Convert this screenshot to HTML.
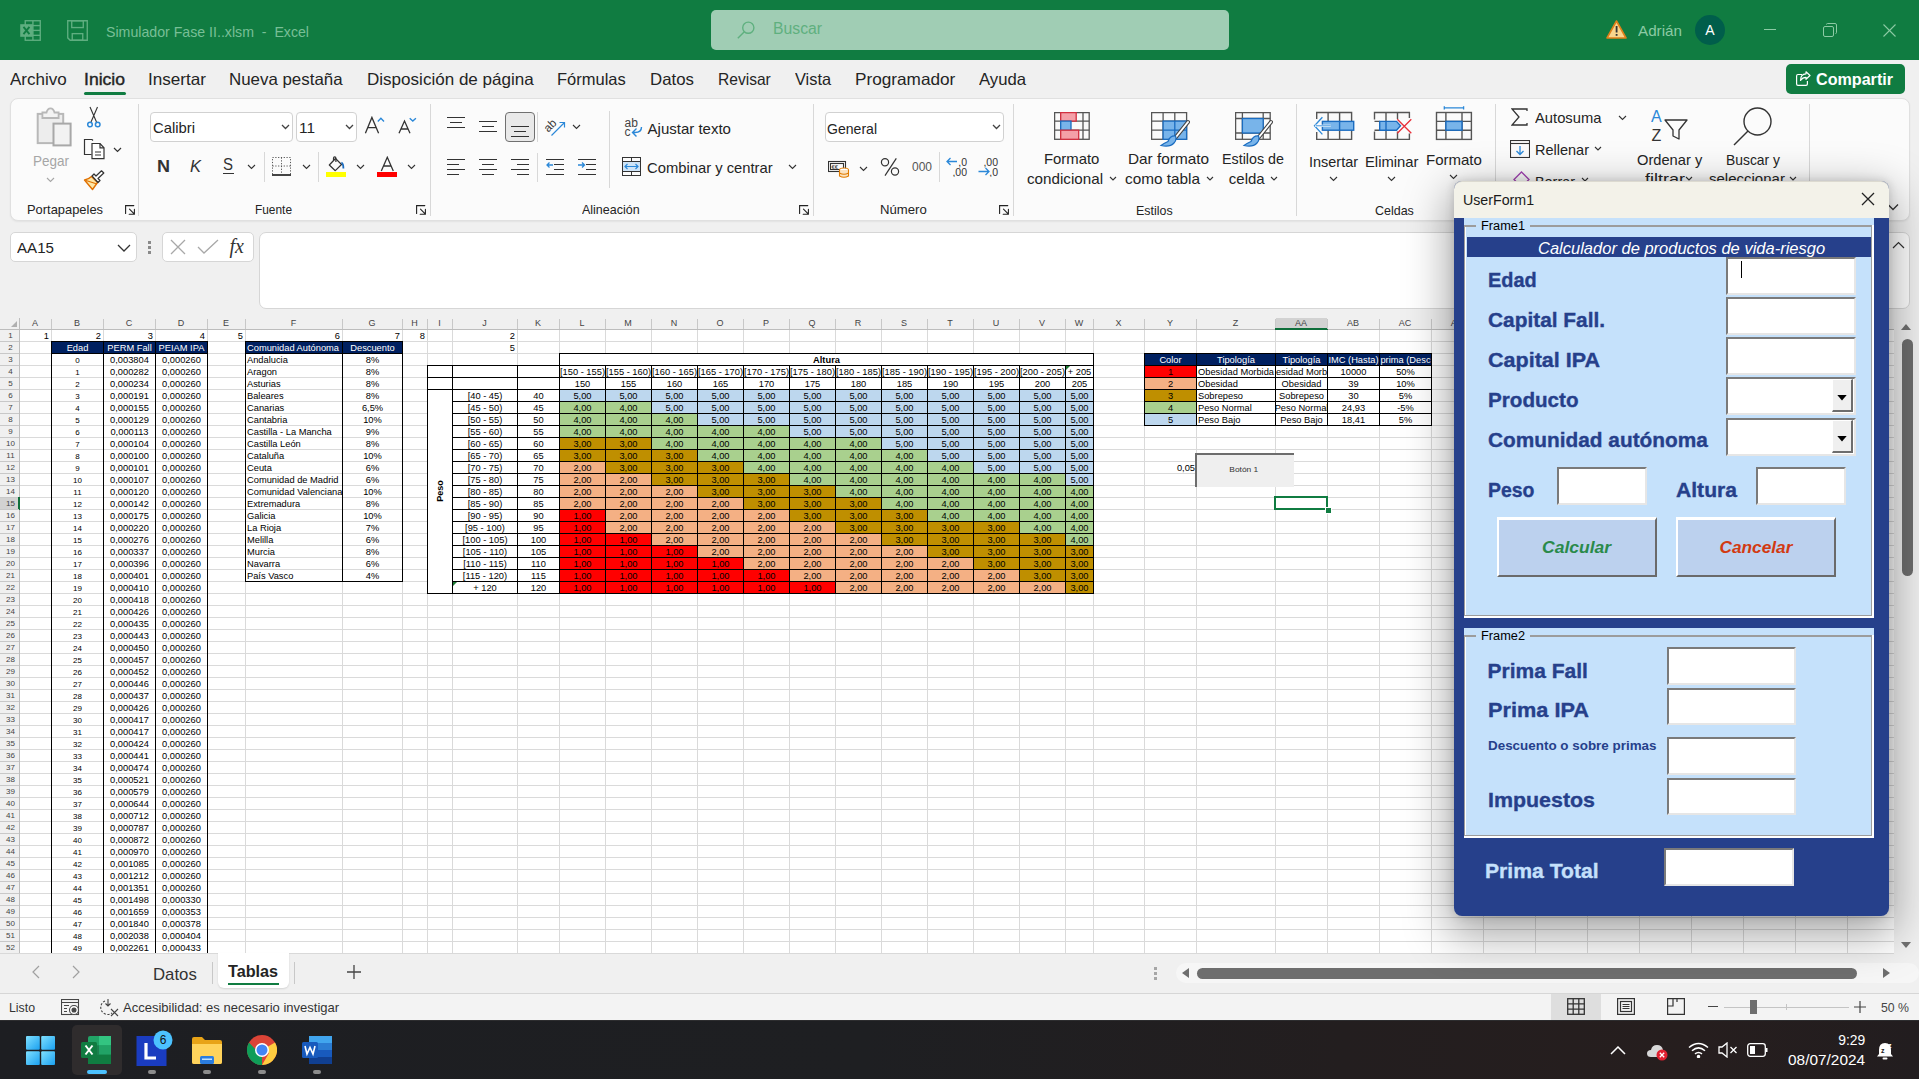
<!DOCTYPE html><html><head><meta charset="utf-8"><style>*{margin:0;padding:0}
html,body{width:1919px;height:1079px;overflow:hidden;background:#f0f0f0;font-family:"Liberation Sans",sans-serif;position:relative}
.a{position:absolute}
.t{position:absolute;white-space:pre}
.c{position:absolute;white-space:nowrap;box-sizing:border-box}
</style></head><body><div class="a" style="left:0px;top:0px;width:1919px;height:60px;background:#107c41;"></div><svg class="a" style="left:20px;top:20px" width="21" height="21" viewBox="0 0 20 20" fill="none" stroke="#5fae80" stroke-width="1.3">
<rect x="5" y="0.7" width="14.3" height="18.6"/><line x1="5" y1="5.3" x2="19.3" y2="5.3"/><line x1="5" y1="9.9" x2="19.3" y2="9.9"/><line x1="5" y1="14.6" x2="19.3" y2="14.6"/><line x1="12.3" y1="0.7" x2="12.3" y2="19.3"/>
<rect x="0.2" y="4" width="12" height="12" fill="#5fae80" stroke="none"/><path d="M3.3 6.5 L9 13.5 M9 6.5 L3.3 13.5" stroke="#107c41" stroke-width="1.8"/></svg><svg class="a" style="left:67px;top:20px" width="21" height="21" viewBox="0 0 20 20" fill="none" stroke="#5fae80" stroke-width="1.3">
<path d="M0.7 0.7 H19.3 V19.3 H3 L0.7 17 Z"/><rect x="4.5" y="0.7" width="11" height="6.5"/><rect x="5" y="13" width="10" height="6.3"/></svg><div class="t" style="left:106.40px;top:23.60px;font-size:15px;line-height:15px;color:#78bf96;transform:scaleX(0.944);transform-origin:left;">Simulador Fase II..xlsm  -  Excel</div><div class="a" style="left:711px;top:10px;width:518px;height:40px;background:#a0cdb4;border-radius:5px;"></div><svg class="a" style="left:737px;top:21px" width="18" height="18" viewBox="0 0 18 18" fill="none" stroke="#5fb07f" stroke-width="1.4"><circle cx="11.3" cy="6.7" r="5.6"/><line x1="7.3" y1="10.7" x2="0.8" y2="17.2"/></svg><div class="t" style="left:773.00px;top:21.45px;font-size:16px;line-height:16px;color:#5fb07f;transform:scaleX(0.984);transform-origin:left;">Buscar</div><svg class="a" style="left:1606px;top:20px" width="21" height="19" viewBox="0 0 21 19"><path d="M10.5 1 L20 18 H1 Z" fill="#f8d58c" stroke="#e0801a" stroke-width="1.6" stroke-linejoin="round"/><rect x="9.7" y="6" width="1.8" height="6.5" fill="#333"/><rect x="9.7" y="14" width="1.8" height="1.8" fill="#333"/></svg><div class="t" style="left:1638.00px;top:23.30px;font-size:15px;line-height:15px;color:#8ccaa4;transform:scaleX(1.015);transform-origin:left;">Adrián</div><div class="a" style="left:1695px;top:15px;width:30px;height:30px;background:#005e4b;border-radius:50%;"></div><div class="t" style="left:1705.33px;top:23.15px;font-size:14px;line-height:14px;color:#fff;">A</div><div class="a" style="left:1764px;top:29px;width:12px;height:1px;background:#8ccaa4;"></div><svg class="a" style="left:1823px;top:23px" width="14" height="14" viewBox="0 0 14 14" fill="none" stroke="#8ccaa4" stroke-width="1"><rect x="0.5" y="3.5" width="10" height="10" rx="1.5"/><path d="M3.5 1.5 Q3.5 0.5 4.5 0.5 H12 Q13.5 0.5 13.5 2 V9.5 Q13.5 10.5 12.5 10.5"/></svg><svg class="a" style="left:1883px;top:24px" width="13" height="13" viewBox="0 0 13 13" stroke="#8ccaa4" stroke-width="1.1"><line x1="0.5" y1="0.5" x2="12.5" y2="12.5"/><line x1="12.5" y1="0.5" x2="0.5" y2="12.5"/></svg><div class="t" style="left:10.00px;top:71.03px;font-size:16.5px;line-height:16.5px;color:#242424;transform:scaleX(1.031);transform-origin:left;">Archivo</div><div class="t" style="left:84.00px;top:71.03px;font-size:16.5px;line-height:16.5px;color:#242424;transform:scaleX(1.064);transform-origin:left;-webkit-text-stroke:0.4px #242424;">Inicio</div><div class="t" style="left:147.80px;top:71.03px;font-size:16.5px;line-height:16.5px;color:#242424;transform:scaleX(1.037);transform-origin:left;">Insertar</div><div class="t" style="left:229.00px;top:71.03px;font-size:16.5px;line-height:16.5px;color:#242424;transform:scaleX(1.023);transform-origin:left;">Nueva pestaña</div><div class="t" style="left:367.00px;top:71.03px;font-size:16.5px;line-height:16.5px;color:#242424;transform:scaleX(1.033);transform-origin:left;">Disposición de página</div><div class="t" style="left:557.00px;top:71.03px;font-size:16.5px;line-height:16.5px;color:#242424;">Fórmulas</div><div class="t" style="left:650.00px;top:71.03px;font-size:16.5px;line-height:16.5px;color:#242424;transform:scaleX(1.018);transform-origin:left;">Datos</div><div class="t" style="left:718.00px;top:71.03px;font-size:16.5px;line-height:16.5px;color:#242424;transform:scaleX(0.944);transform-origin:left;">Revisar</div><div class="t" style="left:794.90px;top:71.03px;font-size:16.5px;line-height:16.5px;color:#242424;transform:scaleX(0.992);transform-origin:left;">Vista</div><div class="t" style="left:855.10px;top:71.03px;font-size:16.5px;line-height:16.5px;color:#242424;transform:scaleX(1.042);transform-origin:left;">Programador</div><div class="t" style="left:979.20px;top:71.03px;font-size:16.5px;line-height:16.5px;color:#242424;transform:scaleX(1.013);transform-origin:left;">Ayuda</div><div class="a" style="left:84px;top:92px;width:42px;height:3px;background:#107c41;border-radius:2px;"></div><div class="a" style="left:1786px;top:64px;width:119px;height:30px;background:#107c41;border-radius:5px;"></div><svg class="a" style="left:1796px;top:71px" width="15" height="15" viewBox="0 0 15 15" fill="none" stroke="#fff" stroke-width="1.2"><path d="M6 3.5 H2 Q0.6 3.5 0.6 5 V13 Q0.6 14.4 2 14.4 H10 Q11.4 14.4 11.4 13 V10"/><path d="M14 4.5 L10 0.8 V2.8 Q4.5 3 4.5 9.5 Q6.5 6.3 10 6.3 V8.3 Z" stroke-linejoin="round"/></svg><div class="t" style="left:1816.00px;top:72.45px;font-size:16px;line-height:16px;color:#fff;font-weight:700;transform:scaleX(1.007);transform-origin:left;">Compartir</div><div class="a" style="left:10px;top:98px;width:1900px;height:123px;background:#fbfbfb;border:1px solid #e0e0e0;box-sizing:border-box;border-radius:8px;box-shadow:0 1px 2px rgba(0,0,0,0.06);"></div><svg class="a" style="left:36px;top:107px" width="37" height="40" viewBox="0 0 37 40" fill="none"><rect x="1.7" y="6.9" width="25.5" height="29.2" stroke="#b8b8b8" stroke-width="2" fill="#ededed"/><path d="M6.4 11 V5.5 H10.5 Q11.5 1.3 14.5 1.3 Q17.5 1.3 18.5 5.5 H22.6 V11 Z" stroke="#b8b8b8" stroke-width="1.8" fill="#f3f3f3"/><rect x="17.5" y="16.6" width="17.1" height="21.8" stroke="#a8a8a8" stroke-width="2" fill="#f2f2f2"/></svg><div class="t" style="left:32.50px;top:153.30px;font-size:15px;line-height:15px;color:#a6a6a6;transform:scaleX(0.899);transform-origin:left;">Pegar</div><svg class="a" style="left:46px;top:177px" width="9" height="5.5" viewBox="0 0 9 5.5" fill="none" stroke="#a6a6a6" stroke-width="1.1"><path d="M1 1 L4.5 4.5 L8 1"/></svg><svg class="a" style="left:86px;top:106px" width="16" height="22" viewBox="0 0 16 22" fill="none" stroke-width="1.1"><path d="M4 1 L10.5 16 M11.5 1 L5 16" stroke="#333"/><circle cx="4" cy="18.5" r="2.3" stroke="#2b88d8" stroke-width="1.5"/><circle cx="11.7" cy="18.5" r="2.3" stroke="#2b88d8" stroke-width="1.5"/></svg><svg class="a" style="left:83px;top:138px" width="23" height="22" viewBox="0 0 23 22" fill="none" stroke="#333" stroke-width="1.2"><path d="M8.5 16.5 H1.5 V1.5 H9 L10 2.5"/><path d="M9 5.5 H17 L21 9.8 V20.6 H9 Z" fill="#fff"/><path d="M17 5.5 V9.8 H21"/><path d="M12 14 H18 M12 17 H18"/></svg><svg class="a" style="left:113px;top:147px" width="9" height="5.5" viewBox="0 0 9 5.5" fill="none" stroke="#333" stroke-width="1.2"><path d="M1 1 L4.5 4.5 L8 1"/></svg><svg class="a" style="left:83px;top:170px" width="22" height="21" viewBox="0 0 22 21" fill="none"><path d="M1.5 10 Q6 9 8.5 6.5 L14.5 12.5 L9.5 19.5 Z" fill="#fde7a8" stroke="#e07000" stroke-width="1.4" stroke-linejoin="round"/><path d="M3 10.5 L14 14" stroke="#e07000" stroke-width="1.2"/><path d="M9 6 L11 4 L13 6 L18.5 0.8 L20.8 3 L15 8.5 L17 10.5 L15 12.5 Z" fill="#fff" stroke="#333" stroke-width="1.2" stroke-linejoin="round"/></svg><div class="t" style="left:27.30px;top:202.99px;font-size:13px;line-height:13px;color:#242424;transform:scaleX(0.992);transform-origin:left;">Portapapeles</div><svg class="a" style="left:125px;top:205px" width="11" height="11" viewBox="0 0 11 11" fill="none" stroke="#222" stroke-width="1.1" stroke-linecap="round"><path d="M0.6 8.5 V0.6 H8.8"/><path d="M4.5 4.2 L9.4 9.1 M9.4 4.4 V9.3 H4.2"/></svg><div class="a" style="left:138px;top:104px;width:1px;height:112px;background:#d8d8d8;"></div><div class="a" style="left:150px;top:112px;width:143px;height:30px;background:#fff;border:1px solid #d1d1d1;box-sizing:border-box;border-radius:4px;"></div><div class="t" style="left:152.50px;top:120.30px;font-size:15px;line-height:15px;color:#242424;transform:scaleX(0.988);transform-origin:left;">Calibri</div><svg class="a" style="left:281px;top:124px" width="9" height="5.5" viewBox="0 0 9 5.5" fill="none" stroke="#424242" stroke-width="1.3"><path d="M1 1 L4.5 4.5 L8 1"/></svg><div class="a" style="left:296px;top:112px;width:61px;height:30px;background:#fff;border:1px solid #d1d1d1;box-sizing:border-box;border-radius:4px;"></div><div class="t" style="left:299.00px;top:120.30px;font-size:15px;line-height:15px;color:#242424;transform:scaleX(1.027);transform-origin:left;">11</div><svg class="a" style="left:345px;top:124px" width="9" height="5.5" viewBox="0 0 9 5.5" fill="none" stroke="#424242" stroke-width="1.3"><path d="M1 1 L4.5 4.5 L8 1"/></svg><svg class="a" style="left:364px;top:116px" width="22" height="19" viewBox="0 0 22 19" fill="none" stroke-width="1.3"><path d="M1.4 17.3 L7.9 1.4 L14.6 17.3 M3.8 11.6 H12.2" stroke="#333"/><path d="M13.8 5.4 L16.9 2.3 L20 5.4" stroke="#2b88d8" stroke-width="1.4"/></svg><svg class="a" style="left:398px;top:116px" width="20" height="19" viewBox="0 0 20 19" fill="none" stroke-width="1.3"><path d="M1 17.3 L6.5 5 L12 17.3 M2.9 13 H10.1" stroke="#333"/><path d="M11.7 2.3 L14.8 5 L17.9 2.3" stroke="#2b88d8" stroke-width="1.4"/></svg><div class="t" style="left:157.00px;top:158.11px;font-size:17px;line-height:17px;color:#333;font-weight:700;transform:scaleX(1.059);transform-origin:left;">N</div><div class="t" style="left:190.00px;top:158.11px;font-size:17px;line-height:17px;color:#333;font-style:italic;transform:scaleX(0.970);transform-origin:left;">K</div><div class="t" style="left:223.00px;top:157.45px;font-size:16px;line-height:16px;color:#333;transform:scaleX(0.937);transform-origin:left;">S</div><div class="a" style="left:223px;top:173px;width:11px;height:1px;background:#333;"></div><svg class="a" style="left:247px;top:164px" width="9" height="5.5" viewBox="0 0 9 5.5" fill="none" stroke="#333" stroke-width="1.1"><path d="M1 1 L4.5 4.5 L8 1"/></svg><div class="a" style="left:264px;top:152px;width:1px;height:30px;background:#d8d8d8;"></div><svg class="a" style="left:271px;top:156px" width="21" height="21" viewBox="0 0 21 21" fill="none" stroke="#555" stroke-width="1" stroke-dasharray="1.2 1.6"><rect x="1.5" y="1.5" width="18" height="17"/><path d="M10.5 1.5 V18.5 M1.5 10 H19.5"/></svg><div class="a" style="left:272px;top:174px;width:19px;height:2px;background:#444;"></div><svg class="a" style="left:302px;top:164px" width="9" height="5.5" viewBox="0 0 9 5.5" fill="none" stroke="#333" stroke-width="1.1"><path d="M1 1 L4.5 4.5 L8 1"/></svg><div class="a" style="left:318px;top:152px;width:1px;height:30px;background:#d8d8d8;"></div><svg class="a" style="left:328px;top:156px" width="17" height="16" viewBox="0 0 17 16" fill="none" stroke="#333" stroke-width="1.2" stroke-linejoin="round"><path d="M1.3 9 L7.5 2.5 L13.5 8.5 L7.3 14.7 Z"/><path d="M5.5 4.6 V2.2 Q5.5 0.8 6.7 0.8 Q7.9 0.8 7.9 2.2 V6"/><path d="M13.4 6.5 Q15.4 7.5 15.4 12.5" stroke="#1a6cc0" stroke-width="1.8"/></svg><div class="a" style="left:326px;top:172px;width:20px;height:5px;background:#ffff00;"></div><svg class="a" style="left:356px;top:164px" width="9" height="5.5" viewBox="0 0 9 5.5" fill="none" stroke="#333" stroke-width="1.1"><path d="M1 1 L4.5 4.5 L8 1"/></svg><svg class="a" style="left:380px;top:156px" width="15" height="16" viewBox="0 0 15 16" fill="none" stroke="#333" stroke-width="1.3"><path d="M1.3 15 L7.3 1.3 L13.3 15 M3.5 10 H11.1"/></svg><div class="a" style="left:377px;top:172px;width:20px;height:5px;background:#ff0000;"></div><svg class="a" style="left:407px;top:164px" width="9" height="5.5" viewBox="0 0 9 5.5" fill="none" stroke="#333" stroke-width="1.1"><path d="M1 1 L4.5 4.5 L8 1"/></svg><div class="t" style="left:255.40px;top:202.99px;font-size:13px;line-height:13px;color:#242424;transform:scaleX(0.914);transform-origin:left;">Fuente</div><svg class="a" style="left:416px;top:205px" width="11" height="11" viewBox="0 0 11 11" fill="none" stroke="#222" stroke-width="1.1" stroke-linecap="round"><path d="M0.6 8.5 V0.6 H8.8"/><path d="M4.5 4.2 L9.4 9.1 M9.4 4.4 V9.3 H4.2"/></svg><div class="a" style="left:430px;top:104px;width:1px;height:112px;background:#d8d8d8;"></div><div class="a" style="left:447px;top:117px;width:18px;height:1.3px;background:#333"></div><div class="a" style="left:450px;top:122px;width:12px;height:1.3px;background:#333"></div><div class="a" style="left:447px;top:127px;width:18px;height:1.3px;background:#333"></div><div class="a" style="left:479px;top:121px;width:18px;height:1.3px;background:#333"></div><div class="a" style="left:482px;top:126px;width:12px;height:1.3px;background:#333"></div><div class="a" style="left:479px;top:131px;width:18px;height:1.3px;background:#333"></div><div class="a" style="left:505px;top:112px;width:30px;height:30px;background:#e9e9e9;border:1px solid #707070;box-sizing:border-box;border-radius:4px;"></div><div class="a" style="left:511px;top:126px;width:18px;height:1.3px;background:#333"></div><div class="a" style="left:514px;top:131px;width:12px;height:1.3px;background:#333"></div><div class="a" style="left:511px;top:136px;width:18px;height:1.3px;background:#333"></div><div class="a" style="left:537px;top:112px;width:1px;height:30px;background:#d8d8d8;"></div><svg class="a" style="left:544px;top:115px" width="23" height="22" viewBox="0 0 23 22" fill="none"><text x="-1" y="15" font-family="Liberation Sans" font-size="11.5" fill="#333" transform="rotate(-45 5 10)">ab</text><path d="M7.5 20.5 L20.5 7.5 M15.5 7.5 H20.5 V12.5" stroke="#2b88d8" stroke-width="1.2"/></svg><svg class="a" style="left:572px;top:124px" width="9" height="5.5" viewBox="0 0 9 5.5" fill="none" stroke="#333" stroke-width="1.1"><path d="M1 1 L4.5 4.5 L8 1"/></svg><div class="a" style="left:447px;top:159px;width:18px;height:1.3px;background:#333"></div><div class="a" style="left:447px;top:164px;width:12px;height:1.3px;background:#333"></div><div class="a" style="left:447px;top:169px;width:18px;height:1.3px;background:#333"></div><div class="a" style="left:447px;top:174px;width:12px;height:1.3px;background:#333"></div><div class="a" style="left:479px;top:159px;width:18px;height:1.3px;background:#333"></div><div class="a" style="left:482px;top:164px;width:12px;height:1.3px;background:#333"></div><div class="a" style="left:479px;top:169px;width:18px;height:1.3px;background:#333"></div><div class="a" style="left:482px;top:174px;width:12px;height:1.3px;background:#333"></div><div class="a" style="left:511px;top:159px;width:18px;height:1.3px;background:#333"></div><div class="a" style="left:517px;top:164px;width:12px;height:1.3px;background:#333"></div><div class="a" style="left:511px;top:169px;width:18px;height:1.3px;background:#333"></div><div class="a" style="left:517px;top:174px;width:12px;height:1.3px;background:#333"></div><div class="a" style="left:537px;top:153px;width:1px;height:29px;background:#d8d8d8;"></div><div class="a" style="left:546px;top:159px;width:18px;height:1.3px;background:#333"></div><div class="a" style="left:554px;top:164px;width:10px;height:1.3px;background:#333"></div><div class="a" style="left:554px;top:169px;width:10px;height:1.3px;background:#333"></div><div class="a" style="left:546px;top:174px;width:18px;height:1.3px;background:#333"></div><svg class="a" style="left:546px;top:161px" width="8" height="8" viewBox="0 0 8 8" fill="none" stroke="#2b88d8" stroke-width="1.3"><path d="M7 4 H1 M3.5 1.5 L1 4 L3.5 6.5"/></svg><div class="a" style="left:578px;top:159px;width:18px;height:1.3px;background:#333"></div><div class="a" style="left:586px;top:164px;width:10px;height:1.3px;background:#333"></div><div class="a" style="left:586px;top:169px;width:10px;height:1.3px;background:#333"></div><div class="a" style="left:578px;top:174px;width:18px;height:1.3px;background:#333"></div><svg class="a" style="left:578px;top:161px" width="8" height="8" viewBox="0 0 8 8" fill="none" stroke="#2b88d8" stroke-width="1.3"><path d="M0 4 H6 M4 1.5 L6.5 4 L4 6.5"/></svg><div class="a" style="left:609px;top:111px;width:1px;height:77px;background:#d8d8d8;"></div><svg class="a" style="left:623px;top:114px" width="21" height="25" viewBox="0 0 21 25" fill="none"><text x="1.5" y="12.7" font-family="Liberation Sans" font-size="12" fill="#444">ab</text><text x="1.5" y="22" font-family="Liberation Sans" font-size="12" fill="#444">c</text><path d="M18.5 13 Q18.5 18.5 12 18.5 H9.5 M13.5 14.5 L9.5 18.5 L13.5 22.5" stroke="#2b88d8" stroke-width="1.4"/></svg><div class="t" style="left:647.60px;top:120.80px;font-size:15px;line-height:15px;color:#242424;">Ajustar texto</div><svg class="a" style="left:622px;top:157px" width="19" height="19" viewBox="0 0 19 19" fill="none" stroke="#333" stroke-width="1"><rect x="0.5" y="0.5" width="18" height="18"/><path d="M0.5 4.5 H18.5 M0.5 14.5 H18.5 M9.5 0.5 V4.5 M9.5 14.5 V18.5"/><rect x="1" y="5" width="17" height="9" fill="#cfe4f7" stroke="none"/><path d="M3 9.5 H16 M5.5 7 L3 9.5 L5.5 12 M13.5 7 L16 9.5 L13.5 12" stroke="#2b88d8" stroke-width="1.2"/></svg><div class="t" style="left:647.00px;top:160.30px;font-size:15px;line-height:15px;color:#242424;transform:scaleX(0.985);transform-origin:left;">Combinar y centrar</div><svg class="a" style="left:788px;top:164px" width="9" height="5.5" viewBox="0 0 9 5.5" fill="none" stroke="#333" stroke-width="1.1"><path d="M1 1 L4.5 4.5 L8 1"/></svg><div class="t" style="left:582.40px;top:202.99px;font-size:13px;line-height:13px;color:#242424;transform:scaleX(0.960);transform-origin:left;">Alineación</div><svg class="a" style="left:799px;top:205px" width="11" height="11" viewBox="0 0 11 11" fill="none" stroke="#222" stroke-width="1.1" stroke-linecap="round"><path d="M0.6 8.5 V0.6 H8.8"/><path d="M4.5 4.2 L9.4 9.1 M9.4 4.4 V9.3 H4.2"/></svg><div class="a" style="left:813px;top:104px;width:1px;height:112px;background:#d8d8d8;"></div><div class="a" style="left:825px;top:112px;width:179px;height:30px;background:#fff;border:1px solid #d1d1d1;box-sizing:border-box;border-radius:4px;"></div><div class="t" style="left:827.40px;top:120.60px;font-size:15px;line-height:15px;color:#242424;transform:scaleX(0.937);transform-origin:left;">General</div><svg class="a" style="left:992px;top:124px" width="9" height="5.5" viewBox="0 0 9 5.5" fill="none" stroke="#424242" stroke-width="1.3"><path d="M1 1 L4.5 4.5 L8 1"/></svg><svg class="a" style="left:828px;top:160px" width="22" height="18" viewBox="0 0 22 18" fill="none" stroke="#333" stroke-width="1.1"><rect x="0.5" y="1.5" width="17" height="10"/><rect x="2.5" y="3.5" width="13" height="6"/><text x="3.5" y="9" font-family="Liberation Sans" font-size="6" fill="#333" stroke="none">€€</text><ellipse cx="16" cy="10" rx="4.5" ry="2" fill="#fff" stroke="#e07b00"/><path d="M11.5 10 V16 Q16 18.5 20.5 16 V10 M11.5 13 Q16 15.5 20.5 13" stroke="#e07b00" fill="#fbe3c2"/></svg><svg class="a" style="left:859px;top:166px" width="9" height="5.5" viewBox="0 0 9 5.5" fill="none" stroke="#333" stroke-width="1.1"><path d="M1 1 L4.5 4.5 L8 1"/></svg><svg class="a" style="left:880px;top:157px" width="20" height="20" viewBox="0 0 20 20" fill="none" stroke="#333" stroke-width="1.2"><circle cx="5" cy="5.3" r="3.6"/><circle cx="15" cy="14.5" r="3.6"/><path d="M16.3 1.3 L5 18.7"/></svg><div class="t" style="left:912.00px;top:161.44px;font-size:12px;line-height:12px;color:#555;">000</div><div class="a" style="left:939px;top:152px;width:1px;height:30px;background:#d8d8d8;"></div><svg class="a" style="left:946px;top:156px" width="22" height="21" viewBox="0 0 22 21" fill="none"><path d="M1 5.5 H11 M4.5 2 L1 5.5 L4.5 9" stroke="#2b88d8" stroke-width="1.3"/><text x="21" y="10" text-anchor="end" font-family="Liberation Sans" font-size="10.5" fill="#333">,0</text><text x="21" y="20" text-anchor="end" font-family="Liberation Sans" font-size="10.5" fill="#333">,00</text></svg><svg class="a" style="left:977px;top:156px" width="22" height="21" viewBox="0 0 22 21" fill="none"><text x="21" y="10" text-anchor="end" font-family="Liberation Sans" font-size="10.5" fill="#333">,00</text><text x="21" y="20" text-anchor="end" font-family="Liberation Sans" font-size="10.5" fill="#333">,0</text><path d="M1.5 15.5 H12 M8.5 12 L12 15.5 L8.5 19" stroke="#2b88d8" stroke-width="1.3"/></svg><div class="t" style="left:879.50px;top:202.99px;font-size:13px;line-height:13px;color:#242424;transform:scaleX(1.010);transform-origin:left;">Número</div><svg class="a" style="left:999px;top:205px" width="11" height="11" viewBox="0 0 11 11" fill="none" stroke="#222" stroke-width="1.1" stroke-linecap="round"><path d="M0.6 8.5 V0.6 H8.8"/><path d="M4.5 4.2 L9.4 9.1 M9.4 4.4 V9.3 H4.2"/></svg><div class="a" style="left:1013px;top:104px;width:1px;height:112px;background:#d8d8d8;"></div><svg class="a" style="left:1054px;top:112px" width="36" height="28" viewBox="0 0 36 28" fill="none" stroke-width="1.3"><rect x="0.6" y="0.6" width="34.6" height="26.7" stroke="#555" fill="#fafafa"/><path d="M0.6 9.1 H35.2 M0.6 18.2 H35.2 M6.7 0.6 V27.3 M29 0.6 V27.3" stroke="#555"/><rect x="6.7" y="0.6" width="15.5" height="8.5" fill="#f4a0a8" stroke="#d23040"/><rect x="6.7" y="9.1" width="10.3" height="9.1" fill="#78b4ea" stroke="#1a6cc0"/><rect x="6.7" y="18.2" width="18" height="9.1" fill="#f4a0a8" stroke="#d23040"/></svg><div class="t" style="left:1044.40px;top:151.30px;font-size:15px;line-height:15px;color:#242424;transform:scaleX(0.992);transform-origin:left;">Formato</div><div class="t" style="left:1026.50px;top:171.30px;font-size:15px;line-height:15px;color:#242424;transform:scaleX(1.013);transform-origin:left;">condicional</div><svg class="a" style="left:1109px;top:176px" width="8" height="5.0" viewBox="0 0 8 5.0" fill="none" stroke="#333" stroke-width="1.1"><path d="M1 1 L4.0 4.0 L7 1"/></svg><svg class="a" style="left:1151px;top:112px" width="39" height="35" viewBox="0 0 39 35" fill="none" stroke-width="1.3"><rect x="0.6" y="0.6" width="35" height="26.7" stroke="#555" fill="#fafafa"/><path d="M0.6 9.1 H35.6 M0.6 18.2 H35.6 M12.1 0.6 V27.3 M23.8 0.6 V27.3" stroke="#555"/><rect x="12.1" y="9.1" width="23.5" height="18.2" fill="#78b4ea" stroke="#1a6cc0"/><path d="M12.1 18.2 H35.6 M23.8 9.1 V27.3" stroke="#1a6cc0"/><path d="M37 10 L25 25" stroke="#444" stroke-width="4" stroke-linecap="round"/><path d="M37 10 L25 25" stroke="#fff" stroke-width="2" stroke-linecap="round"/><path d="M24.5 24 Q19 23.5 17 29.5 Q12.5 31.5 10 33.5 Q19 35.5 23 31 Q26 28 24.5 24 Z" fill="#78b4ea" stroke="#1a6cc0" stroke-width="1.2"/></svg><div class="t" style="left:1128.40px;top:151.30px;font-size:15px;line-height:15px;color:#242424;transform:scaleX(1.023);transform-origin:left;">Dar formato</div><div class="t" style="left:1124.60px;top:171.30px;font-size:15px;line-height:15px;color:#242424;transform:scaleX(1.022);transform-origin:left;">como tabla</div><svg class="a" style="left:1206px;top:176px" width="8" height="5.0" viewBox="0 0 8 5.0" fill="none" stroke="#333" stroke-width="1.1"><path d="M1 1 L4.0 4.0 L7 1"/></svg><svg class="a" style="left:1235px;top:112px" width="38" height="35" viewBox="0 0 38 35" fill="none" stroke-width="1.3"><rect x="0.6" y="0.6" width="34.6" height="26.7" stroke="#555" fill="#fafafa"/><path d="M0.6 6.5 H35.2 M0.6 21 H35.2 M7.4 0.6 V27.3 M28.2 0.6 V27.3" stroke="#555"/><rect x="7.4" y="6.5" width="20.8" height="14.5" fill="#78b4ea" stroke="#1a6cc0"/><path d="M36 10 L24 25" stroke="#444" stroke-width="4" stroke-linecap="round"/><path d="M36 10 L24 25" stroke="#fff" stroke-width="2" stroke-linecap="round"/><path d="M23.5 24 Q18 23.5 16 29.5 Q11.5 31.5 9 33.5 Q18 35.5 22 31 Q25 28 23.5 24 Z" fill="#78b4ea" stroke="#1a6cc0" stroke-width="1.2"/></svg><div class="t" style="left:1221.60px;top:151.30px;font-size:15px;line-height:15px;color:#242424;transform:scaleX(0.953);transform-origin:left;">Estilos de</div><div class="t" style="left:1228.80px;top:171.30px;font-size:15px;line-height:15px;color:#242424;">celda</div><svg class="a" style="left:1270px;top:176px" width="8" height="5.0" viewBox="0 0 8 5.0" fill="none" stroke="#333" stroke-width="1.1"><path d="M1 1 L4.0 4.0 L7 1"/></svg><div class="t" style="left:1136.00px;top:203.99px;font-size:13px;line-height:13px;color:#242424;transform:scaleX(0.956);transform-origin:left;">Estilos</div><div class="a" style="left:1296px;top:104px;width:1px;height:112px;background:#d8d8d8;"></div><svg class="a" style="left:1313px;top:111px" width="42" height="30" viewBox="0 0 42 30" fill="none" stroke-width="1.4" stroke-linejoin="miter"><path d="M3.7 8 V1.5 H38.6 V28.4 H3.7 V21" stroke="#555" fill="#fafafa"/><path d="M15.1 1.5 V28.4 M26.6 1.5 V28.4" stroke="#555"/><rect x="9.4" y="10.4" width="31.3" height="8.8" fill="#78b4ea" stroke="#1a6cc0"/><path d="M26.6 10.4 V19.2" stroke="#1a6cc0"/><path d="M9.4 6.2 L1.5 14.8 L9.4 23.4" stroke="#2b88d8" stroke-width="1.3"/><path d="M2 14.8 H17.7" stroke="#fff" stroke-width="2.2"/><path d="M2.5 14.8 H17.7" stroke="#2b88d8" stroke-width="0.9"/></svg><div class="t" style="left:1309.00px;top:153.80px;font-size:15px;line-height:15px;color:#242424;transform:scaleX(0.964);transform-origin:left;">Insertar</div><svg class="a" style="left:1329px;top:176px" width="9" height="5.5" viewBox="0 0 9 5.5" fill="none" stroke="#333" stroke-width="1.1"><path d="M1 1 L4.5 4.5 L8 1"/></svg><svg class="a" style="left:1373px;top:111px" width="40" height="30" viewBox="0 0 40 30" fill="none" stroke-width="1.4"><path d="M1.5 8.5 V1.5 H36.4 V7 M36.4 22.5 V28.4 H1.5 V20.5" stroke="#555" fill="#fafafa"/><path d="M1.5 10.4 H6.7 M1.5 19.2 H6.7 M13 1.5 V10.4 M13 19.2 V28.4 M24.5 1.5 V8 M24.5 20.5 V28.4" stroke="#555"/><path d="M6.7 10.4 H23.5 L27.5 14.8 L23.5 19.2 H6.7 Z" fill="#78b4ea" stroke="#1a6cc0"/><path d="M13 10.4 V19.2" stroke="#1a6cc0"/><path d="M24.3 8.3 L38.3 22.2 M38.3 8.3 L24.3 22.2" stroke="#e8303a" stroke-width="1.3"/></svg><div class="t" style="left:1365.40px;top:153.80px;font-size:15px;line-height:15px;color:#242424;transform:scaleX(0.986);transform-origin:left;">Eliminar</div><svg class="a" style="left:1387px;top:176px" width="9" height="5.5" viewBox="0 0 9 5.5" fill="none" stroke="#333" stroke-width="1.1"><path d="M1 1 L4.5 4.5 L8 1"/></svg><svg class="a" style="left:1435px;top:105px" width="38" height="36" viewBox="0 0 38 36" fill="none" stroke-width="1.4"><path d="M9.3 2.8 H28.6 M9.3 1.3 V4.4 M28.6 1.3 V4.4" stroke="#2b88d8" stroke-width="1.3"/><rect x="1.5" y="7.5" width="34.9" height="26.9" stroke="#555" fill="#fafafa"/><path d="M1.5 16.4 H36.4 M1.5 25.2 H36.4 M10.9 7.5 V34.4 M27 7.5 V34.4" stroke="#555"/><rect x="10.9" y="16.4" width="16.1" height="8.8" fill="#78b4ea" stroke="#1a6cc0"/></svg><div class="t" style="left:1426.00px;top:151.50px;font-size:15px;line-height:15px;color:#242424;">Formato</div><svg class="a" style="left:1449px;top:174px" width="9" height="5.5" viewBox="0 0 9 5.5" fill="none" stroke="#333" stroke-width="1.1"><path d="M1 1 L4.5 4.5 L8 1"/></svg><div class="t" style="left:1375.20px;top:203.99px;font-size:13px;line-height:13px;color:#242424;transform:scaleX(0.959);transform-origin:left;">Celdas</div><div class="a" style="left:1495px;top:104px;width:1px;height:112px;background:#d8d8d8;"></div><svg class="a" style="left:1511px;top:108px" width="17" height="18" viewBox="0 0 17 18" fill="none" stroke="#333" stroke-width="1.3"><path d="M16 3 V1 H1 L8 9 L1 17 H16 V15"/></svg><div class="t" style="left:1535.00px;top:110.30px;font-size:15px;line-height:15px;color:#242424;transform:scaleX(0.983);transform-origin:left;">Autosuma</div><svg class="a" style="left:1618px;top:115px" width="9" height="5.5" viewBox="0 0 9 5.5" fill="none" stroke="#333" stroke-width="1.1"><path d="M1 1 L4.5 4.5 L8 1"/></svg><svg class="a" style="left:1510px;top:140px" width="20" height="18" viewBox="0 0 20 18" fill="none" stroke="#333" stroke-width="1.1"><rect x="0.5" y="0.5" width="19" height="17"/><path d="M0.5 3.5 H19.5"/><path d="M10 6 V14 M6.5 11 L10 14.5 L13.5 11" stroke="#2b88d8" stroke-width="1.3"/></svg><div class="t" style="left:1535.00px;top:142.30px;font-size:15px;line-height:15px;color:#242424;transform:scaleX(0.967);transform-origin:left;">Rellenar</div><svg class="a" style="left:1594px;top:146px" width="8" height="5.0" viewBox="0 0 8 5.0" fill="none" stroke="#333" stroke-width="1.1"><path d="M1 1 L4.0 4.0 L7 1"/></svg><svg class="a" style="left:1513px;top:171px" width="17" height="17" viewBox="0 0 17 17" fill="none" stroke="#a040b0" stroke-width="1.3"><path d="M8.5 1 L16 8.5 L8.5 16 L1 8.5 Z"/></svg><div class="t" style="left:1535.00px;top:174.30px;font-size:15px;line-height:15px;color:#242424;transform:scaleX(0.960);transform-origin:left;">Borrar</div><svg class="a" style="left:1581px;top:177px" width="8" height="5.0" viewBox="0 0 8 5.0" fill="none" stroke="#333" stroke-width="1.1"><path d="M1 1 L4.0 4.0 L7 1"/></svg><svg class="a" style="left:1651px;top:108px" width="38" height="35" viewBox="0 0 38 35" fill="none" stroke-width="1.3"><text x="0" y="14" font-family="Liberation Sans" font-size="16" fill="#2b88d8">A</text><text x="0.5" y="33" font-family="Liberation Sans" font-size="16" fill="#333">Z</text><path d="M14 12 H36 L28 22 V31 L22 28 V22 Z" stroke="#333" stroke-linejoin="round"/></svg><div class="t" style="left:1636.80px;top:151.50px;font-size:15px;line-height:15px;color:#242424;transform:scaleX(0.978);transform-origin:left;">Ordenar y</div><div class="t" style="left:1645.00px;top:171.30px;font-size:15px;line-height:15px;color:#242424;transform:scaleX(1.200);transform-origin:left;">filtrar</div><svg class="a" style="left:1685px;top:176px" width="8" height="5.0" viewBox="0 0 8 5.0" fill="none" stroke="#333" stroke-width="1.1"><path d="M1 1 L4.0 4.0 L7 1"/></svg><svg class="a" style="left:1733px;top:107px" width="39" height="39" viewBox="0 0 39 39" fill="none" stroke="#333" stroke-width="1.4"><circle cx="24.5" cy="14.5" r="13.5"/><line x1="15" y1="24" x2="1" y2="38"/></svg><div class="t" style="left:1726.00px;top:151.50px;font-size:15px;line-height:15px;color:#242424;transform:scaleX(0.925);transform-origin:left;">Buscar y</div><div class="t" style="left:1709.00px;top:171.30px;font-size:15px;line-height:15px;color:#242424;">seleccionar</div><svg class="a" style="left:1789px;top:176px" width="8" height="5.0" viewBox="0 0 8 5.0" fill="none" stroke="#333" stroke-width="1.1"><path d="M1 1 L4.0 4.0 L7 1"/></svg><div class="a" style="left:1809px;top:104px;width:1px;height:112px;background:#d8d8d8;"></div><svg class="a" style="left:1887px;top:203px" width="12" height="8" viewBox="0 0 12 8" fill="none" stroke="#333" stroke-width="1.3"><path d="M1 1.5 L6 6.5 L11 1.5"/></svg><div class="a" style="left:10px;top:232px;width:127px;height:30px;background:#fff;border:1px solid #d6d6d6;box-sizing:border-box;border-radius:5px;"></div><div class="t" style="left:17.20px;top:240.30px;font-size:15px;line-height:15px;color:#242424;transform:scaleX(1.008);transform-origin:left;">AA15</div><svg class="a" style="left:117px;top:244px" width="14" height="8" viewBox="0 0 14 8" fill="none" stroke="#333" stroke-width="1.3"><path d="M1 1 L7 7 L13 1"/></svg><div class="a" style="left:148px;top:241px;width:3px;height:3px;background:#8a8a8a;"></div><div class="a" style="left:148px;top:246px;width:3px;height:3px;background:#8a8a8a;"></div><div class="a" style="left:148px;top:251px;width:3px;height:3px;background:#8a8a8a;"></div><div class="a" style="left:162px;top:232px;width:92px;height:30px;background:#fff;border:1px solid #d6d6d6;box-sizing:border-box;border-radius:5px;"></div><svg class="a" style="left:170px;top:239px" width="16" height="16" viewBox="0 0 16 16" stroke="#a8a8a8" stroke-width="1.3"><path d="M1 1 L15 15 M15 1 L1 15"/></svg><svg class="a" style="left:197px;top:239px" width="22" height="16" viewBox="0 0 22 16" fill="none" stroke="#a8a8a8" stroke-width="1.3"><path d="M1 8 L7 14 L21 1"/></svg><div class="t" style="left:229px;top:234px;font-family:'Liberation Serif';font-style:italic;font-size:21px;line-height:24px;color:#333;transform:scaleX(0.95)">fx</div><div class="a" style="left:259px;top:232px;width:1651px;height:77px;background:#fff;border:1px solid #d6d6d6;box-sizing:border-box;border-radius:7px;"></div><svg class="a" style="left:1892px;top:241px" width="13" height="8" viewBox="0 0 13 8" fill="none" stroke="#333" stroke-width="1.2"><path d="M1 7 L6.5 1.5 L12 7"/></svg><div class="a" style="left:0px;top:318px;width:1894px;height:635px;background:#fff;"></div><div class="a" style="left:19px;top:330px;width:1875px;height:624px;background:repeating-linear-gradient(to bottom, transparent 0px, transparent 11px, #dadada 11px, #dadada 12px)"></div><div class="a" style="left:51px;top:330px;width:1px;height:623px;background:#dadada;"></div><div class="a" style="left:103px;top:330px;width:1px;height:623px;background:#dadada;"></div><div class="a" style="left:155px;top:330px;width:1px;height:623px;background:#dadada;"></div><div class="a" style="left:207px;top:330px;width:1px;height:623px;background:#dadada;"></div><div class="a" style="left:245px;top:330px;width:1px;height:623px;background:#dadada;"></div><div class="a" style="left:342px;top:330px;width:1px;height:623px;background:#dadada;"></div><div class="a" style="left:402px;top:330px;width:1px;height:623px;background:#dadada;"></div><div class="a" style="left:427px;top:330px;width:1px;height:623px;background:#dadada;"></div><div class="a" style="left:452px;top:330px;width:1px;height:623px;background:#dadada;"></div><div class="a" style="left:517px;top:330px;width:1px;height:623px;background:#dadada;"></div><div class="a" style="left:559px;top:330px;width:1px;height:623px;background:#dadada;"></div><div class="a" style="left:605px;top:330px;width:1px;height:623px;background:#dadada;"></div><div class="a" style="left:651px;top:330px;width:1px;height:623px;background:#dadada;"></div><div class="a" style="left:697px;top:330px;width:1px;height:623px;background:#dadada;"></div><div class="a" style="left:743px;top:330px;width:1px;height:623px;background:#dadada;"></div><div class="a" style="left:789px;top:330px;width:1px;height:623px;background:#dadada;"></div><div class="a" style="left:835px;top:330px;width:1px;height:623px;background:#dadada;"></div><div class="a" style="left:881px;top:330px;width:1px;height:623px;background:#dadada;"></div><div class="a" style="left:927px;top:330px;width:1px;height:623px;background:#dadada;"></div><div class="a" style="left:973px;top:330px;width:1px;height:623px;background:#dadada;"></div><div class="a" style="left:1019px;top:330px;width:1px;height:623px;background:#dadada;"></div><div class="a" style="left:1065px;top:330px;width:1px;height:623px;background:#dadada;"></div><div class="a" style="left:1093px;top:330px;width:1px;height:623px;background:#dadada;"></div><div class="a" style="left:1144px;top:330px;width:1px;height:623px;background:#dadada;"></div><div class="a" style="left:1196px;top:330px;width:1px;height:623px;background:#dadada;"></div><div class="a" style="left:1275px;top:330px;width:1px;height:623px;background:#dadada;"></div><div class="a" style="left:1327px;top:330px;width:1px;height:623px;background:#dadada;"></div><div class="a" style="left:1379px;top:330px;width:1px;height:623px;background:#dadada;"></div><div class="a" style="left:1431px;top:330px;width:1px;height:623px;background:#dadada;"></div><div class="a" style="left:1483px;top:330px;width:1px;height:623px;background:#dadada;"></div><div class="a" style="left:1535px;top:330px;width:1px;height:623px;background:#dadada;"></div><div class="a" style="left:1587px;top:330px;width:1px;height:623px;background:#dadada;"></div><div class="a" style="left:1639px;top:330px;width:1px;height:623px;background:#dadada;"></div><div class="a" style="left:1691px;top:330px;width:1px;height:623px;background:#dadada;"></div><div class="a" style="left:1743px;top:330px;width:1px;height:623px;background:#dadada;"></div><div class="a" style="left:1795px;top:330px;width:1px;height:623px;background:#dadada;"></div><div class="a" style="left:1847px;top:330px;width:1px;height:623px;background:#dadada;"></div><div class="a" style="left:0px;top:318px;width:1894px;height:11px;background:#f0f0f0;"></div><div class="a" style="left:0px;top:329px;width:1894px;height:1px;background:#bdbdbd;"></div><div class="a" style="left:0px;top:330px;width:19px;height:623px;background:#f0f0f0;"></div><div class="a" style="left:19px;top:318px;width:1px;height:635px;background:#bdbdbd;"></div><svg class="a" style="left:11px;top:321px" width="6" height="6" viewBox="0 0 6 6"><path d="M6 0 V6 H0 Z" fill="#b0b0b0"/></svg><div class="a" style="left:51px;top:319px;width:1px;height:10px;background:#c8c8c8;"></div><div class="c" style="left:19px;top:318px;width:32px;height:11px;line-height:10px;font-size:9px;text-align:center;color:#444">A</div><div class="a" style="left:103px;top:319px;width:1px;height:10px;background:#c8c8c8;"></div><div class="c" style="left:51px;top:318px;width:52px;height:11px;line-height:10px;font-size:9px;text-align:center;color:#444">B</div><div class="a" style="left:155px;top:319px;width:1px;height:10px;background:#c8c8c8;"></div><div class="c" style="left:103px;top:318px;width:52px;height:11px;line-height:10px;font-size:9px;text-align:center;color:#444">C</div><div class="a" style="left:207px;top:319px;width:1px;height:10px;background:#c8c8c8;"></div><div class="c" style="left:155px;top:318px;width:52px;height:11px;line-height:10px;font-size:9px;text-align:center;color:#444">D</div><div class="a" style="left:245px;top:319px;width:1px;height:10px;background:#c8c8c8;"></div><div class="c" style="left:207px;top:318px;width:38px;height:11px;line-height:10px;font-size:9px;text-align:center;color:#444">E</div><div class="a" style="left:342px;top:319px;width:1px;height:10px;background:#c8c8c8;"></div><div class="c" style="left:245px;top:318px;width:97px;height:11px;line-height:10px;font-size:9px;text-align:center;color:#444">F</div><div class="a" style="left:402px;top:319px;width:1px;height:10px;background:#c8c8c8;"></div><div class="c" style="left:342px;top:318px;width:60px;height:11px;line-height:10px;font-size:9px;text-align:center;color:#444">G</div><div class="a" style="left:427px;top:319px;width:1px;height:10px;background:#c8c8c8;"></div><div class="c" style="left:402px;top:318px;width:25px;height:11px;line-height:10px;font-size:9px;text-align:center;color:#444">H</div><div class="a" style="left:452px;top:319px;width:1px;height:10px;background:#c8c8c8;"></div><div class="c" style="left:427px;top:318px;width:25px;height:11px;line-height:10px;font-size:9px;text-align:center;color:#444">I</div><div class="a" style="left:517px;top:319px;width:1px;height:10px;background:#c8c8c8;"></div><div class="c" style="left:452px;top:318px;width:65px;height:11px;line-height:10px;font-size:9px;text-align:center;color:#444">J</div><div class="a" style="left:559px;top:319px;width:1px;height:10px;background:#c8c8c8;"></div><div class="c" style="left:517px;top:318px;width:42px;height:11px;line-height:10px;font-size:9px;text-align:center;color:#444">K</div><div class="a" style="left:605px;top:319px;width:1px;height:10px;background:#c8c8c8;"></div><div class="c" style="left:559px;top:318px;width:46px;height:11px;line-height:10px;font-size:9px;text-align:center;color:#444">L</div><div class="a" style="left:651px;top:319px;width:1px;height:10px;background:#c8c8c8;"></div><div class="c" style="left:605px;top:318px;width:46px;height:11px;line-height:10px;font-size:9px;text-align:center;color:#444">M</div><div class="a" style="left:697px;top:319px;width:1px;height:10px;background:#c8c8c8;"></div><div class="c" style="left:651px;top:318px;width:46px;height:11px;line-height:10px;font-size:9px;text-align:center;color:#444">N</div><div class="a" style="left:743px;top:319px;width:1px;height:10px;background:#c8c8c8;"></div><div class="c" style="left:697px;top:318px;width:46px;height:11px;line-height:10px;font-size:9px;text-align:center;color:#444">O</div><div class="a" style="left:789px;top:319px;width:1px;height:10px;background:#c8c8c8;"></div><div class="c" style="left:743px;top:318px;width:46px;height:11px;line-height:10px;font-size:9px;text-align:center;color:#444">P</div><div class="a" style="left:835px;top:319px;width:1px;height:10px;background:#c8c8c8;"></div><div class="c" style="left:789px;top:318px;width:46px;height:11px;line-height:10px;font-size:9px;text-align:center;color:#444">Q</div><div class="a" style="left:881px;top:319px;width:1px;height:10px;background:#c8c8c8;"></div><div class="c" style="left:835px;top:318px;width:46px;height:11px;line-height:10px;font-size:9px;text-align:center;color:#444">R</div><div class="a" style="left:927px;top:319px;width:1px;height:10px;background:#c8c8c8;"></div><div class="c" style="left:881px;top:318px;width:46px;height:11px;line-height:10px;font-size:9px;text-align:center;color:#444">S</div><div class="a" style="left:973px;top:319px;width:1px;height:10px;background:#c8c8c8;"></div><div class="c" style="left:927px;top:318px;width:46px;height:11px;line-height:10px;font-size:9px;text-align:center;color:#444">T</div><div class="a" style="left:1019px;top:319px;width:1px;height:10px;background:#c8c8c8;"></div><div class="c" style="left:973px;top:318px;width:46px;height:11px;line-height:10px;font-size:9px;text-align:center;color:#444">U</div><div class="a" style="left:1065px;top:319px;width:1px;height:10px;background:#c8c8c8;"></div><div class="c" style="left:1019px;top:318px;width:46px;height:11px;line-height:10px;font-size:9px;text-align:center;color:#444">V</div><div class="a" style="left:1093px;top:319px;width:1px;height:10px;background:#c8c8c8;"></div><div class="c" style="left:1065px;top:318px;width:28px;height:11px;line-height:10px;font-size:9px;text-align:center;color:#444">W</div><div class="a" style="left:1144px;top:319px;width:1px;height:10px;background:#c8c8c8;"></div><div class="c" style="left:1093px;top:318px;width:51px;height:11px;line-height:10px;font-size:9px;text-align:center;color:#444">X</div><div class="a" style="left:1196px;top:319px;width:1px;height:10px;background:#c8c8c8;"></div><div class="c" style="left:1144px;top:318px;width:52px;height:11px;line-height:10px;font-size:9px;text-align:center;color:#444">Y</div><div class="a" style="left:1275px;top:319px;width:1px;height:10px;background:#c8c8c8;"></div><div class="c" style="left:1196px;top:318px;width:79px;height:11px;line-height:10px;font-size:9px;text-align:center;color:#444">Z</div><div class="a" style="left:1276px;top:318px;width:51px;height:11px;background:#d2d2d2;"></div><div class="a" style="left:1275px;top:328px;width:53px;height:2px;background:#0e6e3a;"></div><div class="a" style="left:1327px;top:319px;width:1px;height:10px;background:#c8c8c8;"></div><div class="c" style="left:1275px;top:318px;width:52px;height:11px;line-height:10px;font-size:9px;text-align:center;color:#444">AA</div><div class="a" style="left:1379px;top:319px;width:1px;height:10px;background:#c8c8c8;"></div><div class="c" style="left:1327px;top:318px;width:52px;height:11px;line-height:10px;font-size:9px;text-align:center;color:#444">AB</div><div class="a" style="left:1431px;top:319px;width:1px;height:10px;background:#c8c8c8;"></div><div class="c" style="left:1379px;top:318px;width:52px;height:11px;line-height:10px;font-size:9px;text-align:center;color:#444">AC</div><div class="a" style="left:1483px;top:319px;width:1px;height:10px;background:#c8c8c8;"></div><div class="c" style="left:1431px;top:318px;width:52px;height:11px;line-height:10px;font-size:9px;text-align:center;color:#444">AD</div><div class="a" style="left:1535px;top:319px;width:1px;height:10px;background:#c8c8c8;"></div><div class="c" style="left:1483px;top:318px;width:52px;height:11px;line-height:10px;font-size:9px;text-align:center;color:#444">AE</div><div class="a" style="left:1587px;top:319px;width:1px;height:10px;background:#c8c8c8;"></div><div class="c" style="left:1535px;top:318px;width:52px;height:11px;line-height:10px;font-size:9px;text-align:center;color:#444">AF</div><div class="a" style="left:1639px;top:319px;width:1px;height:10px;background:#c8c8c8;"></div><div class="c" style="left:1587px;top:318px;width:52px;height:11px;line-height:10px;font-size:9px;text-align:center;color:#444">AG</div><div class="a" style="left:1691px;top:319px;width:1px;height:10px;background:#c8c8c8;"></div><div class="c" style="left:1639px;top:318px;width:52px;height:11px;line-height:10px;font-size:9px;text-align:center;color:#444">AH</div><div class="a" style="left:1743px;top:319px;width:1px;height:10px;background:#c8c8c8;"></div><div class="c" style="left:1691px;top:318px;width:52px;height:11px;line-height:10px;font-size:9px;text-align:center;color:#444">AI</div><div class="a" style="left:1795px;top:319px;width:1px;height:10px;background:#c8c8c8;"></div><div class="c" style="left:1743px;top:318px;width:52px;height:11px;line-height:10px;font-size:9px;text-align:center;color:#444">AJ</div><div class="a" style="left:1847px;top:319px;width:1px;height:10px;background:#c8c8c8;"></div><div class="c" style="left:1795px;top:318px;width:52px;height:11px;line-height:10px;font-size:9px;text-align:center;color:#444">AK</div><div class="a" style="left:1899px;top:319px;width:1px;height:10px;background:#c8c8c8;"></div><div class="c" style="left:1847px;top:318px;width:52px;height:11px;line-height:10px;font-size:9px;text-align:center;color:#444">AL</div><div class="a" style="left:0px;top:341px;width:19px;height:1px;background:#c8c8c8;"></div><div class="c" style="left:0px;top:330px;width:19px;height:11px;line-height:12px;font-size:8px;text-align:center;color:#444;padding-left:2px">1</div><div class="a" style="left:0px;top:353px;width:19px;height:1px;background:#c8c8c8;"></div><div class="c" style="left:0px;top:342px;width:19px;height:11px;line-height:12px;font-size:8px;text-align:center;color:#444;padding-left:2px">2</div><div class="a" style="left:0px;top:365px;width:19px;height:1px;background:#c8c8c8;"></div><div class="c" style="left:0px;top:354px;width:19px;height:11px;line-height:12px;font-size:8px;text-align:center;color:#444;padding-left:2px">3</div><div class="a" style="left:0px;top:377px;width:19px;height:1px;background:#c8c8c8;"></div><div class="c" style="left:0px;top:366px;width:19px;height:11px;line-height:12px;font-size:8px;text-align:center;color:#444;padding-left:2px">4</div><div class="a" style="left:0px;top:389px;width:19px;height:1px;background:#c8c8c8;"></div><div class="c" style="left:0px;top:378px;width:19px;height:11px;line-height:12px;font-size:8px;text-align:center;color:#444;padding-left:2px">5</div><div class="a" style="left:0px;top:401px;width:19px;height:1px;background:#c8c8c8;"></div><div class="c" style="left:0px;top:390px;width:19px;height:11px;line-height:12px;font-size:8px;text-align:center;color:#444;padding-left:2px">6</div><div class="a" style="left:0px;top:413px;width:19px;height:1px;background:#c8c8c8;"></div><div class="c" style="left:0px;top:402px;width:19px;height:11px;line-height:12px;font-size:8px;text-align:center;color:#444;padding-left:2px">7</div><div class="a" style="left:0px;top:425px;width:19px;height:1px;background:#c8c8c8;"></div><div class="c" style="left:0px;top:414px;width:19px;height:11px;line-height:12px;font-size:8px;text-align:center;color:#444;padding-left:2px">8</div><div class="a" style="left:0px;top:437px;width:19px;height:1px;background:#c8c8c8;"></div><div class="c" style="left:0px;top:426px;width:19px;height:11px;line-height:12px;font-size:8px;text-align:center;color:#444;padding-left:2px">9</div><div class="a" style="left:0px;top:449px;width:19px;height:1px;background:#c8c8c8;"></div><div class="c" style="left:0px;top:438px;width:19px;height:11px;line-height:12px;font-size:8px;text-align:center;color:#444;padding-left:2px">10</div><div class="a" style="left:0px;top:461px;width:19px;height:1px;background:#c8c8c8;"></div><div class="c" style="left:0px;top:450px;width:19px;height:11px;line-height:12px;font-size:8px;text-align:center;color:#444;padding-left:2px">11</div><div class="a" style="left:0px;top:473px;width:19px;height:1px;background:#c8c8c8;"></div><div class="c" style="left:0px;top:462px;width:19px;height:11px;line-height:12px;font-size:8px;text-align:center;color:#444;padding-left:2px">12</div><div class="a" style="left:0px;top:485px;width:19px;height:1px;background:#c8c8c8;"></div><div class="c" style="left:0px;top:474px;width:19px;height:11px;line-height:12px;font-size:8px;text-align:center;color:#444;padding-left:2px">13</div><div class="a" style="left:0px;top:497px;width:19px;height:1px;background:#c8c8c8;"></div><div class="c" style="left:0px;top:486px;width:19px;height:11px;line-height:12px;font-size:8px;text-align:center;color:#444;padding-left:2px">14</div><div class="a" style="left:0px;top:498px;width:19px;height:11px;background:#d2d2d2;"></div><div class="a" style="left:18px;top:497px;width:2px;height:13px;background:#0e6e3a;"></div><div class="a" style="left:0px;top:509px;width:19px;height:1px;background:#c8c8c8;"></div><div class="c" style="left:0px;top:498px;width:19px;height:11px;line-height:12px;font-size:8px;text-align:center;color:#444;padding-left:2px">15</div><div class="a" style="left:0px;top:521px;width:19px;height:1px;background:#c8c8c8;"></div><div class="c" style="left:0px;top:510px;width:19px;height:11px;line-height:12px;font-size:8px;text-align:center;color:#444;padding-left:2px">16</div><div class="a" style="left:0px;top:533px;width:19px;height:1px;background:#c8c8c8;"></div><div class="c" style="left:0px;top:522px;width:19px;height:11px;line-height:12px;font-size:8px;text-align:center;color:#444;padding-left:2px">17</div><div class="a" style="left:0px;top:545px;width:19px;height:1px;background:#c8c8c8;"></div><div class="c" style="left:0px;top:534px;width:19px;height:11px;line-height:12px;font-size:8px;text-align:center;color:#444;padding-left:2px">18</div><div class="a" style="left:0px;top:557px;width:19px;height:1px;background:#c8c8c8;"></div><div class="c" style="left:0px;top:546px;width:19px;height:11px;line-height:12px;font-size:8px;text-align:center;color:#444;padding-left:2px">19</div><div class="a" style="left:0px;top:569px;width:19px;height:1px;background:#c8c8c8;"></div><div class="c" style="left:0px;top:558px;width:19px;height:11px;line-height:12px;font-size:8px;text-align:center;color:#444;padding-left:2px">20</div><div class="a" style="left:0px;top:581px;width:19px;height:1px;background:#c8c8c8;"></div><div class="c" style="left:0px;top:570px;width:19px;height:11px;line-height:12px;font-size:8px;text-align:center;color:#444;padding-left:2px">21</div><div class="a" style="left:0px;top:593px;width:19px;height:1px;background:#c8c8c8;"></div><div class="c" style="left:0px;top:582px;width:19px;height:11px;line-height:12px;font-size:8px;text-align:center;color:#444;padding-left:2px">22</div><div class="a" style="left:0px;top:605px;width:19px;height:1px;background:#c8c8c8;"></div><div class="c" style="left:0px;top:594px;width:19px;height:11px;line-height:12px;font-size:8px;text-align:center;color:#444;padding-left:2px">23</div><div class="a" style="left:0px;top:617px;width:19px;height:1px;background:#c8c8c8;"></div><div class="c" style="left:0px;top:606px;width:19px;height:11px;line-height:12px;font-size:8px;text-align:center;color:#444;padding-left:2px">24</div><div class="a" style="left:0px;top:629px;width:19px;height:1px;background:#c8c8c8;"></div><div class="c" style="left:0px;top:618px;width:19px;height:11px;line-height:12px;font-size:8px;text-align:center;color:#444;padding-left:2px">25</div><div class="a" style="left:0px;top:641px;width:19px;height:1px;background:#c8c8c8;"></div><div class="c" style="left:0px;top:630px;width:19px;height:11px;line-height:12px;font-size:8px;text-align:center;color:#444;padding-left:2px">26</div><div class="a" style="left:0px;top:653px;width:19px;height:1px;background:#c8c8c8;"></div><div class="c" style="left:0px;top:642px;width:19px;height:11px;line-height:12px;font-size:8px;text-align:center;color:#444;padding-left:2px">27</div><div class="a" style="left:0px;top:665px;width:19px;height:1px;background:#c8c8c8;"></div><div class="c" style="left:0px;top:654px;width:19px;height:11px;line-height:12px;font-size:8px;text-align:center;color:#444;padding-left:2px">28</div><div class="a" style="left:0px;top:677px;width:19px;height:1px;background:#c8c8c8;"></div><div class="c" style="left:0px;top:666px;width:19px;height:11px;line-height:12px;font-size:8px;text-align:center;color:#444;padding-left:2px">29</div><div class="a" style="left:0px;top:689px;width:19px;height:1px;background:#c8c8c8;"></div><div class="c" style="left:0px;top:678px;width:19px;height:11px;line-height:12px;font-size:8px;text-align:center;color:#444;padding-left:2px">30</div><div class="a" style="left:0px;top:701px;width:19px;height:1px;background:#c8c8c8;"></div><div class="c" style="left:0px;top:690px;width:19px;height:11px;line-height:12px;font-size:8px;text-align:center;color:#444;padding-left:2px">31</div><div class="a" style="left:0px;top:713px;width:19px;height:1px;background:#c8c8c8;"></div><div class="c" style="left:0px;top:702px;width:19px;height:11px;line-height:12px;font-size:8px;text-align:center;color:#444;padding-left:2px">32</div><div class="a" style="left:0px;top:725px;width:19px;height:1px;background:#c8c8c8;"></div><div class="c" style="left:0px;top:714px;width:19px;height:11px;line-height:12px;font-size:8px;text-align:center;color:#444;padding-left:2px">33</div><div class="a" style="left:0px;top:737px;width:19px;height:1px;background:#c8c8c8;"></div><div class="c" style="left:0px;top:726px;width:19px;height:11px;line-height:12px;font-size:8px;text-align:center;color:#444;padding-left:2px">34</div><div class="a" style="left:0px;top:749px;width:19px;height:1px;background:#c8c8c8;"></div><div class="c" style="left:0px;top:738px;width:19px;height:11px;line-height:12px;font-size:8px;text-align:center;color:#444;padding-left:2px">35</div><div class="a" style="left:0px;top:761px;width:19px;height:1px;background:#c8c8c8;"></div><div class="c" style="left:0px;top:750px;width:19px;height:11px;line-height:12px;font-size:8px;text-align:center;color:#444;padding-left:2px">36</div><div class="a" style="left:0px;top:773px;width:19px;height:1px;background:#c8c8c8;"></div><div class="c" style="left:0px;top:762px;width:19px;height:11px;line-height:12px;font-size:8px;text-align:center;color:#444;padding-left:2px">37</div><div class="a" style="left:0px;top:785px;width:19px;height:1px;background:#c8c8c8;"></div><div class="c" style="left:0px;top:774px;width:19px;height:11px;line-height:12px;font-size:8px;text-align:center;color:#444;padding-left:2px">38</div><div class="a" style="left:0px;top:797px;width:19px;height:1px;background:#c8c8c8;"></div><div class="c" style="left:0px;top:786px;width:19px;height:11px;line-height:12px;font-size:8px;text-align:center;color:#444;padding-left:2px">39</div><div class="a" style="left:0px;top:809px;width:19px;height:1px;background:#c8c8c8;"></div><div class="c" style="left:0px;top:798px;width:19px;height:11px;line-height:12px;font-size:8px;text-align:center;color:#444;padding-left:2px">40</div><div class="a" style="left:0px;top:821px;width:19px;height:1px;background:#c8c8c8;"></div><div class="c" style="left:0px;top:810px;width:19px;height:11px;line-height:12px;font-size:8px;text-align:center;color:#444;padding-left:2px">41</div><div class="a" style="left:0px;top:833px;width:19px;height:1px;background:#c8c8c8;"></div><div class="c" style="left:0px;top:822px;width:19px;height:11px;line-height:12px;font-size:8px;text-align:center;color:#444;padding-left:2px">42</div><div class="a" style="left:0px;top:845px;width:19px;height:1px;background:#c8c8c8;"></div><div class="c" style="left:0px;top:834px;width:19px;height:11px;line-height:12px;font-size:8px;text-align:center;color:#444;padding-left:2px">43</div><div class="a" style="left:0px;top:857px;width:19px;height:1px;background:#c8c8c8;"></div><div class="c" style="left:0px;top:846px;width:19px;height:11px;line-height:12px;font-size:8px;text-align:center;color:#444;padding-left:2px">44</div><div class="a" style="left:0px;top:869px;width:19px;height:1px;background:#c8c8c8;"></div><div class="c" style="left:0px;top:858px;width:19px;height:11px;line-height:12px;font-size:8px;text-align:center;color:#444;padding-left:2px">45</div><div class="a" style="left:0px;top:881px;width:19px;height:1px;background:#c8c8c8;"></div><div class="c" style="left:0px;top:870px;width:19px;height:11px;line-height:12px;font-size:8px;text-align:center;color:#444;padding-left:2px">46</div><div class="a" style="left:0px;top:893px;width:19px;height:1px;background:#c8c8c8;"></div><div class="c" style="left:0px;top:882px;width:19px;height:11px;line-height:12px;font-size:8px;text-align:center;color:#444;padding-left:2px">47</div><div class="a" style="left:0px;top:905px;width:19px;height:1px;background:#c8c8c8;"></div><div class="c" style="left:0px;top:894px;width:19px;height:11px;line-height:12px;font-size:8px;text-align:center;color:#444;padding-left:2px">48</div><div class="a" style="left:0px;top:917px;width:19px;height:1px;background:#c8c8c8;"></div><div class="c" style="left:0px;top:906px;width:19px;height:11px;line-height:12px;font-size:8px;text-align:center;color:#444;padding-left:2px">49</div><div class="a" style="left:0px;top:929px;width:19px;height:1px;background:#c8c8c8;"></div><div class="c" style="left:0px;top:918px;width:19px;height:11px;line-height:12px;font-size:8px;text-align:center;color:#444;padding-left:2px">50</div><div class="a" style="left:0px;top:941px;width:19px;height:1px;background:#c8c8c8;"></div><div class="c" style="left:0px;top:930px;width:19px;height:11px;line-height:12px;font-size:8px;text-align:center;color:#444;padding-left:2px">51</div><div class="a" style="left:0px;top:953px;width:19px;height:1px;background:#c8c8c8;"></div><div class="c" style="left:0px;top:942px;width:19px;height:11px;line-height:12px;font-size:8px;text-align:center;color:#444;padding-left:2px">52</div><div class="c" style="left:20px;top:330px;width:31px;height:11px;line-height:13px;font-size:9.3px;text-align:right;color:#000;padding-right:2px;overflow:hidden;">1</div><div class="c" style="left:52px;top:330px;width:51px;height:11px;line-height:13px;font-size:9.3px;text-align:right;color:#000;padding-right:2px;overflow:hidden;">2</div><div class="c" style="left:104px;top:330px;width:51px;height:11px;line-height:13px;font-size:9.3px;text-align:right;color:#000;padding-right:2px;overflow:hidden;">3</div><div class="c" style="left:156px;top:330px;width:51px;height:11px;line-height:13px;font-size:9.3px;text-align:right;color:#000;padding-right:2px;overflow:hidden;">4</div><div class="c" style="left:208px;top:330px;width:37px;height:11px;line-height:13px;font-size:9.3px;text-align:right;color:#000;padding-right:2px;overflow:hidden;">5</div><div class="c" style="left:246px;top:330px;width:96px;height:11px;line-height:13px;font-size:9.3px;text-align:right;color:#000;padding-right:2px;overflow:hidden;">6</div><div class="c" style="left:343px;top:330px;width:59px;height:11px;line-height:13px;font-size:9.3px;text-align:right;color:#000;padding-right:2px;overflow:hidden;">7</div><div class="c" style="left:403px;top:330px;width:24px;height:11px;line-height:13px;font-size:9.3px;text-align:right;color:#000;padding-right:2px;overflow:hidden;">8</div><div class="c" style="left:453px;top:330px;width:64px;height:11px;line-height:13px;font-size:9.3px;text-align:right;color:#000;padding-right:2px;overflow:hidden;">2</div><div class="c" style="left:453px;top:342px;width:64px;height:11px;line-height:13px;font-size:9.3px;text-align:right;color:#000;padding-right:2px;overflow:hidden;">5</div><div class="c" style="left:52px;top:342px;width:51px;height:11px;line-height:13px;font-size:9.3px;text-align:center;color:#fff;background:#002060;overflow:hidden;">Edad</div><div class="c" style="left:104px;top:342px;width:51px;height:11px;line-height:13px;font-size:9.3px;text-align:center;color:#fff;background:#002060;overflow:hidden;">PERM Fall</div><div class="c" style="left:156px;top:342px;width:51px;height:11px;line-height:13px;font-size:9.3px;text-align:center;color:#fff;background:#002060;overflow:hidden;">PEIAM IPA</div><div class="c" style="left:52px;top:354px;width:51px;height:11px;line-height:13px;font-size:8px;text-align:center;color:#000;overflow:hidden;">0</div><div class="c" style="left:104px;top:354px;width:51px;height:11px;line-height:13px;font-size:9.3px;text-align:center;color:#000;overflow:hidden;">0,003804</div><div class="c" style="left:156px;top:354px;width:51px;height:11px;line-height:13px;font-size:9.3px;text-align:center;color:#000;overflow:hidden;">0,000260</div><div class="c" style="left:52px;top:366px;width:51px;height:11px;line-height:13px;font-size:8px;text-align:center;color:#000;overflow:hidden;">1</div><div class="c" style="left:104px;top:366px;width:51px;height:11px;line-height:13px;font-size:9.3px;text-align:center;color:#000;overflow:hidden;">0,000282</div><div class="c" style="left:156px;top:366px;width:51px;height:11px;line-height:13px;font-size:9.3px;text-align:center;color:#000;overflow:hidden;">0,000260</div><div class="c" style="left:52px;top:378px;width:51px;height:11px;line-height:13px;font-size:8px;text-align:center;color:#000;overflow:hidden;">2</div><div class="c" style="left:104px;top:378px;width:51px;height:11px;line-height:13px;font-size:9.3px;text-align:center;color:#000;overflow:hidden;">0,000234</div><div class="c" style="left:156px;top:378px;width:51px;height:11px;line-height:13px;font-size:9.3px;text-align:center;color:#000;overflow:hidden;">0,000260</div><div class="c" style="left:52px;top:390px;width:51px;height:11px;line-height:13px;font-size:8px;text-align:center;color:#000;overflow:hidden;">3</div><div class="c" style="left:104px;top:390px;width:51px;height:11px;line-height:13px;font-size:9.3px;text-align:center;color:#000;overflow:hidden;">0,000191</div><div class="c" style="left:156px;top:390px;width:51px;height:11px;line-height:13px;font-size:9.3px;text-align:center;color:#000;overflow:hidden;">0,000260</div><div class="c" style="left:52px;top:402px;width:51px;height:11px;line-height:13px;font-size:8px;text-align:center;color:#000;overflow:hidden;">4</div><div class="c" style="left:104px;top:402px;width:51px;height:11px;line-height:13px;font-size:9.3px;text-align:center;color:#000;overflow:hidden;">0,000155</div><div class="c" style="left:156px;top:402px;width:51px;height:11px;line-height:13px;font-size:9.3px;text-align:center;color:#000;overflow:hidden;">0,000260</div><div class="c" style="left:52px;top:414px;width:51px;height:11px;line-height:13px;font-size:8px;text-align:center;color:#000;overflow:hidden;">5</div><div class="c" style="left:104px;top:414px;width:51px;height:11px;line-height:13px;font-size:9.3px;text-align:center;color:#000;overflow:hidden;">0,000129</div><div class="c" style="left:156px;top:414px;width:51px;height:11px;line-height:13px;font-size:9.3px;text-align:center;color:#000;overflow:hidden;">0,000260</div><div class="c" style="left:52px;top:426px;width:51px;height:11px;line-height:13px;font-size:8px;text-align:center;color:#000;overflow:hidden;">6</div><div class="c" style="left:104px;top:426px;width:51px;height:11px;line-height:13px;font-size:9.3px;text-align:center;color:#000;overflow:hidden;">0,000113</div><div class="c" style="left:156px;top:426px;width:51px;height:11px;line-height:13px;font-size:9.3px;text-align:center;color:#000;overflow:hidden;">0,000260</div><div class="c" style="left:52px;top:438px;width:51px;height:11px;line-height:13px;font-size:8px;text-align:center;color:#000;overflow:hidden;">7</div><div class="c" style="left:104px;top:438px;width:51px;height:11px;line-height:13px;font-size:9.3px;text-align:center;color:#000;overflow:hidden;">0,000104</div><div class="c" style="left:156px;top:438px;width:51px;height:11px;line-height:13px;font-size:9.3px;text-align:center;color:#000;overflow:hidden;">0,000260</div><div class="c" style="left:52px;top:450px;width:51px;height:11px;line-height:13px;font-size:8px;text-align:center;color:#000;overflow:hidden;">8</div><div class="c" style="left:104px;top:450px;width:51px;height:11px;line-height:13px;font-size:9.3px;text-align:center;color:#000;overflow:hidden;">0,000100</div><div class="c" style="left:156px;top:450px;width:51px;height:11px;line-height:13px;font-size:9.3px;text-align:center;color:#000;overflow:hidden;">0,000260</div><div class="c" style="left:52px;top:462px;width:51px;height:11px;line-height:13px;font-size:8px;text-align:center;color:#000;overflow:hidden;">9</div><div class="c" style="left:104px;top:462px;width:51px;height:11px;line-height:13px;font-size:9.3px;text-align:center;color:#000;overflow:hidden;">0,000101</div><div class="c" style="left:156px;top:462px;width:51px;height:11px;line-height:13px;font-size:9.3px;text-align:center;color:#000;overflow:hidden;">0,000260</div><div class="c" style="left:52px;top:474px;width:51px;height:11px;line-height:13px;font-size:8px;text-align:center;color:#000;overflow:hidden;">10</div><div class="c" style="left:104px;top:474px;width:51px;height:11px;line-height:13px;font-size:9.3px;text-align:center;color:#000;overflow:hidden;">0,000107</div><div class="c" style="left:156px;top:474px;width:51px;height:11px;line-height:13px;font-size:9.3px;text-align:center;color:#000;overflow:hidden;">0,000260</div><div class="c" style="left:52px;top:486px;width:51px;height:11px;line-height:13px;font-size:8px;text-align:center;color:#000;overflow:hidden;">11</div><div class="c" style="left:104px;top:486px;width:51px;height:11px;line-height:13px;font-size:9.3px;text-align:center;color:#000;overflow:hidden;">0,000120</div><div class="c" style="left:156px;top:486px;width:51px;height:11px;line-height:13px;font-size:9.3px;text-align:center;color:#000;overflow:hidden;">0,000260</div><div class="c" style="left:52px;top:498px;width:51px;height:11px;line-height:13px;font-size:8px;text-align:center;color:#000;overflow:hidden;">12</div><div class="c" style="left:104px;top:498px;width:51px;height:11px;line-height:13px;font-size:9.3px;text-align:center;color:#000;overflow:hidden;">0,000142</div><div class="c" style="left:156px;top:498px;width:51px;height:11px;line-height:13px;font-size:9.3px;text-align:center;color:#000;overflow:hidden;">0,000260</div><div class="c" style="left:52px;top:510px;width:51px;height:11px;line-height:13px;font-size:8px;text-align:center;color:#000;overflow:hidden;">13</div><div class="c" style="left:104px;top:510px;width:51px;height:11px;line-height:13px;font-size:9.3px;text-align:center;color:#000;overflow:hidden;">0,000175</div><div class="c" style="left:156px;top:510px;width:51px;height:11px;line-height:13px;font-size:9.3px;text-align:center;color:#000;overflow:hidden;">0,000260</div><div class="c" style="left:52px;top:522px;width:51px;height:11px;line-height:13px;font-size:8px;text-align:center;color:#000;overflow:hidden;">14</div><div class="c" style="left:104px;top:522px;width:51px;height:11px;line-height:13px;font-size:9.3px;text-align:center;color:#000;overflow:hidden;">0,000220</div><div class="c" style="left:156px;top:522px;width:51px;height:11px;line-height:13px;font-size:9.3px;text-align:center;color:#000;overflow:hidden;">0,000260</div><div class="c" style="left:52px;top:534px;width:51px;height:11px;line-height:13px;font-size:8px;text-align:center;color:#000;overflow:hidden;">15</div><div class="c" style="left:104px;top:534px;width:51px;height:11px;line-height:13px;font-size:9.3px;text-align:center;color:#000;overflow:hidden;">0,000276</div><div class="c" style="left:156px;top:534px;width:51px;height:11px;line-height:13px;font-size:9.3px;text-align:center;color:#000;overflow:hidden;">0,000260</div><div class="c" style="left:52px;top:546px;width:51px;height:11px;line-height:13px;font-size:8px;text-align:center;color:#000;overflow:hidden;">16</div><div class="c" style="left:104px;top:546px;width:51px;height:11px;line-height:13px;font-size:9.3px;text-align:center;color:#000;overflow:hidden;">0,000337</div><div class="c" style="left:156px;top:546px;width:51px;height:11px;line-height:13px;font-size:9.3px;text-align:center;color:#000;overflow:hidden;">0,000260</div><div class="c" style="left:52px;top:558px;width:51px;height:11px;line-height:13px;font-size:8px;text-align:center;color:#000;overflow:hidden;">17</div><div class="c" style="left:104px;top:558px;width:51px;height:11px;line-height:13px;font-size:9.3px;text-align:center;color:#000;overflow:hidden;">0,000396</div><div class="c" style="left:156px;top:558px;width:51px;height:11px;line-height:13px;font-size:9.3px;text-align:center;color:#000;overflow:hidden;">0,000260</div><div class="c" style="left:52px;top:570px;width:51px;height:11px;line-height:13px;font-size:8px;text-align:center;color:#000;overflow:hidden;">18</div><div class="c" style="left:104px;top:570px;width:51px;height:11px;line-height:13px;font-size:9.3px;text-align:center;color:#000;overflow:hidden;">0,000401</div><div class="c" style="left:156px;top:570px;width:51px;height:11px;line-height:13px;font-size:9.3px;text-align:center;color:#000;overflow:hidden;">0,000260</div><div class="c" style="left:52px;top:582px;width:51px;height:11px;line-height:13px;font-size:8px;text-align:center;color:#000;overflow:hidden;">19</div><div class="c" style="left:104px;top:582px;width:51px;height:11px;line-height:13px;font-size:9.3px;text-align:center;color:#000;overflow:hidden;">0,000410</div><div class="c" style="left:156px;top:582px;width:51px;height:11px;line-height:13px;font-size:9.3px;text-align:center;color:#000;overflow:hidden;">0,000260</div><div class="c" style="left:52px;top:594px;width:51px;height:11px;line-height:13px;font-size:8px;text-align:center;color:#000;overflow:hidden;">20</div><div class="c" style="left:104px;top:594px;width:51px;height:11px;line-height:13px;font-size:9.3px;text-align:center;color:#000;overflow:hidden;">0,000418</div><div class="c" style="left:156px;top:594px;width:51px;height:11px;line-height:13px;font-size:9.3px;text-align:center;color:#000;overflow:hidden;">0,000260</div><div class="c" style="left:52px;top:606px;width:51px;height:11px;line-height:13px;font-size:8px;text-align:center;color:#000;overflow:hidden;">21</div><div class="c" style="left:104px;top:606px;width:51px;height:11px;line-height:13px;font-size:9.3px;text-align:center;color:#000;overflow:hidden;">0,000426</div><div class="c" style="left:156px;top:606px;width:51px;height:11px;line-height:13px;font-size:9.3px;text-align:center;color:#000;overflow:hidden;">0,000260</div><div class="c" style="left:52px;top:618px;width:51px;height:11px;line-height:13px;font-size:8px;text-align:center;color:#000;overflow:hidden;">22</div><div class="c" style="left:104px;top:618px;width:51px;height:11px;line-height:13px;font-size:9.3px;text-align:center;color:#000;overflow:hidden;">0,000435</div><div class="c" style="left:156px;top:618px;width:51px;height:11px;line-height:13px;font-size:9.3px;text-align:center;color:#000;overflow:hidden;">0,000260</div><div class="c" style="left:52px;top:630px;width:51px;height:11px;line-height:13px;font-size:8px;text-align:center;color:#000;overflow:hidden;">23</div><div class="c" style="left:104px;top:630px;width:51px;height:11px;line-height:13px;font-size:9.3px;text-align:center;color:#000;overflow:hidden;">0,000443</div><div class="c" style="left:156px;top:630px;width:51px;height:11px;line-height:13px;font-size:9.3px;text-align:center;color:#000;overflow:hidden;">0,000260</div><div class="c" style="left:52px;top:642px;width:51px;height:11px;line-height:13px;font-size:8px;text-align:center;color:#000;overflow:hidden;">24</div><div class="c" style="left:104px;top:642px;width:51px;height:11px;line-height:13px;font-size:9.3px;text-align:center;color:#000;overflow:hidden;">0,000450</div><div class="c" style="left:156px;top:642px;width:51px;height:11px;line-height:13px;font-size:9.3px;text-align:center;color:#000;overflow:hidden;">0,000260</div><div class="c" style="left:52px;top:654px;width:51px;height:11px;line-height:13px;font-size:8px;text-align:center;color:#000;overflow:hidden;">25</div><div class="c" style="left:104px;top:654px;width:51px;height:11px;line-height:13px;font-size:9.3px;text-align:center;color:#000;overflow:hidden;">0,000457</div><div class="c" style="left:156px;top:654px;width:51px;height:11px;line-height:13px;font-size:9.3px;text-align:center;color:#000;overflow:hidden;">0,000260</div><div class="c" style="left:52px;top:666px;width:51px;height:11px;line-height:13px;font-size:8px;text-align:center;color:#000;overflow:hidden;">26</div><div class="c" style="left:104px;top:666px;width:51px;height:11px;line-height:13px;font-size:9.3px;text-align:center;color:#000;overflow:hidden;">0,000452</div><div class="c" style="left:156px;top:666px;width:51px;height:11px;line-height:13px;font-size:9.3px;text-align:center;color:#000;overflow:hidden;">0,000260</div><div class="c" style="left:52px;top:678px;width:51px;height:11px;line-height:13px;font-size:8px;text-align:center;color:#000;overflow:hidden;">27</div><div class="c" style="left:104px;top:678px;width:51px;height:11px;line-height:13px;font-size:9.3px;text-align:center;color:#000;overflow:hidden;">0,000446</div><div class="c" style="left:156px;top:678px;width:51px;height:11px;line-height:13px;font-size:9.3px;text-align:center;color:#000;overflow:hidden;">0,000260</div><div class="c" style="left:52px;top:690px;width:51px;height:11px;line-height:13px;font-size:8px;text-align:center;color:#000;overflow:hidden;">28</div><div class="c" style="left:104px;top:690px;width:51px;height:11px;line-height:13px;font-size:9.3px;text-align:center;color:#000;overflow:hidden;">0,000437</div><div class="c" style="left:156px;top:690px;width:51px;height:11px;line-height:13px;font-size:9.3px;text-align:center;color:#000;overflow:hidden;">0,000260</div><div class="c" style="left:52px;top:702px;width:51px;height:11px;line-height:13px;font-size:8px;text-align:center;color:#000;overflow:hidden;">29</div><div class="c" style="left:104px;top:702px;width:51px;height:11px;line-height:13px;font-size:9.3px;text-align:center;color:#000;overflow:hidden;">0,000426</div><div class="c" style="left:156px;top:702px;width:51px;height:11px;line-height:13px;font-size:9.3px;text-align:center;color:#000;overflow:hidden;">0,000260</div><div class="c" style="left:52px;top:714px;width:51px;height:11px;line-height:13px;font-size:8px;text-align:center;color:#000;overflow:hidden;">30</div><div class="c" style="left:104px;top:714px;width:51px;height:11px;line-height:13px;font-size:9.3px;text-align:center;color:#000;overflow:hidden;">0,000417</div><div class="c" style="left:156px;top:714px;width:51px;height:11px;line-height:13px;font-size:9.3px;text-align:center;color:#000;overflow:hidden;">0,000260</div><div class="c" style="left:52px;top:726px;width:51px;height:11px;line-height:13px;font-size:8px;text-align:center;color:#000;overflow:hidden;">31</div><div class="c" style="left:104px;top:726px;width:51px;height:11px;line-height:13px;font-size:9.3px;text-align:center;color:#000;overflow:hidden;">0,000417</div><div class="c" style="left:156px;top:726px;width:51px;height:11px;line-height:13px;font-size:9.3px;text-align:center;color:#000;overflow:hidden;">0,000260</div><div class="c" style="left:52px;top:738px;width:51px;height:11px;line-height:13px;font-size:8px;text-align:center;color:#000;overflow:hidden;">32</div><div class="c" style="left:104px;top:738px;width:51px;height:11px;line-height:13px;font-size:9.3px;text-align:center;color:#000;overflow:hidden;">0,000424</div><div class="c" style="left:156px;top:738px;width:51px;height:11px;line-height:13px;font-size:9.3px;text-align:center;color:#000;overflow:hidden;">0,000260</div><div class="c" style="left:52px;top:750px;width:51px;height:11px;line-height:13px;font-size:8px;text-align:center;color:#000;overflow:hidden;">33</div><div class="c" style="left:104px;top:750px;width:51px;height:11px;line-height:13px;font-size:9.3px;text-align:center;color:#000;overflow:hidden;">0,000441</div><div class="c" style="left:156px;top:750px;width:51px;height:11px;line-height:13px;font-size:9.3px;text-align:center;color:#000;overflow:hidden;">0,000260</div><div class="c" style="left:52px;top:762px;width:51px;height:11px;line-height:13px;font-size:8px;text-align:center;color:#000;overflow:hidden;">34</div><div class="c" style="left:104px;top:762px;width:51px;height:11px;line-height:13px;font-size:9.3px;text-align:center;color:#000;overflow:hidden;">0,000474</div><div class="c" style="left:156px;top:762px;width:51px;height:11px;line-height:13px;font-size:9.3px;text-align:center;color:#000;overflow:hidden;">0,000260</div><div class="c" style="left:52px;top:774px;width:51px;height:11px;line-height:13px;font-size:8px;text-align:center;color:#000;overflow:hidden;">35</div><div class="c" style="left:104px;top:774px;width:51px;height:11px;line-height:13px;font-size:9.3px;text-align:center;color:#000;overflow:hidden;">0,000521</div><div class="c" style="left:156px;top:774px;width:51px;height:11px;line-height:13px;font-size:9.3px;text-align:center;color:#000;overflow:hidden;">0,000260</div><div class="c" style="left:52px;top:786px;width:51px;height:11px;line-height:13px;font-size:8px;text-align:center;color:#000;overflow:hidden;">36</div><div class="c" style="left:104px;top:786px;width:51px;height:11px;line-height:13px;font-size:9.3px;text-align:center;color:#000;overflow:hidden;">0,000579</div><div class="c" style="left:156px;top:786px;width:51px;height:11px;line-height:13px;font-size:9.3px;text-align:center;color:#000;overflow:hidden;">0,000260</div><div class="c" style="left:52px;top:798px;width:51px;height:11px;line-height:13px;font-size:8px;text-align:center;color:#000;overflow:hidden;">37</div><div class="c" style="left:104px;top:798px;width:51px;height:11px;line-height:13px;font-size:9.3px;text-align:center;color:#000;overflow:hidden;">0,000644</div><div class="c" style="left:156px;top:798px;width:51px;height:11px;line-height:13px;font-size:9.3px;text-align:center;color:#000;overflow:hidden;">0,000260</div><div class="c" style="left:52px;top:810px;width:51px;height:11px;line-height:13px;font-size:8px;text-align:center;color:#000;overflow:hidden;">38</div><div class="c" style="left:104px;top:810px;width:51px;height:11px;line-height:13px;font-size:9.3px;text-align:center;color:#000;overflow:hidden;">0,000712</div><div class="c" style="left:156px;top:810px;width:51px;height:11px;line-height:13px;font-size:9.3px;text-align:center;color:#000;overflow:hidden;">0,000260</div><div class="c" style="left:52px;top:822px;width:51px;height:11px;line-height:13px;font-size:8px;text-align:center;color:#000;overflow:hidden;">39</div><div class="c" style="left:104px;top:822px;width:51px;height:11px;line-height:13px;font-size:9.3px;text-align:center;color:#000;overflow:hidden;">0,000787</div><div class="c" style="left:156px;top:822px;width:51px;height:11px;line-height:13px;font-size:9.3px;text-align:center;color:#000;overflow:hidden;">0,000260</div><div class="c" style="left:52px;top:834px;width:51px;height:11px;line-height:13px;font-size:8px;text-align:center;color:#000;overflow:hidden;">40</div><div class="c" style="left:104px;top:834px;width:51px;height:11px;line-height:13px;font-size:9.3px;text-align:center;color:#000;overflow:hidden;">0,000872</div><div class="c" style="left:156px;top:834px;width:51px;height:11px;line-height:13px;font-size:9.3px;text-align:center;color:#000;overflow:hidden;">0,000260</div><div class="c" style="left:52px;top:846px;width:51px;height:11px;line-height:13px;font-size:8px;text-align:center;color:#000;overflow:hidden;">41</div><div class="c" style="left:104px;top:846px;width:51px;height:11px;line-height:13px;font-size:9.3px;text-align:center;color:#000;overflow:hidden;">0,000970</div><div class="c" style="left:156px;top:846px;width:51px;height:11px;line-height:13px;font-size:9.3px;text-align:center;color:#000;overflow:hidden;">0,000260</div><div class="c" style="left:52px;top:858px;width:51px;height:11px;line-height:13px;font-size:8px;text-align:center;color:#000;overflow:hidden;">42</div><div class="c" style="left:104px;top:858px;width:51px;height:11px;line-height:13px;font-size:9.3px;text-align:center;color:#000;overflow:hidden;">0,001085</div><div class="c" style="left:156px;top:858px;width:51px;height:11px;line-height:13px;font-size:9.3px;text-align:center;color:#000;overflow:hidden;">0,000260</div><div class="c" style="left:52px;top:870px;width:51px;height:11px;line-height:13px;font-size:8px;text-align:center;color:#000;overflow:hidden;">43</div><div class="c" style="left:104px;top:870px;width:51px;height:11px;line-height:13px;font-size:9.3px;text-align:center;color:#000;overflow:hidden;">0,001212</div><div class="c" style="left:156px;top:870px;width:51px;height:11px;line-height:13px;font-size:9.3px;text-align:center;color:#000;overflow:hidden;">0,000260</div><div class="c" style="left:52px;top:882px;width:51px;height:11px;line-height:13px;font-size:8px;text-align:center;color:#000;overflow:hidden;">44</div><div class="c" style="left:104px;top:882px;width:51px;height:11px;line-height:13px;font-size:9.3px;text-align:center;color:#000;overflow:hidden;">0,001351</div><div class="c" style="left:156px;top:882px;width:51px;height:11px;line-height:13px;font-size:9.3px;text-align:center;color:#000;overflow:hidden;">0,000260</div><div class="c" style="left:52px;top:894px;width:51px;height:11px;line-height:13px;font-size:8px;text-align:center;color:#000;overflow:hidden;">45</div><div class="c" style="left:104px;top:894px;width:51px;height:11px;line-height:13px;font-size:9.3px;text-align:center;color:#000;overflow:hidden;">0,001498</div><div class="c" style="left:156px;top:894px;width:51px;height:11px;line-height:13px;font-size:9.3px;text-align:center;color:#000;overflow:hidden;">0,000330</div><div class="c" style="left:52px;top:906px;width:51px;height:11px;line-height:13px;font-size:8px;text-align:center;color:#000;overflow:hidden;">46</div><div class="c" style="left:104px;top:906px;width:51px;height:11px;line-height:13px;font-size:9.3px;text-align:center;color:#000;overflow:hidden;">0,001659</div><div class="c" style="left:156px;top:906px;width:51px;height:11px;line-height:13px;font-size:9.3px;text-align:center;color:#000;overflow:hidden;">0,000353</div><div class="c" style="left:52px;top:918px;width:51px;height:11px;line-height:13px;font-size:8px;text-align:center;color:#000;overflow:hidden;">47</div><div class="c" style="left:104px;top:918px;width:51px;height:11px;line-height:13px;font-size:9.3px;text-align:center;color:#000;overflow:hidden;">0,001840</div><div class="c" style="left:156px;top:918px;width:51px;height:11px;line-height:13px;font-size:9.3px;text-align:center;color:#000;overflow:hidden;">0,000378</div><div class="c" style="left:52px;top:930px;width:51px;height:11px;line-height:13px;font-size:8px;text-align:center;color:#000;overflow:hidden;">48</div><div class="c" style="left:104px;top:930px;width:51px;height:11px;line-height:13px;font-size:9.3px;text-align:center;color:#000;overflow:hidden;">0,002038</div><div class="c" style="left:156px;top:930px;width:51px;height:11px;line-height:13px;font-size:9.3px;text-align:center;color:#000;overflow:hidden;">0,000404</div><div class="c" style="left:52px;top:942px;width:51px;height:11px;line-height:13px;font-size:8px;text-align:center;color:#000;overflow:hidden;">49</div><div class="c" style="left:104px;top:942px;width:51px;height:11px;line-height:13px;font-size:9.3px;text-align:center;color:#000;overflow:hidden;">0,002261</div><div class="c" style="left:156px;top:942px;width:51px;height:11px;line-height:13px;font-size:9.3px;text-align:center;color:#000;overflow:hidden;">0,000433</div><div class="a" style="left:51px;top:341px;width:157px;height:1px;background:#000"></div><div class="a" style="left:51px;top:353px;width:157px;height:1px;background:#000"></div><div class="a" style="left:51px;top:341px;width:1px;height:613px;background:#000"></div><div class="a" style="left:103px;top:341px;width:1px;height:613px;background:#000"></div><div class="a" style="left:155px;top:341px;width:1px;height:613px;background:#000"></div><div class="a" style="left:207px;top:341px;width:1px;height:613px;background:#000"></div><div class="c" style="left:246px;top:342px;width:96px;height:11px;line-height:13px;font-size:9.3px;text-align:left;color:#fff;background:#002060;padding-left:1px;overflow:hidden;">Comunidad Autónoma</div><div class="c" style="left:343px;top:342px;width:59px;height:11px;line-height:13px;font-size:9.3px;text-align:center;color:#fff;background:#002060;overflow:hidden;">Descuento</div><div class="c" style="left:246px;top:354px;width:96px;height:11px;line-height:13px;font-size:9.3px;text-align:left;color:#000;padding-left:1px;overflow:hidden;">Andalucia</div><div class="c" style="left:343px;top:354px;width:59px;height:11px;line-height:13px;font-size:9.3px;text-align:center;color:#000;overflow:hidden;">8%</div><div class="c" style="left:246px;top:366px;width:96px;height:11px;line-height:13px;font-size:9.3px;text-align:left;color:#000;padding-left:1px;overflow:hidden;">Aragon</div><div class="c" style="left:343px;top:366px;width:59px;height:11px;line-height:13px;font-size:9.3px;text-align:center;color:#000;overflow:hidden;">8%</div><div class="c" style="left:246px;top:378px;width:96px;height:11px;line-height:13px;font-size:9.3px;text-align:left;color:#000;padding-left:1px;overflow:hidden;">Asturias</div><div class="c" style="left:343px;top:378px;width:59px;height:11px;line-height:13px;font-size:9.3px;text-align:center;color:#000;overflow:hidden;">8%</div><div class="c" style="left:246px;top:390px;width:96px;height:11px;line-height:13px;font-size:9.3px;text-align:left;color:#000;padding-left:1px;overflow:hidden;">Baleares</div><div class="c" style="left:343px;top:390px;width:59px;height:11px;line-height:13px;font-size:9.3px;text-align:center;color:#000;overflow:hidden;">8%</div><div class="c" style="left:246px;top:402px;width:96px;height:11px;line-height:13px;font-size:9.3px;text-align:left;color:#000;padding-left:1px;overflow:hidden;">Canarias</div><div class="c" style="left:343px;top:402px;width:59px;height:11px;line-height:13px;font-size:9.3px;text-align:center;color:#000;overflow:hidden;">6,5%</div><div class="c" style="left:246px;top:414px;width:96px;height:11px;line-height:13px;font-size:9.3px;text-align:left;color:#000;padding-left:1px;overflow:hidden;">Cantabria</div><div class="c" style="left:343px;top:414px;width:59px;height:11px;line-height:13px;font-size:9.3px;text-align:center;color:#000;overflow:hidden;">10%</div><div class="c" style="left:246px;top:426px;width:96px;height:11px;line-height:13px;font-size:9.3px;text-align:left;color:#000;padding-left:1px;overflow:hidden;">Castilla - La Mancha</div><div class="c" style="left:343px;top:426px;width:59px;height:11px;line-height:13px;font-size:9.3px;text-align:center;color:#000;overflow:hidden;">9%</div><div class="c" style="left:246px;top:438px;width:96px;height:11px;line-height:13px;font-size:9.3px;text-align:left;color:#000;padding-left:1px;overflow:hidden;">Castilla León</div><div class="c" style="left:343px;top:438px;width:59px;height:11px;line-height:13px;font-size:9.3px;text-align:center;color:#000;overflow:hidden;">8%</div><div class="c" style="left:246px;top:450px;width:96px;height:11px;line-height:13px;font-size:9.3px;text-align:left;color:#000;padding-left:1px;overflow:hidden;">Cataluña</div><div class="c" style="left:343px;top:450px;width:59px;height:11px;line-height:13px;font-size:9.3px;text-align:center;color:#000;overflow:hidden;">10%</div><div class="c" style="left:246px;top:462px;width:96px;height:11px;line-height:13px;font-size:9.3px;text-align:left;color:#000;padding-left:1px;overflow:hidden;">Ceuta</div><div class="c" style="left:343px;top:462px;width:59px;height:11px;line-height:13px;font-size:9.3px;text-align:center;color:#000;overflow:hidden;">6%</div><div class="c" style="left:246px;top:474px;width:96px;height:11px;line-height:13px;font-size:9.3px;text-align:left;color:#000;padding-left:1px;overflow:hidden;">Comunidad de Madrid</div><div class="c" style="left:343px;top:474px;width:59px;height:11px;line-height:13px;font-size:9.3px;text-align:center;color:#000;overflow:hidden;">6%</div><div class="c" style="left:246px;top:486px;width:96px;height:11px;line-height:13px;font-size:9.3px;text-align:left;color:#000;padding-left:1px;overflow:hidden;">Comunidad Valenciana</div><div class="c" style="left:343px;top:486px;width:59px;height:11px;line-height:13px;font-size:9.3px;text-align:center;color:#000;overflow:hidden;">10%</div><div class="c" style="left:246px;top:498px;width:96px;height:11px;line-height:13px;font-size:9.3px;text-align:left;color:#000;padding-left:1px;overflow:hidden;">Extremadura</div><div class="c" style="left:343px;top:498px;width:59px;height:11px;line-height:13px;font-size:9.3px;text-align:center;color:#000;overflow:hidden;">8%</div><div class="c" style="left:246px;top:510px;width:96px;height:11px;line-height:13px;font-size:9.3px;text-align:left;color:#000;padding-left:1px;overflow:hidden;">Galicia</div><div class="c" style="left:343px;top:510px;width:59px;height:11px;line-height:13px;font-size:9.3px;text-align:center;color:#000;overflow:hidden;">10%</div><div class="c" style="left:246px;top:522px;width:96px;height:11px;line-height:13px;font-size:9.3px;text-align:left;color:#000;padding-left:1px;overflow:hidden;">La Rioja</div><div class="c" style="left:343px;top:522px;width:59px;height:11px;line-height:13px;font-size:9.3px;text-align:center;color:#000;overflow:hidden;">7%</div><div class="c" style="left:246px;top:534px;width:96px;height:11px;line-height:13px;font-size:9.3px;text-align:left;color:#000;padding-left:1px;overflow:hidden;">Melilla</div><div class="c" style="left:343px;top:534px;width:59px;height:11px;line-height:13px;font-size:9.3px;text-align:center;color:#000;overflow:hidden;">6%</div><div class="c" style="left:246px;top:546px;width:96px;height:11px;line-height:13px;font-size:9.3px;text-align:left;color:#000;padding-left:1px;overflow:hidden;">Murcia</div><div class="c" style="left:343px;top:546px;width:59px;height:11px;line-height:13px;font-size:9.3px;text-align:center;color:#000;overflow:hidden;">8%</div><div class="c" style="left:246px;top:558px;width:96px;height:11px;line-height:13px;font-size:9.3px;text-align:left;color:#000;padding-left:1px;overflow:hidden;">Navarra</div><div class="c" style="left:343px;top:558px;width:59px;height:11px;line-height:13px;font-size:9.3px;text-align:center;color:#000;overflow:hidden;">6%</div><div class="c" style="left:246px;top:570px;width:96px;height:11px;line-height:13px;font-size:9.3px;text-align:left;color:#000;padding-left:1px;overflow:hidden;">País Vasco</div><div class="c" style="left:343px;top:570px;width:59px;height:11px;line-height:13px;font-size:9.3px;text-align:center;color:#000;overflow:hidden;">4%</div><div class="a" style="left:245px;top:341px;width:158px;height:241px;border:1px solid #000;box-sizing:border-box"></div><div class="a" style="left:245px;top:353px;width:158px;height:1px;background:#000"></div><div class="a" style="left:342px;top:341px;width:1px;height:241px;background:#000"></div><div class="a" style="left:560px;top:354px;width:533px;height:11px;background:#fff;"></div><div class="c" style="left:560px;top:354px;width:533px;height:11px;line-height:13px;font-size:9.3px;text-align:center;color:#000;font-weight:700;overflow:hidden;">Altura</div><div class="a" style="left:559px;top:353px;width:535px;height:13px;border:1px solid #000;box-sizing:border-box"></div><div class="c" style="left:560px;top:366px;width:45px;height:11px;line-height:13px;font-size:9.3px;text-align:center;color:#000;overflow:hidden;">[150 - 155)</div><div class="c" style="left:560px;top:378px;width:45px;height:11px;line-height:13px;font-size:9.3px;text-align:center;color:#000;overflow:hidden;">150</div><div class="a" style="left:559px;top:365px;width:47px;height:13px;border:1px solid #000;box-sizing:border-box"></div><div class="a" style="left:559px;top:377px;width:47px;height:13px;border:1px solid #000;box-sizing:border-box"></div><div class="c" style="left:606px;top:366px;width:45px;height:11px;line-height:13px;font-size:9.3px;text-align:center;color:#000;overflow:hidden;">[155 - 160)</div><div class="c" style="left:606px;top:378px;width:45px;height:11px;line-height:13px;font-size:9.3px;text-align:center;color:#000;overflow:hidden;">155</div><div class="a" style="left:605px;top:365px;width:47px;height:13px;border:1px solid #000;box-sizing:border-box"></div><div class="a" style="left:605px;top:377px;width:47px;height:13px;border:1px solid #000;box-sizing:border-box"></div><div class="c" style="left:652px;top:366px;width:45px;height:11px;line-height:13px;font-size:9.3px;text-align:center;color:#000;overflow:hidden;">[160 - 165)</div><div class="c" style="left:652px;top:378px;width:45px;height:11px;line-height:13px;font-size:9.3px;text-align:center;color:#000;overflow:hidden;">160</div><div class="a" style="left:651px;top:365px;width:47px;height:13px;border:1px solid #000;box-sizing:border-box"></div><div class="a" style="left:651px;top:377px;width:47px;height:13px;border:1px solid #000;box-sizing:border-box"></div><div class="c" style="left:698px;top:366px;width:45px;height:11px;line-height:13px;font-size:9.3px;text-align:center;color:#000;overflow:hidden;">[165 - 170)</div><div class="c" style="left:698px;top:378px;width:45px;height:11px;line-height:13px;font-size:9.3px;text-align:center;color:#000;overflow:hidden;">165</div><div class="a" style="left:697px;top:365px;width:47px;height:13px;border:1px solid #000;box-sizing:border-box"></div><div class="a" style="left:697px;top:377px;width:47px;height:13px;border:1px solid #000;box-sizing:border-box"></div><div class="c" style="left:744px;top:366px;width:45px;height:11px;line-height:13px;font-size:9.3px;text-align:center;color:#000;overflow:hidden;">[170 - 175)</div><div class="c" style="left:744px;top:378px;width:45px;height:11px;line-height:13px;font-size:9.3px;text-align:center;color:#000;overflow:hidden;">170</div><div class="a" style="left:743px;top:365px;width:47px;height:13px;border:1px solid #000;box-sizing:border-box"></div><div class="a" style="left:743px;top:377px;width:47px;height:13px;border:1px solid #000;box-sizing:border-box"></div><div class="c" style="left:790px;top:366px;width:45px;height:11px;line-height:13px;font-size:9.3px;text-align:center;color:#000;overflow:hidden;">[175 - 180)</div><div class="c" style="left:790px;top:378px;width:45px;height:11px;line-height:13px;font-size:9.3px;text-align:center;color:#000;overflow:hidden;">175</div><div class="a" style="left:789px;top:365px;width:47px;height:13px;border:1px solid #000;box-sizing:border-box"></div><div class="a" style="left:789px;top:377px;width:47px;height:13px;border:1px solid #000;box-sizing:border-box"></div><div class="c" style="left:836px;top:366px;width:45px;height:11px;line-height:13px;font-size:9.3px;text-align:center;color:#000;overflow:hidden;">[180 - 185)</div><div class="c" style="left:836px;top:378px;width:45px;height:11px;line-height:13px;font-size:9.3px;text-align:center;color:#000;overflow:hidden;">180</div><div class="a" style="left:835px;top:365px;width:47px;height:13px;border:1px solid #000;box-sizing:border-box"></div><div class="a" style="left:835px;top:377px;width:47px;height:13px;border:1px solid #000;box-sizing:border-box"></div><div class="c" style="left:882px;top:366px;width:45px;height:11px;line-height:13px;font-size:9.3px;text-align:center;color:#000;overflow:hidden;">[185 - 190)</div><div class="c" style="left:882px;top:378px;width:45px;height:11px;line-height:13px;font-size:9.3px;text-align:center;color:#000;overflow:hidden;">185</div><div class="a" style="left:881px;top:365px;width:47px;height:13px;border:1px solid #000;box-sizing:border-box"></div><div class="a" style="left:881px;top:377px;width:47px;height:13px;border:1px solid #000;box-sizing:border-box"></div><div class="c" style="left:928px;top:366px;width:45px;height:11px;line-height:13px;font-size:9.3px;text-align:center;color:#000;overflow:hidden;">[190 - 195)</div><div class="c" style="left:928px;top:378px;width:45px;height:11px;line-height:13px;font-size:9.3px;text-align:center;color:#000;overflow:hidden;">190</div><div class="a" style="left:927px;top:365px;width:47px;height:13px;border:1px solid #000;box-sizing:border-box"></div><div class="a" style="left:927px;top:377px;width:47px;height:13px;border:1px solid #000;box-sizing:border-box"></div><div class="c" style="left:974px;top:366px;width:45px;height:11px;line-height:13px;font-size:9.3px;text-align:center;color:#000;overflow:hidden;">[195 - 200)</div><div class="c" style="left:974px;top:378px;width:45px;height:11px;line-height:13px;font-size:9.3px;text-align:center;color:#000;overflow:hidden;">195</div><div class="a" style="left:973px;top:365px;width:47px;height:13px;border:1px solid #000;box-sizing:border-box"></div><div class="a" style="left:973px;top:377px;width:47px;height:13px;border:1px solid #000;box-sizing:border-box"></div><div class="c" style="left:1020px;top:366px;width:45px;height:11px;line-height:13px;font-size:9.3px;text-align:center;color:#000;overflow:hidden;">[200 - 205)</div><div class="c" style="left:1020px;top:378px;width:45px;height:11px;line-height:13px;font-size:9.3px;text-align:center;color:#000;overflow:hidden;">200</div><div class="a" style="left:1019px;top:365px;width:47px;height:13px;border:1px solid #000;box-sizing:border-box"></div><div class="a" style="left:1019px;top:377px;width:47px;height:13px;border:1px solid #000;box-sizing:border-box"></div><div class="c" style="left:1066px;top:366px;width:27px;height:11px;line-height:13px;font-size:9.3px;text-align:center;color:#000;overflow:hidden;">+ 205</div><div class="c" style="left:1066px;top:378px;width:27px;height:11px;line-height:13px;font-size:9.3px;text-align:center;color:#000;overflow:hidden;">205</div><div class="a" style="left:1065px;top:365px;width:29px;height:13px;border:1px solid #000;box-sizing:border-box"></div><div class="a" style="left:1065px;top:377px;width:29px;height:13px;border:1px solid #000;box-sizing:border-box"></div><div class="a" style="left:427px;top:365px;width:26px;height:13px;border:1px solid #000;box-sizing:border-box"></div><div class="a" style="left:427px;top:377px;width:26px;height:13px;border:1px solid #000;box-sizing:border-box"></div><div class="a" style="left:452px;top:365px;width:66px;height:13px;border:1px solid #000;box-sizing:border-box"></div><div class="a" style="left:452px;top:377px;width:66px;height:13px;border:1px solid #000;box-sizing:border-box"></div><div class="a" style="left:517px;top:365px;width:43px;height:13px;border:1px solid #000;box-sizing:border-box"></div><div class="a" style="left:517px;top:377px;width:43px;height:13px;border:1px solid #000;box-sizing:border-box"></div><div class="c" style="left:453px;top:390px;width:64px;height:11px;line-height:13px;font-size:9.3px;text-align:center;color:#000;overflow:hidden;">[40 - 45)</div><div class="a" style="left:452px;top:389px;width:66px;height:13px;border:1px solid #000;box-sizing:border-box"></div><div class="c" style="left:518px;top:390px;width:41px;height:11px;line-height:13px;font-size:9.3px;text-align:center;color:#000;overflow:hidden;">40</div><div class="a" style="left:517px;top:389px;width:43px;height:13px;border:1px solid #000;box-sizing:border-box"></div><div class="c" style="left:560px;top:390px;width:45px;height:11px;line-height:13px;font-size:9.3px;text-align:center;color:#000;background:#bdd7ee;overflow:hidden;">5,00</div><div class="a" style="left:559px;top:389px;width:47px;height:13px;border:1px solid #000;box-sizing:border-box"></div><div class="c" style="left:606px;top:390px;width:45px;height:11px;line-height:13px;font-size:9.3px;text-align:center;color:#000;background:#bdd7ee;overflow:hidden;">5,00</div><div class="a" style="left:605px;top:389px;width:47px;height:13px;border:1px solid #000;box-sizing:border-box"></div><div class="c" style="left:652px;top:390px;width:45px;height:11px;line-height:13px;font-size:9.3px;text-align:center;color:#000;background:#bdd7ee;overflow:hidden;">5,00</div><div class="a" style="left:651px;top:389px;width:47px;height:13px;border:1px solid #000;box-sizing:border-box"></div><div class="c" style="left:698px;top:390px;width:45px;height:11px;line-height:13px;font-size:9.3px;text-align:center;color:#000;background:#bdd7ee;overflow:hidden;">5,00</div><div class="a" style="left:697px;top:389px;width:47px;height:13px;border:1px solid #000;box-sizing:border-box"></div><div class="c" style="left:744px;top:390px;width:45px;height:11px;line-height:13px;font-size:9.3px;text-align:center;color:#000;background:#bdd7ee;overflow:hidden;">5,00</div><div class="a" style="left:743px;top:389px;width:47px;height:13px;border:1px solid #000;box-sizing:border-box"></div><div class="c" style="left:790px;top:390px;width:45px;height:11px;line-height:13px;font-size:9.3px;text-align:center;color:#000;background:#bdd7ee;overflow:hidden;">5,00</div><div class="a" style="left:789px;top:389px;width:47px;height:13px;border:1px solid #000;box-sizing:border-box"></div><div class="c" style="left:836px;top:390px;width:45px;height:11px;line-height:13px;font-size:9.3px;text-align:center;color:#000;background:#bdd7ee;overflow:hidden;">5,00</div><div class="a" style="left:835px;top:389px;width:47px;height:13px;border:1px solid #000;box-sizing:border-box"></div><div class="c" style="left:882px;top:390px;width:45px;height:11px;line-height:13px;font-size:9.3px;text-align:center;color:#000;background:#bdd7ee;overflow:hidden;">5,00</div><div class="a" style="left:881px;top:389px;width:47px;height:13px;border:1px solid #000;box-sizing:border-box"></div><div class="c" style="left:928px;top:390px;width:45px;height:11px;line-height:13px;font-size:9.3px;text-align:center;color:#000;background:#bdd7ee;overflow:hidden;">5,00</div><div class="a" style="left:927px;top:389px;width:47px;height:13px;border:1px solid #000;box-sizing:border-box"></div><div class="c" style="left:974px;top:390px;width:45px;height:11px;line-height:13px;font-size:9.3px;text-align:center;color:#000;background:#bdd7ee;overflow:hidden;">5,00</div><div class="a" style="left:973px;top:389px;width:47px;height:13px;border:1px solid #000;box-sizing:border-box"></div><div class="c" style="left:1020px;top:390px;width:45px;height:11px;line-height:13px;font-size:9.3px;text-align:center;color:#000;background:#bdd7ee;overflow:hidden;">5,00</div><div class="a" style="left:1019px;top:389px;width:47px;height:13px;border:1px solid #000;box-sizing:border-box"></div><div class="c" style="left:1066px;top:390px;width:27px;height:11px;line-height:13px;font-size:9.3px;text-align:center;color:#000;background:#bdd7ee;overflow:hidden;">5,00</div><div class="a" style="left:1065px;top:389px;width:29px;height:13px;border:1px solid #000;box-sizing:border-box"></div><div class="c" style="left:453px;top:402px;width:64px;height:11px;line-height:13px;font-size:9.3px;text-align:center;color:#000;overflow:hidden;">[45 - 50)</div><div class="a" style="left:452px;top:401px;width:66px;height:13px;border:1px solid #000;box-sizing:border-box"></div><div class="c" style="left:518px;top:402px;width:41px;height:11px;line-height:13px;font-size:9.3px;text-align:center;color:#000;overflow:hidden;">45</div><div class="a" style="left:517px;top:401px;width:43px;height:13px;border:1px solid #000;box-sizing:border-box"></div><div class="c" style="left:560px;top:402px;width:45px;height:11px;line-height:13px;font-size:9.3px;text-align:center;color:#000;background:#a9d08e;overflow:hidden;">4,00</div><div class="a" style="left:559px;top:401px;width:47px;height:13px;border:1px solid #000;box-sizing:border-box"></div><div class="c" style="left:606px;top:402px;width:45px;height:11px;line-height:13px;font-size:9.3px;text-align:center;color:#000;background:#a9d08e;overflow:hidden;">4,00</div><div class="a" style="left:605px;top:401px;width:47px;height:13px;border:1px solid #000;box-sizing:border-box"></div><div class="c" style="left:652px;top:402px;width:45px;height:11px;line-height:13px;font-size:9.3px;text-align:center;color:#000;background:#bdd7ee;overflow:hidden;">5,00</div><div class="a" style="left:651px;top:401px;width:47px;height:13px;border:1px solid #000;box-sizing:border-box"></div><div class="c" style="left:698px;top:402px;width:45px;height:11px;line-height:13px;font-size:9.3px;text-align:center;color:#000;background:#bdd7ee;overflow:hidden;">5,00</div><div class="a" style="left:697px;top:401px;width:47px;height:13px;border:1px solid #000;box-sizing:border-box"></div><div class="c" style="left:744px;top:402px;width:45px;height:11px;line-height:13px;font-size:9.3px;text-align:center;color:#000;background:#bdd7ee;overflow:hidden;">5,00</div><div class="a" style="left:743px;top:401px;width:47px;height:13px;border:1px solid #000;box-sizing:border-box"></div><div class="c" style="left:790px;top:402px;width:45px;height:11px;line-height:13px;font-size:9.3px;text-align:center;color:#000;background:#bdd7ee;overflow:hidden;">5,00</div><div class="a" style="left:789px;top:401px;width:47px;height:13px;border:1px solid #000;box-sizing:border-box"></div><div class="c" style="left:836px;top:402px;width:45px;height:11px;line-height:13px;font-size:9.3px;text-align:center;color:#000;background:#bdd7ee;overflow:hidden;">5,00</div><div class="a" style="left:835px;top:401px;width:47px;height:13px;border:1px solid #000;box-sizing:border-box"></div><div class="c" style="left:882px;top:402px;width:45px;height:11px;line-height:13px;font-size:9.3px;text-align:center;color:#000;background:#bdd7ee;overflow:hidden;">5,00</div><div class="a" style="left:881px;top:401px;width:47px;height:13px;border:1px solid #000;box-sizing:border-box"></div><div class="c" style="left:928px;top:402px;width:45px;height:11px;line-height:13px;font-size:9.3px;text-align:center;color:#000;background:#bdd7ee;overflow:hidden;">5,00</div><div class="a" style="left:927px;top:401px;width:47px;height:13px;border:1px solid #000;box-sizing:border-box"></div><div class="c" style="left:974px;top:402px;width:45px;height:11px;line-height:13px;font-size:9.3px;text-align:center;color:#000;background:#bdd7ee;overflow:hidden;">5,00</div><div class="a" style="left:973px;top:401px;width:47px;height:13px;border:1px solid #000;box-sizing:border-box"></div><div class="c" style="left:1020px;top:402px;width:45px;height:11px;line-height:13px;font-size:9.3px;text-align:center;color:#000;background:#bdd7ee;overflow:hidden;">5,00</div><div class="a" style="left:1019px;top:401px;width:47px;height:13px;border:1px solid #000;box-sizing:border-box"></div><div class="c" style="left:1066px;top:402px;width:27px;height:11px;line-height:13px;font-size:9.3px;text-align:center;color:#000;background:#bdd7ee;overflow:hidden;">5,00</div><div class="a" style="left:1065px;top:401px;width:29px;height:13px;border:1px solid #000;box-sizing:border-box"></div><div class="c" style="left:453px;top:414px;width:64px;height:11px;line-height:13px;font-size:9.3px;text-align:center;color:#000;overflow:hidden;">[50 - 55)</div><div class="a" style="left:452px;top:413px;width:66px;height:13px;border:1px solid #000;box-sizing:border-box"></div><div class="c" style="left:518px;top:414px;width:41px;height:11px;line-height:13px;font-size:9.3px;text-align:center;color:#000;overflow:hidden;">50</div><div class="a" style="left:517px;top:413px;width:43px;height:13px;border:1px solid #000;box-sizing:border-box"></div><div class="c" style="left:560px;top:414px;width:45px;height:11px;line-height:13px;font-size:9.3px;text-align:center;color:#000;background:#a9d08e;overflow:hidden;">4,00</div><div class="a" style="left:559px;top:413px;width:47px;height:13px;border:1px solid #000;box-sizing:border-box"></div><div class="c" style="left:606px;top:414px;width:45px;height:11px;line-height:13px;font-size:9.3px;text-align:center;color:#000;background:#a9d08e;overflow:hidden;">4,00</div><div class="a" style="left:605px;top:413px;width:47px;height:13px;border:1px solid #000;box-sizing:border-box"></div><div class="c" style="left:652px;top:414px;width:45px;height:11px;line-height:13px;font-size:9.3px;text-align:center;color:#000;background:#a9d08e;overflow:hidden;">4,00</div><div class="a" style="left:651px;top:413px;width:47px;height:13px;border:1px solid #000;box-sizing:border-box"></div><div class="c" style="left:698px;top:414px;width:45px;height:11px;line-height:13px;font-size:9.3px;text-align:center;color:#000;background:#bdd7ee;overflow:hidden;">5,00</div><div class="a" style="left:697px;top:413px;width:47px;height:13px;border:1px solid #000;box-sizing:border-box"></div><div class="c" style="left:744px;top:414px;width:45px;height:11px;line-height:13px;font-size:9.3px;text-align:center;color:#000;background:#bdd7ee;overflow:hidden;">5,00</div><div class="a" style="left:743px;top:413px;width:47px;height:13px;border:1px solid #000;box-sizing:border-box"></div><div class="c" style="left:790px;top:414px;width:45px;height:11px;line-height:13px;font-size:9.3px;text-align:center;color:#000;background:#bdd7ee;overflow:hidden;">5,00</div><div class="a" style="left:789px;top:413px;width:47px;height:13px;border:1px solid #000;box-sizing:border-box"></div><div class="c" style="left:836px;top:414px;width:45px;height:11px;line-height:13px;font-size:9.3px;text-align:center;color:#000;background:#bdd7ee;overflow:hidden;">5,00</div><div class="a" style="left:835px;top:413px;width:47px;height:13px;border:1px solid #000;box-sizing:border-box"></div><div class="c" style="left:882px;top:414px;width:45px;height:11px;line-height:13px;font-size:9.3px;text-align:center;color:#000;background:#bdd7ee;overflow:hidden;">5,00</div><div class="a" style="left:881px;top:413px;width:47px;height:13px;border:1px solid #000;box-sizing:border-box"></div><div class="c" style="left:928px;top:414px;width:45px;height:11px;line-height:13px;font-size:9.3px;text-align:center;color:#000;background:#bdd7ee;overflow:hidden;">5,00</div><div class="a" style="left:927px;top:413px;width:47px;height:13px;border:1px solid #000;box-sizing:border-box"></div><div class="c" style="left:974px;top:414px;width:45px;height:11px;line-height:13px;font-size:9.3px;text-align:center;color:#000;background:#bdd7ee;overflow:hidden;">5,00</div><div class="a" style="left:973px;top:413px;width:47px;height:13px;border:1px solid #000;box-sizing:border-box"></div><div class="c" style="left:1020px;top:414px;width:45px;height:11px;line-height:13px;font-size:9.3px;text-align:center;color:#000;background:#bdd7ee;overflow:hidden;">5,00</div><div class="a" style="left:1019px;top:413px;width:47px;height:13px;border:1px solid #000;box-sizing:border-box"></div><div class="c" style="left:1066px;top:414px;width:27px;height:11px;line-height:13px;font-size:9.3px;text-align:center;color:#000;background:#bdd7ee;overflow:hidden;">5,00</div><div class="a" style="left:1065px;top:413px;width:29px;height:13px;border:1px solid #000;box-sizing:border-box"></div><div class="c" style="left:453px;top:426px;width:64px;height:11px;line-height:13px;font-size:9.3px;text-align:center;color:#000;overflow:hidden;">[55 - 60)</div><div class="a" style="left:452px;top:425px;width:66px;height:13px;border:1px solid #000;box-sizing:border-box"></div><div class="c" style="left:518px;top:426px;width:41px;height:11px;line-height:13px;font-size:9.3px;text-align:center;color:#000;overflow:hidden;">55</div><div class="a" style="left:517px;top:425px;width:43px;height:13px;border:1px solid #000;box-sizing:border-box"></div><div class="c" style="left:560px;top:426px;width:45px;height:11px;line-height:13px;font-size:9.3px;text-align:center;color:#000;background:#a9d08e;overflow:hidden;">4,00</div><div class="a" style="left:559px;top:425px;width:47px;height:13px;border:1px solid #000;box-sizing:border-box"></div><div class="c" style="left:606px;top:426px;width:45px;height:11px;line-height:13px;font-size:9.3px;text-align:center;color:#000;background:#a9d08e;overflow:hidden;">4,00</div><div class="a" style="left:605px;top:425px;width:47px;height:13px;border:1px solid #000;box-sizing:border-box"></div><div class="c" style="left:652px;top:426px;width:45px;height:11px;line-height:13px;font-size:9.3px;text-align:center;color:#000;background:#a9d08e;overflow:hidden;">4,00</div><div class="a" style="left:651px;top:425px;width:47px;height:13px;border:1px solid #000;box-sizing:border-box"></div><div class="c" style="left:698px;top:426px;width:45px;height:11px;line-height:13px;font-size:9.3px;text-align:center;color:#000;background:#a9d08e;overflow:hidden;">4,00</div><div class="a" style="left:697px;top:425px;width:47px;height:13px;border:1px solid #000;box-sizing:border-box"></div><div class="c" style="left:744px;top:426px;width:45px;height:11px;line-height:13px;font-size:9.3px;text-align:center;color:#000;background:#a9d08e;overflow:hidden;">4,00</div><div class="a" style="left:743px;top:425px;width:47px;height:13px;border:1px solid #000;box-sizing:border-box"></div><div class="c" style="left:790px;top:426px;width:45px;height:11px;line-height:13px;font-size:9.3px;text-align:center;color:#000;background:#bdd7ee;overflow:hidden;">5,00</div><div class="a" style="left:789px;top:425px;width:47px;height:13px;border:1px solid #000;box-sizing:border-box"></div><div class="c" style="left:836px;top:426px;width:45px;height:11px;line-height:13px;font-size:9.3px;text-align:center;color:#000;background:#bdd7ee;overflow:hidden;">5,00</div><div class="a" style="left:835px;top:425px;width:47px;height:13px;border:1px solid #000;box-sizing:border-box"></div><div class="c" style="left:882px;top:426px;width:45px;height:11px;line-height:13px;font-size:9.3px;text-align:center;color:#000;background:#bdd7ee;overflow:hidden;">5,00</div><div class="a" style="left:881px;top:425px;width:47px;height:13px;border:1px solid #000;box-sizing:border-box"></div><div class="c" style="left:928px;top:426px;width:45px;height:11px;line-height:13px;font-size:9.3px;text-align:center;color:#000;background:#bdd7ee;overflow:hidden;">5,00</div><div class="a" style="left:927px;top:425px;width:47px;height:13px;border:1px solid #000;box-sizing:border-box"></div><div class="c" style="left:974px;top:426px;width:45px;height:11px;line-height:13px;font-size:9.3px;text-align:center;color:#000;background:#bdd7ee;overflow:hidden;">5,00</div><div class="a" style="left:973px;top:425px;width:47px;height:13px;border:1px solid #000;box-sizing:border-box"></div><div class="c" style="left:1020px;top:426px;width:45px;height:11px;line-height:13px;font-size:9.3px;text-align:center;color:#000;background:#bdd7ee;overflow:hidden;">5,00</div><div class="a" style="left:1019px;top:425px;width:47px;height:13px;border:1px solid #000;box-sizing:border-box"></div><div class="c" style="left:1066px;top:426px;width:27px;height:11px;line-height:13px;font-size:9.3px;text-align:center;color:#000;background:#bdd7ee;overflow:hidden;">5,00</div><div class="a" style="left:1065px;top:425px;width:29px;height:13px;border:1px solid #000;box-sizing:border-box"></div><div class="c" style="left:453px;top:438px;width:64px;height:11px;line-height:13px;font-size:9.3px;text-align:center;color:#000;overflow:hidden;">[60 - 65)</div><div class="a" style="left:452px;top:437px;width:66px;height:13px;border:1px solid #000;box-sizing:border-box"></div><div class="c" style="left:518px;top:438px;width:41px;height:11px;line-height:13px;font-size:9.3px;text-align:center;color:#000;overflow:hidden;">60</div><div class="a" style="left:517px;top:437px;width:43px;height:13px;border:1px solid #000;box-sizing:border-box"></div><div class="c" style="left:560px;top:438px;width:45px;height:11px;line-height:13px;font-size:9.3px;text-align:center;color:#000;background:#bf8f00;overflow:hidden;">3,00</div><div class="a" style="left:559px;top:437px;width:47px;height:13px;border:1px solid #000;box-sizing:border-box"></div><div class="c" style="left:606px;top:438px;width:45px;height:11px;line-height:13px;font-size:9.3px;text-align:center;color:#000;background:#bf8f00;overflow:hidden;">3,00</div><div class="a" style="left:605px;top:437px;width:47px;height:13px;border:1px solid #000;box-sizing:border-box"></div><div class="c" style="left:652px;top:438px;width:45px;height:11px;line-height:13px;font-size:9.3px;text-align:center;color:#000;background:#a9d08e;overflow:hidden;">4,00</div><div class="a" style="left:651px;top:437px;width:47px;height:13px;border:1px solid #000;box-sizing:border-box"></div><div class="c" style="left:698px;top:438px;width:45px;height:11px;line-height:13px;font-size:9.3px;text-align:center;color:#000;background:#a9d08e;overflow:hidden;">4,00</div><div class="a" style="left:697px;top:437px;width:47px;height:13px;border:1px solid #000;box-sizing:border-box"></div><div class="c" style="left:744px;top:438px;width:45px;height:11px;line-height:13px;font-size:9.3px;text-align:center;color:#000;background:#a9d08e;overflow:hidden;">4,00</div><div class="a" style="left:743px;top:437px;width:47px;height:13px;border:1px solid #000;box-sizing:border-box"></div><div class="c" style="left:790px;top:438px;width:45px;height:11px;line-height:13px;font-size:9.3px;text-align:center;color:#000;background:#a9d08e;overflow:hidden;">4,00</div><div class="a" style="left:789px;top:437px;width:47px;height:13px;border:1px solid #000;box-sizing:border-box"></div><div class="c" style="left:836px;top:438px;width:45px;height:11px;line-height:13px;font-size:9.3px;text-align:center;color:#000;background:#a9d08e;overflow:hidden;">4,00</div><div class="a" style="left:835px;top:437px;width:47px;height:13px;border:1px solid #000;box-sizing:border-box"></div><div class="c" style="left:882px;top:438px;width:45px;height:11px;line-height:13px;font-size:9.3px;text-align:center;color:#000;background:#bdd7ee;overflow:hidden;">5,00</div><div class="a" style="left:881px;top:437px;width:47px;height:13px;border:1px solid #000;box-sizing:border-box"></div><div class="c" style="left:928px;top:438px;width:45px;height:11px;line-height:13px;font-size:9.3px;text-align:center;color:#000;background:#bdd7ee;overflow:hidden;">5,00</div><div class="a" style="left:927px;top:437px;width:47px;height:13px;border:1px solid #000;box-sizing:border-box"></div><div class="c" style="left:974px;top:438px;width:45px;height:11px;line-height:13px;font-size:9.3px;text-align:center;color:#000;background:#bdd7ee;overflow:hidden;">5,00</div><div class="a" style="left:973px;top:437px;width:47px;height:13px;border:1px solid #000;box-sizing:border-box"></div><div class="c" style="left:1020px;top:438px;width:45px;height:11px;line-height:13px;font-size:9.3px;text-align:center;color:#000;background:#bdd7ee;overflow:hidden;">5,00</div><div class="a" style="left:1019px;top:437px;width:47px;height:13px;border:1px solid #000;box-sizing:border-box"></div><div class="c" style="left:1066px;top:438px;width:27px;height:11px;line-height:13px;font-size:9.3px;text-align:center;color:#000;background:#bdd7ee;overflow:hidden;">5,00</div><div class="a" style="left:1065px;top:437px;width:29px;height:13px;border:1px solid #000;box-sizing:border-box"></div><div class="c" style="left:453px;top:450px;width:64px;height:11px;line-height:13px;font-size:9.3px;text-align:center;color:#000;overflow:hidden;">[65 - 70)</div><div class="a" style="left:452px;top:449px;width:66px;height:13px;border:1px solid #000;box-sizing:border-box"></div><div class="c" style="left:518px;top:450px;width:41px;height:11px;line-height:13px;font-size:9.3px;text-align:center;color:#000;overflow:hidden;">65</div><div class="a" style="left:517px;top:449px;width:43px;height:13px;border:1px solid #000;box-sizing:border-box"></div><div class="c" style="left:560px;top:450px;width:45px;height:11px;line-height:13px;font-size:9.3px;text-align:center;color:#000;background:#bf8f00;overflow:hidden;">3,00</div><div class="a" style="left:559px;top:449px;width:47px;height:13px;border:1px solid #000;box-sizing:border-box"></div><div class="c" style="left:606px;top:450px;width:45px;height:11px;line-height:13px;font-size:9.3px;text-align:center;color:#000;background:#bf8f00;overflow:hidden;">3,00</div><div class="a" style="left:605px;top:449px;width:47px;height:13px;border:1px solid #000;box-sizing:border-box"></div><div class="c" style="left:652px;top:450px;width:45px;height:11px;line-height:13px;font-size:9.3px;text-align:center;color:#000;background:#bf8f00;overflow:hidden;">3,00</div><div class="a" style="left:651px;top:449px;width:47px;height:13px;border:1px solid #000;box-sizing:border-box"></div><div class="c" style="left:698px;top:450px;width:45px;height:11px;line-height:13px;font-size:9.3px;text-align:center;color:#000;background:#a9d08e;overflow:hidden;">4,00</div><div class="a" style="left:697px;top:449px;width:47px;height:13px;border:1px solid #000;box-sizing:border-box"></div><div class="c" style="left:744px;top:450px;width:45px;height:11px;line-height:13px;font-size:9.3px;text-align:center;color:#000;background:#a9d08e;overflow:hidden;">4,00</div><div class="a" style="left:743px;top:449px;width:47px;height:13px;border:1px solid #000;box-sizing:border-box"></div><div class="c" style="left:790px;top:450px;width:45px;height:11px;line-height:13px;font-size:9.3px;text-align:center;color:#000;background:#a9d08e;overflow:hidden;">4,00</div><div class="a" style="left:789px;top:449px;width:47px;height:13px;border:1px solid #000;box-sizing:border-box"></div><div class="c" style="left:836px;top:450px;width:45px;height:11px;line-height:13px;font-size:9.3px;text-align:center;color:#000;background:#a9d08e;overflow:hidden;">4,00</div><div class="a" style="left:835px;top:449px;width:47px;height:13px;border:1px solid #000;box-sizing:border-box"></div><div class="c" style="left:882px;top:450px;width:45px;height:11px;line-height:13px;font-size:9.3px;text-align:center;color:#000;background:#a9d08e;overflow:hidden;">4,00</div><div class="a" style="left:881px;top:449px;width:47px;height:13px;border:1px solid #000;box-sizing:border-box"></div><div class="c" style="left:928px;top:450px;width:45px;height:11px;line-height:13px;font-size:9.3px;text-align:center;color:#000;background:#bdd7ee;overflow:hidden;">5,00</div><div class="a" style="left:927px;top:449px;width:47px;height:13px;border:1px solid #000;box-sizing:border-box"></div><div class="c" style="left:974px;top:450px;width:45px;height:11px;line-height:13px;font-size:9.3px;text-align:center;color:#000;background:#bdd7ee;overflow:hidden;">5,00</div><div class="a" style="left:973px;top:449px;width:47px;height:13px;border:1px solid #000;box-sizing:border-box"></div><div class="c" style="left:1020px;top:450px;width:45px;height:11px;line-height:13px;font-size:9.3px;text-align:center;color:#000;background:#bdd7ee;overflow:hidden;">5,00</div><div class="a" style="left:1019px;top:449px;width:47px;height:13px;border:1px solid #000;box-sizing:border-box"></div><div class="c" style="left:1066px;top:450px;width:27px;height:11px;line-height:13px;font-size:9.3px;text-align:center;color:#000;background:#bdd7ee;overflow:hidden;">5,00</div><div class="a" style="left:1065px;top:449px;width:29px;height:13px;border:1px solid #000;box-sizing:border-box"></div><div class="c" style="left:453px;top:462px;width:64px;height:11px;line-height:13px;font-size:9.3px;text-align:center;color:#000;overflow:hidden;">[70 - 75)</div><div class="a" style="left:452px;top:461px;width:66px;height:13px;border:1px solid #000;box-sizing:border-box"></div><div class="c" style="left:518px;top:462px;width:41px;height:11px;line-height:13px;font-size:9.3px;text-align:center;color:#000;overflow:hidden;">70</div><div class="a" style="left:517px;top:461px;width:43px;height:13px;border:1px solid #000;box-sizing:border-box"></div><div class="c" style="left:560px;top:462px;width:45px;height:11px;line-height:13px;font-size:9.3px;text-align:center;color:#000;background:#f4b084;overflow:hidden;">2,00</div><div class="a" style="left:559px;top:461px;width:47px;height:13px;border:1px solid #000;box-sizing:border-box"></div><div class="c" style="left:606px;top:462px;width:45px;height:11px;line-height:13px;font-size:9.3px;text-align:center;color:#000;background:#bf8f00;overflow:hidden;">3,00</div><div class="a" style="left:605px;top:461px;width:47px;height:13px;border:1px solid #000;box-sizing:border-box"></div><div class="c" style="left:652px;top:462px;width:45px;height:11px;line-height:13px;font-size:9.3px;text-align:center;color:#000;background:#bf8f00;overflow:hidden;">3,00</div><div class="a" style="left:651px;top:461px;width:47px;height:13px;border:1px solid #000;box-sizing:border-box"></div><div class="c" style="left:698px;top:462px;width:45px;height:11px;line-height:13px;font-size:9.3px;text-align:center;color:#000;background:#bf8f00;overflow:hidden;">3,00</div><div class="a" style="left:697px;top:461px;width:47px;height:13px;border:1px solid #000;box-sizing:border-box"></div><div class="c" style="left:744px;top:462px;width:45px;height:11px;line-height:13px;font-size:9.3px;text-align:center;color:#000;background:#a9d08e;overflow:hidden;">4,00</div><div class="a" style="left:743px;top:461px;width:47px;height:13px;border:1px solid #000;box-sizing:border-box"></div><div class="c" style="left:790px;top:462px;width:45px;height:11px;line-height:13px;font-size:9.3px;text-align:center;color:#000;background:#a9d08e;overflow:hidden;">4,00</div><div class="a" style="left:789px;top:461px;width:47px;height:13px;border:1px solid #000;box-sizing:border-box"></div><div class="c" style="left:836px;top:462px;width:45px;height:11px;line-height:13px;font-size:9.3px;text-align:center;color:#000;background:#a9d08e;overflow:hidden;">4,00</div><div class="a" style="left:835px;top:461px;width:47px;height:13px;border:1px solid #000;box-sizing:border-box"></div><div class="c" style="left:882px;top:462px;width:45px;height:11px;line-height:13px;font-size:9.3px;text-align:center;color:#000;background:#a9d08e;overflow:hidden;">4,00</div><div class="a" style="left:881px;top:461px;width:47px;height:13px;border:1px solid #000;box-sizing:border-box"></div><div class="c" style="left:928px;top:462px;width:45px;height:11px;line-height:13px;font-size:9.3px;text-align:center;color:#000;background:#a9d08e;overflow:hidden;">4,00</div><div class="a" style="left:927px;top:461px;width:47px;height:13px;border:1px solid #000;box-sizing:border-box"></div><div class="c" style="left:974px;top:462px;width:45px;height:11px;line-height:13px;font-size:9.3px;text-align:center;color:#000;background:#bdd7ee;overflow:hidden;">5,00</div><div class="a" style="left:973px;top:461px;width:47px;height:13px;border:1px solid #000;box-sizing:border-box"></div><div class="c" style="left:1020px;top:462px;width:45px;height:11px;line-height:13px;font-size:9.3px;text-align:center;color:#000;background:#bdd7ee;overflow:hidden;">5,00</div><div class="a" style="left:1019px;top:461px;width:47px;height:13px;border:1px solid #000;box-sizing:border-box"></div><div class="c" style="left:1066px;top:462px;width:27px;height:11px;line-height:13px;font-size:9.3px;text-align:center;color:#000;background:#bdd7ee;overflow:hidden;">5,00</div><div class="a" style="left:1065px;top:461px;width:29px;height:13px;border:1px solid #000;box-sizing:border-box"></div><div class="c" style="left:453px;top:474px;width:64px;height:11px;line-height:13px;font-size:9.3px;text-align:center;color:#000;overflow:hidden;">[75 - 80)</div><div class="a" style="left:452px;top:473px;width:66px;height:13px;border:1px solid #000;box-sizing:border-box"></div><div class="c" style="left:518px;top:474px;width:41px;height:11px;line-height:13px;font-size:9.3px;text-align:center;color:#000;overflow:hidden;">75</div><div class="a" style="left:517px;top:473px;width:43px;height:13px;border:1px solid #000;box-sizing:border-box"></div><div class="c" style="left:560px;top:474px;width:45px;height:11px;line-height:13px;font-size:9.3px;text-align:center;color:#000;background:#f4b084;overflow:hidden;">2,00</div><div class="a" style="left:559px;top:473px;width:47px;height:13px;border:1px solid #000;box-sizing:border-box"></div><div class="c" style="left:606px;top:474px;width:45px;height:11px;line-height:13px;font-size:9.3px;text-align:center;color:#000;background:#f4b084;overflow:hidden;">2,00</div><div class="a" style="left:605px;top:473px;width:47px;height:13px;border:1px solid #000;box-sizing:border-box"></div><div class="c" style="left:652px;top:474px;width:45px;height:11px;line-height:13px;font-size:9.3px;text-align:center;color:#000;background:#bf8f00;overflow:hidden;">3,00</div><div class="a" style="left:651px;top:473px;width:47px;height:13px;border:1px solid #000;box-sizing:border-box"></div><div class="c" style="left:698px;top:474px;width:45px;height:11px;line-height:13px;font-size:9.3px;text-align:center;color:#000;background:#bf8f00;overflow:hidden;">3,00</div><div class="a" style="left:697px;top:473px;width:47px;height:13px;border:1px solid #000;box-sizing:border-box"></div><div class="c" style="left:744px;top:474px;width:45px;height:11px;line-height:13px;font-size:9.3px;text-align:center;color:#000;background:#bf8f00;overflow:hidden;">3,00</div><div class="a" style="left:743px;top:473px;width:47px;height:13px;border:1px solid #000;box-sizing:border-box"></div><div class="c" style="left:790px;top:474px;width:45px;height:11px;line-height:13px;font-size:9.3px;text-align:center;color:#000;background:#a9d08e;overflow:hidden;">4,00</div><div class="a" style="left:789px;top:473px;width:47px;height:13px;border:1px solid #000;box-sizing:border-box"></div><div class="c" style="left:836px;top:474px;width:45px;height:11px;line-height:13px;font-size:9.3px;text-align:center;color:#000;background:#a9d08e;overflow:hidden;">4,00</div><div class="a" style="left:835px;top:473px;width:47px;height:13px;border:1px solid #000;box-sizing:border-box"></div><div class="c" style="left:882px;top:474px;width:45px;height:11px;line-height:13px;font-size:9.3px;text-align:center;color:#000;background:#a9d08e;overflow:hidden;">4,00</div><div class="a" style="left:881px;top:473px;width:47px;height:13px;border:1px solid #000;box-sizing:border-box"></div><div class="c" style="left:928px;top:474px;width:45px;height:11px;line-height:13px;font-size:9.3px;text-align:center;color:#000;background:#a9d08e;overflow:hidden;">4,00</div><div class="a" style="left:927px;top:473px;width:47px;height:13px;border:1px solid #000;box-sizing:border-box"></div><div class="c" style="left:974px;top:474px;width:45px;height:11px;line-height:13px;font-size:9.3px;text-align:center;color:#000;background:#a9d08e;overflow:hidden;">4,00</div><div class="a" style="left:973px;top:473px;width:47px;height:13px;border:1px solid #000;box-sizing:border-box"></div><div class="c" style="left:1020px;top:474px;width:45px;height:11px;line-height:13px;font-size:9.3px;text-align:center;color:#000;background:#a9d08e;overflow:hidden;">4,00</div><div class="a" style="left:1019px;top:473px;width:47px;height:13px;border:1px solid #000;box-sizing:border-box"></div><div class="c" style="left:1066px;top:474px;width:27px;height:11px;line-height:13px;font-size:9.3px;text-align:center;color:#000;background:#bdd7ee;overflow:hidden;">5,00</div><div class="a" style="left:1065px;top:473px;width:29px;height:13px;border:1px solid #000;box-sizing:border-box"></div><div class="c" style="left:453px;top:486px;width:64px;height:11px;line-height:13px;font-size:9.3px;text-align:center;color:#000;overflow:hidden;">[80 - 85)</div><div class="a" style="left:452px;top:485px;width:66px;height:13px;border:1px solid #000;box-sizing:border-box"></div><div class="c" style="left:518px;top:486px;width:41px;height:11px;line-height:13px;font-size:9.3px;text-align:center;color:#000;overflow:hidden;">80</div><div class="a" style="left:517px;top:485px;width:43px;height:13px;border:1px solid #000;box-sizing:border-box"></div><div class="c" style="left:560px;top:486px;width:45px;height:11px;line-height:13px;font-size:9.3px;text-align:center;color:#000;background:#f4b084;overflow:hidden;">2,00</div><div class="a" style="left:559px;top:485px;width:47px;height:13px;border:1px solid #000;box-sizing:border-box"></div><div class="c" style="left:606px;top:486px;width:45px;height:11px;line-height:13px;font-size:9.3px;text-align:center;color:#000;background:#f4b084;overflow:hidden;">2,00</div><div class="a" style="left:605px;top:485px;width:47px;height:13px;border:1px solid #000;box-sizing:border-box"></div><div class="c" style="left:652px;top:486px;width:45px;height:11px;line-height:13px;font-size:9.3px;text-align:center;color:#000;background:#f4b084;overflow:hidden;">2,00</div><div class="a" style="left:651px;top:485px;width:47px;height:13px;border:1px solid #000;box-sizing:border-box"></div><div class="c" style="left:698px;top:486px;width:45px;height:11px;line-height:13px;font-size:9.3px;text-align:center;color:#000;background:#bf8f00;overflow:hidden;">3,00</div><div class="a" style="left:697px;top:485px;width:47px;height:13px;border:1px solid #000;box-sizing:border-box"></div><div class="c" style="left:744px;top:486px;width:45px;height:11px;line-height:13px;font-size:9.3px;text-align:center;color:#000;background:#bf8f00;overflow:hidden;">3,00</div><div class="a" style="left:743px;top:485px;width:47px;height:13px;border:1px solid #000;box-sizing:border-box"></div><div class="c" style="left:790px;top:486px;width:45px;height:11px;line-height:13px;font-size:9.3px;text-align:center;color:#000;background:#bf8f00;overflow:hidden;">3,00</div><div class="a" style="left:789px;top:485px;width:47px;height:13px;border:1px solid #000;box-sizing:border-box"></div><div class="c" style="left:836px;top:486px;width:45px;height:11px;line-height:13px;font-size:9.3px;text-align:center;color:#000;background:#a9d08e;overflow:hidden;">4,00</div><div class="a" style="left:835px;top:485px;width:47px;height:13px;border:1px solid #000;box-sizing:border-box"></div><div class="c" style="left:882px;top:486px;width:45px;height:11px;line-height:13px;font-size:9.3px;text-align:center;color:#000;background:#a9d08e;overflow:hidden;">4,00</div><div class="a" style="left:881px;top:485px;width:47px;height:13px;border:1px solid #000;box-sizing:border-box"></div><div class="c" style="left:928px;top:486px;width:45px;height:11px;line-height:13px;font-size:9.3px;text-align:center;color:#000;background:#a9d08e;overflow:hidden;">4,00</div><div class="a" style="left:927px;top:485px;width:47px;height:13px;border:1px solid #000;box-sizing:border-box"></div><div class="c" style="left:974px;top:486px;width:45px;height:11px;line-height:13px;font-size:9.3px;text-align:center;color:#000;background:#a9d08e;overflow:hidden;">4,00</div><div class="a" style="left:973px;top:485px;width:47px;height:13px;border:1px solid #000;box-sizing:border-box"></div><div class="c" style="left:1020px;top:486px;width:45px;height:11px;line-height:13px;font-size:9.3px;text-align:center;color:#000;background:#a9d08e;overflow:hidden;">4,00</div><div class="a" style="left:1019px;top:485px;width:47px;height:13px;border:1px solid #000;box-sizing:border-box"></div><div class="c" style="left:1066px;top:486px;width:27px;height:11px;line-height:13px;font-size:9.3px;text-align:center;color:#000;background:#a9d08e;overflow:hidden;">4,00</div><div class="a" style="left:1065px;top:485px;width:29px;height:13px;border:1px solid #000;box-sizing:border-box"></div><div class="c" style="left:453px;top:498px;width:64px;height:11px;line-height:13px;font-size:9.3px;text-align:center;color:#000;overflow:hidden;">[85 - 90)</div><div class="a" style="left:452px;top:497px;width:66px;height:13px;border:1px solid #000;box-sizing:border-box"></div><div class="c" style="left:518px;top:498px;width:41px;height:11px;line-height:13px;font-size:9.3px;text-align:center;color:#000;overflow:hidden;">85</div><div class="a" style="left:517px;top:497px;width:43px;height:13px;border:1px solid #000;box-sizing:border-box"></div><div class="c" style="left:560px;top:498px;width:45px;height:11px;line-height:13px;font-size:9.3px;text-align:center;color:#000;background:#f4b084;overflow:hidden;">2,00</div><div class="a" style="left:559px;top:497px;width:47px;height:13px;border:1px solid #000;box-sizing:border-box"></div><div class="c" style="left:606px;top:498px;width:45px;height:11px;line-height:13px;font-size:9.3px;text-align:center;color:#000;background:#f4b084;overflow:hidden;">2,00</div><div class="a" style="left:605px;top:497px;width:47px;height:13px;border:1px solid #000;box-sizing:border-box"></div><div class="c" style="left:652px;top:498px;width:45px;height:11px;line-height:13px;font-size:9.3px;text-align:center;color:#000;background:#f4b084;overflow:hidden;">2,00</div><div class="a" style="left:651px;top:497px;width:47px;height:13px;border:1px solid #000;box-sizing:border-box"></div><div class="c" style="left:698px;top:498px;width:45px;height:11px;line-height:13px;font-size:9.3px;text-align:center;color:#000;background:#f4b084;overflow:hidden;">2,00</div><div class="a" style="left:697px;top:497px;width:47px;height:13px;border:1px solid #000;box-sizing:border-box"></div><div class="c" style="left:744px;top:498px;width:45px;height:11px;line-height:13px;font-size:9.3px;text-align:center;color:#000;background:#bf8f00;overflow:hidden;">3,00</div><div class="a" style="left:743px;top:497px;width:47px;height:13px;border:1px solid #000;box-sizing:border-box"></div><div class="c" style="left:790px;top:498px;width:45px;height:11px;line-height:13px;font-size:9.3px;text-align:center;color:#000;background:#bf8f00;overflow:hidden;">3,00</div><div class="a" style="left:789px;top:497px;width:47px;height:13px;border:1px solid #000;box-sizing:border-box"></div><div class="c" style="left:836px;top:498px;width:45px;height:11px;line-height:13px;font-size:9.3px;text-align:center;color:#000;background:#bf8f00;overflow:hidden;">3,00</div><div class="a" style="left:835px;top:497px;width:47px;height:13px;border:1px solid #000;box-sizing:border-box"></div><div class="c" style="left:882px;top:498px;width:45px;height:11px;line-height:13px;font-size:9.3px;text-align:center;color:#000;background:#a9d08e;overflow:hidden;">4,00</div><div class="a" style="left:881px;top:497px;width:47px;height:13px;border:1px solid #000;box-sizing:border-box"></div><div class="c" style="left:928px;top:498px;width:45px;height:11px;line-height:13px;font-size:9.3px;text-align:center;color:#000;background:#a9d08e;overflow:hidden;">4,00</div><div class="a" style="left:927px;top:497px;width:47px;height:13px;border:1px solid #000;box-sizing:border-box"></div><div class="c" style="left:974px;top:498px;width:45px;height:11px;line-height:13px;font-size:9.3px;text-align:center;color:#000;background:#a9d08e;overflow:hidden;">4,00</div><div class="a" style="left:973px;top:497px;width:47px;height:13px;border:1px solid #000;box-sizing:border-box"></div><div class="c" style="left:1020px;top:498px;width:45px;height:11px;line-height:13px;font-size:9.3px;text-align:center;color:#000;background:#a9d08e;overflow:hidden;">4,00</div><div class="a" style="left:1019px;top:497px;width:47px;height:13px;border:1px solid #000;box-sizing:border-box"></div><div class="c" style="left:1066px;top:498px;width:27px;height:11px;line-height:13px;font-size:9.3px;text-align:center;color:#000;background:#a9d08e;overflow:hidden;">4,00</div><div class="a" style="left:1065px;top:497px;width:29px;height:13px;border:1px solid #000;box-sizing:border-box"></div><div class="c" style="left:453px;top:510px;width:64px;height:11px;line-height:13px;font-size:9.3px;text-align:center;color:#000;overflow:hidden;">[90 - 95)</div><div class="a" style="left:452px;top:509px;width:66px;height:13px;border:1px solid #000;box-sizing:border-box"></div><div class="c" style="left:518px;top:510px;width:41px;height:11px;line-height:13px;font-size:9.3px;text-align:center;color:#000;overflow:hidden;">90</div><div class="a" style="left:517px;top:509px;width:43px;height:13px;border:1px solid #000;box-sizing:border-box"></div><div class="c" style="left:560px;top:510px;width:45px;height:11px;line-height:13px;font-size:9.3px;text-align:center;color:#000;background:#ff0000;overflow:hidden;">1,00</div><div class="a" style="left:559px;top:509px;width:47px;height:13px;border:1px solid #000;box-sizing:border-box"></div><div class="c" style="left:606px;top:510px;width:45px;height:11px;line-height:13px;font-size:9.3px;text-align:center;color:#000;background:#f4b084;overflow:hidden;">2,00</div><div class="a" style="left:605px;top:509px;width:47px;height:13px;border:1px solid #000;box-sizing:border-box"></div><div class="c" style="left:652px;top:510px;width:45px;height:11px;line-height:13px;font-size:9.3px;text-align:center;color:#000;background:#f4b084;overflow:hidden;">2,00</div><div class="a" style="left:651px;top:509px;width:47px;height:13px;border:1px solid #000;box-sizing:border-box"></div><div class="c" style="left:698px;top:510px;width:45px;height:11px;line-height:13px;font-size:9.3px;text-align:center;color:#000;background:#f4b084;overflow:hidden;">2,00</div><div class="a" style="left:697px;top:509px;width:47px;height:13px;border:1px solid #000;box-sizing:border-box"></div><div class="c" style="left:744px;top:510px;width:45px;height:11px;line-height:13px;font-size:9.3px;text-align:center;color:#000;background:#f4b084;overflow:hidden;">2,00</div><div class="a" style="left:743px;top:509px;width:47px;height:13px;border:1px solid #000;box-sizing:border-box"></div><div class="c" style="left:790px;top:510px;width:45px;height:11px;line-height:13px;font-size:9.3px;text-align:center;color:#000;background:#bf8f00;overflow:hidden;">3,00</div><div class="a" style="left:789px;top:509px;width:47px;height:13px;border:1px solid #000;box-sizing:border-box"></div><div class="c" style="left:836px;top:510px;width:45px;height:11px;line-height:13px;font-size:9.3px;text-align:center;color:#000;background:#bf8f00;overflow:hidden;">3,00</div><div class="a" style="left:835px;top:509px;width:47px;height:13px;border:1px solid #000;box-sizing:border-box"></div><div class="c" style="left:882px;top:510px;width:45px;height:11px;line-height:13px;font-size:9.3px;text-align:center;color:#000;background:#bf8f00;overflow:hidden;">3,00</div><div class="a" style="left:881px;top:509px;width:47px;height:13px;border:1px solid #000;box-sizing:border-box"></div><div class="c" style="left:928px;top:510px;width:45px;height:11px;line-height:13px;font-size:9.3px;text-align:center;color:#000;background:#a9d08e;overflow:hidden;">4,00</div><div class="a" style="left:927px;top:509px;width:47px;height:13px;border:1px solid #000;box-sizing:border-box"></div><div class="c" style="left:974px;top:510px;width:45px;height:11px;line-height:13px;font-size:9.3px;text-align:center;color:#000;background:#a9d08e;overflow:hidden;">4,00</div><div class="a" style="left:973px;top:509px;width:47px;height:13px;border:1px solid #000;box-sizing:border-box"></div><div class="c" style="left:1020px;top:510px;width:45px;height:11px;line-height:13px;font-size:9.3px;text-align:center;color:#000;background:#a9d08e;overflow:hidden;">4,00</div><div class="a" style="left:1019px;top:509px;width:47px;height:13px;border:1px solid #000;box-sizing:border-box"></div><div class="c" style="left:1066px;top:510px;width:27px;height:11px;line-height:13px;font-size:9.3px;text-align:center;color:#000;background:#a9d08e;overflow:hidden;">4,00</div><div class="a" style="left:1065px;top:509px;width:29px;height:13px;border:1px solid #000;box-sizing:border-box"></div><div class="c" style="left:453px;top:522px;width:64px;height:11px;line-height:13px;font-size:9.3px;text-align:center;color:#000;overflow:hidden;">[95 - 100)</div><div class="a" style="left:452px;top:521px;width:66px;height:13px;border:1px solid #000;box-sizing:border-box"></div><div class="c" style="left:518px;top:522px;width:41px;height:11px;line-height:13px;font-size:9.3px;text-align:center;color:#000;overflow:hidden;">95</div><div class="a" style="left:517px;top:521px;width:43px;height:13px;border:1px solid #000;box-sizing:border-box"></div><div class="c" style="left:560px;top:522px;width:45px;height:11px;line-height:13px;font-size:9.3px;text-align:center;color:#000;background:#ff0000;overflow:hidden;">1,00</div><div class="a" style="left:559px;top:521px;width:47px;height:13px;border:1px solid #000;box-sizing:border-box"></div><div class="c" style="left:606px;top:522px;width:45px;height:11px;line-height:13px;font-size:9.3px;text-align:center;color:#000;background:#f4b084;overflow:hidden;">2,00</div><div class="a" style="left:605px;top:521px;width:47px;height:13px;border:1px solid #000;box-sizing:border-box"></div><div class="c" style="left:652px;top:522px;width:45px;height:11px;line-height:13px;font-size:9.3px;text-align:center;color:#000;background:#f4b084;overflow:hidden;">2,00</div><div class="a" style="left:651px;top:521px;width:47px;height:13px;border:1px solid #000;box-sizing:border-box"></div><div class="c" style="left:698px;top:522px;width:45px;height:11px;line-height:13px;font-size:9.3px;text-align:center;color:#000;background:#f4b084;overflow:hidden;">2,00</div><div class="a" style="left:697px;top:521px;width:47px;height:13px;border:1px solid #000;box-sizing:border-box"></div><div class="c" style="left:744px;top:522px;width:45px;height:11px;line-height:13px;font-size:9.3px;text-align:center;color:#000;background:#f4b084;overflow:hidden;">2,00</div><div class="a" style="left:743px;top:521px;width:47px;height:13px;border:1px solid #000;box-sizing:border-box"></div><div class="c" style="left:790px;top:522px;width:45px;height:11px;line-height:13px;font-size:9.3px;text-align:center;color:#000;background:#f4b084;overflow:hidden;">2,00</div><div class="a" style="left:789px;top:521px;width:47px;height:13px;border:1px solid #000;box-sizing:border-box"></div><div class="c" style="left:836px;top:522px;width:45px;height:11px;line-height:13px;font-size:9.3px;text-align:center;color:#000;background:#bf8f00;overflow:hidden;">3,00</div><div class="a" style="left:835px;top:521px;width:47px;height:13px;border:1px solid #000;box-sizing:border-box"></div><div class="c" style="left:882px;top:522px;width:45px;height:11px;line-height:13px;font-size:9.3px;text-align:center;color:#000;background:#bf8f00;overflow:hidden;">3,00</div><div class="a" style="left:881px;top:521px;width:47px;height:13px;border:1px solid #000;box-sizing:border-box"></div><div class="c" style="left:928px;top:522px;width:45px;height:11px;line-height:13px;font-size:9.3px;text-align:center;color:#000;background:#bf8f00;overflow:hidden;">3,00</div><div class="a" style="left:927px;top:521px;width:47px;height:13px;border:1px solid #000;box-sizing:border-box"></div><div class="c" style="left:974px;top:522px;width:45px;height:11px;line-height:13px;font-size:9.3px;text-align:center;color:#000;background:#bf8f00;overflow:hidden;">3,00</div><div class="a" style="left:973px;top:521px;width:47px;height:13px;border:1px solid #000;box-sizing:border-box"></div><div class="c" style="left:1020px;top:522px;width:45px;height:11px;line-height:13px;font-size:9.3px;text-align:center;color:#000;background:#a9d08e;overflow:hidden;">4,00</div><div class="a" style="left:1019px;top:521px;width:47px;height:13px;border:1px solid #000;box-sizing:border-box"></div><div class="c" style="left:1066px;top:522px;width:27px;height:11px;line-height:13px;font-size:9.3px;text-align:center;color:#000;background:#a9d08e;overflow:hidden;">4,00</div><div class="a" style="left:1065px;top:521px;width:29px;height:13px;border:1px solid #000;box-sizing:border-box"></div><div class="c" style="left:453px;top:534px;width:64px;height:11px;line-height:13px;font-size:9.3px;text-align:center;color:#000;overflow:hidden;">[100 - 105)</div><div class="a" style="left:452px;top:533px;width:66px;height:13px;border:1px solid #000;box-sizing:border-box"></div><div class="c" style="left:518px;top:534px;width:41px;height:11px;line-height:13px;font-size:9.3px;text-align:center;color:#000;overflow:hidden;">100</div><div class="a" style="left:517px;top:533px;width:43px;height:13px;border:1px solid #000;box-sizing:border-box"></div><div class="c" style="left:560px;top:534px;width:45px;height:11px;line-height:13px;font-size:9.3px;text-align:center;color:#000;background:#ff0000;overflow:hidden;">1,00</div><div class="a" style="left:559px;top:533px;width:47px;height:13px;border:1px solid #000;box-sizing:border-box"></div><div class="c" style="left:606px;top:534px;width:45px;height:11px;line-height:13px;font-size:9.3px;text-align:center;color:#000;background:#ff0000;overflow:hidden;">1,00</div><div class="a" style="left:605px;top:533px;width:47px;height:13px;border:1px solid #000;box-sizing:border-box"></div><div class="c" style="left:652px;top:534px;width:45px;height:11px;line-height:13px;font-size:9.3px;text-align:center;color:#000;background:#f4b084;overflow:hidden;">2,00</div><div class="a" style="left:651px;top:533px;width:47px;height:13px;border:1px solid #000;box-sizing:border-box"></div><div class="c" style="left:698px;top:534px;width:45px;height:11px;line-height:13px;font-size:9.3px;text-align:center;color:#000;background:#f4b084;overflow:hidden;">2,00</div><div class="a" style="left:697px;top:533px;width:47px;height:13px;border:1px solid #000;box-sizing:border-box"></div><div class="c" style="left:744px;top:534px;width:45px;height:11px;line-height:13px;font-size:9.3px;text-align:center;color:#000;background:#f4b084;overflow:hidden;">2,00</div><div class="a" style="left:743px;top:533px;width:47px;height:13px;border:1px solid #000;box-sizing:border-box"></div><div class="c" style="left:790px;top:534px;width:45px;height:11px;line-height:13px;font-size:9.3px;text-align:center;color:#000;background:#f4b084;overflow:hidden;">2,00</div><div class="a" style="left:789px;top:533px;width:47px;height:13px;border:1px solid #000;box-sizing:border-box"></div><div class="c" style="left:836px;top:534px;width:45px;height:11px;line-height:13px;font-size:9.3px;text-align:center;color:#000;background:#f4b084;overflow:hidden;">2,00</div><div class="a" style="left:835px;top:533px;width:47px;height:13px;border:1px solid #000;box-sizing:border-box"></div><div class="c" style="left:882px;top:534px;width:45px;height:11px;line-height:13px;font-size:9.3px;text-align:center;color:#000;background:#bf8f00;overflow:hidden;">3,00</div><div class="a" style="left:881px;top:533px;width:47px;height:13px;border:1px solid #000;box-sizing:border-box"></div><div class="c" style="left:928px;top:534px;width:45px;height:11px;line-height:13px;font-size:9.3px;text-align:center;color:#000;background:#bf8f00;overflow:hidden;">3,00</div><div class="a" style="left:927px;top:533px;width:47px;height:13px;border:1px solid #000;box-sizing:border-box"></div><div class="c" style="left:974px;top:534px;width:45px;height:11px;line-height:13px;font-size:9.3px;text-align:center;color:#000;background:#bf8f00;overflow:hidden;">3,00</div><div class="a" style="left:973px;top:533px;width:47px;height:13px;border:1px solid #000;box-sizing:border-box"></div><div class="c" style="left:1020px;top:534px;width:45px;height:11px;line-height:13px;font-size:9.3px;text-align:center;color:#000;background:#bf8f00;overflow:hidden;">3,00</div><div class="a" style="left:1019px;top:533px;width:47px;height:13px;border:1px solid #000;box-sizing:border-box"></div><div class="c" style="left:1066px;top:534px;width:27px;height:11px;line-height:13px;font-size:9.3px;text-align:center;color:#000;background:#a9d08e;overflow:hidden;">4,00</div><div class="a" style="left:1065px;top:533px;width:29px;height:13px;border:1px solid #000;box-sizing:border-box"></div><div class="c" style="left:453px;top:546px;width:64px;height:11px;line-height:13px;font-size:9.3px;text-align:center;color:#000;overflow:hidden;">[105 - 110)</div><div class="a" style="left:452px;top:545px;width:66px;height:13px;border:1px solid #000;box-sizing:border-box"></div><div class="c" style="left:518px;top:546px;width:41px;height:11px;line-height:13px;font-size:9.3px;text-align:center;color:#000;overflow:hidden;">105</div><div class="a" style="left:517px;top:545px;width:43px;height:13px;border:1px solid #000;box-sizing:border-box"></div><div class="c" style="left:560px;top:546px;width:45px;height:11px;line-height:13px;font-size:9.3px;text-align:center;color:#000;background:#ff0000;overflow:hidden;">1,00</div><div class="a" style="left:559px;top:545px;width:47px;height:13px;border:1px solid #000;box-sizing:border-box"></div><div class="c" style="left:606px;top:546px;width:45px;height:11px;line-height:13px;font-size:9.3px;text-align:center;color:#000;background:#ff0000;overflow:hidden;">1,00</div><div class="a" style="left:605px;top:545px;width:47px;height:13px;border:1px solid #000;box-sizing:border-box"></div><div class="c" style="left:652px;top:546px;width:45px;height:11px;line-height:13px;font-size:9.3px;text-align:center;color:#000;background:#ff0000;overflow:hidden;">1,00</div><div class="a" style="left:651px;top:545px;width:47px;height:13px;border:1px solid #000;box-sizing:border-box"></div><div class="c" style="left:698px;top:546px;width:45px;height:11px;line-height:13px;font-size:9.3px;text-align:center;color:#000;background:#f4b084;overflow:hidden;">2,00</div><div class="a" style="left:697px;top:545px;width:47px;height:13px;border:1px solid #000;box-sizing:border-box"></div><div class="c" style="left:744px;top:546px;width:45px;height:11px;line-height:13px;font-size:9.3px;text-align:center;color:#000;background:#f4b084;overflow:hidden;">2,00</div><div class="a" style="left:743px;top:545px;width:47px;height:13px;border:1px solid #000;box-sizing:border-box"></div><div class="c" style="left:790px;top:546px;width:45px;height:11px;line-height:13px;font-size:9.3px;text-align:center;color:#000;background:#f4b084;overflow:hidden;">2,00</div><div class="a" style="left:789px;top:545px;width:47px;height:13px;border:1px solid #000;box-sizing:border-box"></div><div class="c" style="left:836px;top:546px;width:45px;height:11px;line-height:13px;font-size:9.3px;text-align:center;color:#000;background:#f4b084;overflow:hidden;">2,00</div><div class="a" style="left:835px;top:545px;width:47px;height:13px;border:1px solid #000;box-sizing:border-box"></div><div class="c" style="left:882px;top:546px;width:45px;height:11px;line-height:13px;font-size:9.3px;text-align:center;color:#000;background:#f4b084;overflow:hidden;">2,00</div><div class="a" style="left:881px;top:545px;width:47px;height:13px;border:1px solid #000;box-sizing:border-box"></div><div class="c" style="left:928px;top:546px;width:45px;height:11px;line-height:13px;font-size:9.3px;text-align:center;color:#000;background:#bf8f00;overflow:hidden;">3,00</div><div class="a" style="left:927px;top:545px;width:47px;height:13px;border:1px solid #000;box-sizing:border-box"></div><div class="c" style="left:974px;top:546px;width:45px;height:11px;line-height:13px;font-size:9.3px;text-align:center;color:#000;background:#bf8f00;overflow:hidden;">3,00</div><div class="a" style="left:973px;top:545px;width:47px;height:13px;border:1px solid #000;box-sizing:border-box"></div><div class="c" style="left:1020px;top:546px;width:45px;height:11px;line-height:13px;font-size:9.3px;text-align:center;color:#000;background:#bf8f00;overflow:hidden;">3,00</div><div class="a" style="left:1019px;top:545px;width:47px;height:13px;border:1px solid #000;box-sizing:border-box"></div><div class="c" style="left:1066px;top:546px;width:27px;height:11px;line-height:13px;font-size:9.3px;text-align:center;color:#000;background:#bf8f00;overflow:hidden;">3,00</div><div class="a" style="left:1065px;top:545px;width:29px;height:13px;border:1px solid #000;box-sizing:border-box"></div><div class="c" style="left:453px;top:558px;width:64px;height:11px;line-height:13px;font-size:9.3px;text-align:center;color:#000;overflow:hidden;">[110 - 115)</div><div class="a" style="left:452px;top:557px;width:66px;height:13px;border:1px solid #000;box-sizing:border-box"></div><div class="c" style="left:518px;top:558px;width:41px;height:11px;line-height:13px;font-size:9.3px;text-align:center;color:#000;overflow:hidden;">110</div><div class="a" style="left:517px;top:557px;width:43px;height:13px;border:1px solid #000;box-sizing:border-box"></div><div class="c" style="left:560px;top:558px;width:45px;height:11px;line-height:13px;font-size:9.3px;text-align:center;color:#000;background:#ff0000;overflow:hidden;">1,00</div><div class="a" style="left:559px;top:557px;width:47px;height:13px;border:1px solid #000;box-sizing:border-box"></div><div class="c" style="left:606px;top:558px;width:45px;height:11px;line-height:13px;font-size:9.3px;text-align:center;color:#000;background:#ff0000;overflow:hidden;">1,00</div><div class="a" style="left:605px;top:557px;width:47px;height:13px;border:1px solid #000;box-sizing:border-box"></div><div class="c" style="left:652px;top:558px;width:45px;height:11px;line-height:13px;font-size:9.3px;text-align:center;color:#000;background:#ff0000;overflow:hidden;">1,00</div><div class="a" style="left:651px;top:557px;width:47px;height:13px;border:1px solid #000;box-sizing:border-box"></div><div class="c" style="left:698px;top:558px;width:45px;height:11px;line-height:13px;font-size:9.3px;text-align:center;color:#000;background:#ff0000;overflow:hidden;">1,00</div><div class="a" style="left:697px;top:557px;width:47px;height:13px;border:1px solid #000;box-sizing:border-box"></div><div class="c" style="left:744px;top:558px;width:45px;height:11px;line-height:13px;font-size:9.3px;text-align:center;color:#000;background:#f4b084;overflow:hidden;">2,00</div><div class="a" style="left:743px;top:557px;width:47px;height:13px;border:1px solid #000;box-sizing:border-box"></div><div class="c" style="left:790px;top:558px;width:45px;height:11px;line-height:13px;font-size:9.3px;text-align:center;color:#000;background:#f4b084;overflow:hidden;">2,00</div><div class="a" style="left:789px;top:557px;width:47px;height:13px;border:1px solid #000;box-sizing:border-box"></div><div class="c" style="left:836px;top:558px;width:45px;height:11px;line-height:13px;font-size:9.3px;text-align:center;color:#000;background:#f4b084;overflow:hidden;">2,00</div><div class="a" style="left:835px;top:557px;width:47px;height:13px;border:1px solid #000;box-sizing:border-box"></div><div class="c" style="left:882px;top:558px;width:45px;height:11px;line-height:13px;font-size:9.3px;text-align:center;color:#000;background:#f4b084;overflow:hidden;">2,00</div><div class="a" style="left:881px;top:557px;width:47px;height:13px;border:1px solid #000;box-sizing:border-box"></div><div class="c" style="left:928px;top:558px;width:45px;height:11px;line-height:13px;font-size:9.3px;text-align:center;color:#000;background:#f4b084;overflow:hidden;">2,00</div><div class="a" style="left:927px;top:557px;width:47px;height:13px;border:1px solid #000;box-sizing:border-box"></div><div class="c" style="left:974px;top:558px;width:45px;height:11px;line-height:13px;font-size:9.3px;text-align:center;color:#000;background:#bf8f00;overflow:hidden;">3,00</div><div class="a" style="left:973px;top:557px;width:47px;height:13px;border:1px solid #000;box-sizing:border-box"></div><div class="c" style="left:1020px;top:558px;width:45px;height:11px;line-height:13px;font-size:9.3px;text-align:center;color:#000;background:#bf8f00;overflow:hidden;">3,00</div><div class="a" style="left:1019px;top:557px;width:47px;height:13px;border:1px solid #000;box-sizing:border-box"></div><div class="c" style="left:1066px;top:558px;width:27px;height:11px;line-height:13px;font-size:9.3px;text-align:center;color:#000;background:#bf8f00;overflow:hidden;">3,00</div><div class="a" style="left:1065px;top:557px;width:29px;height:13px;border:1px solid #000;box-sizing:border-box"></div><div class="c" style="left:453px;top:570px;width:64px;height:11px;line-height:13px;font-size:9.3px;text-align:center;color:#000;overflow:hidden;">[115 - 120)</div><div class="a" style="left:452px;top:569px;width:66px;height:13px;border:1px solid #000;box-sizing:border-box"></div><div class="c" style="left:518px;top:570px;width:41px;height:11px;line-height:13px;font-size:9.3px;text-align:center;color:#000;overflow:hidden;">115</div><div class="a" style="left:517px;top:569px;width:43px;height:13px;border:1px solid #000;box-sizing:border-box"></div><div class="c" style="left:560px;top:570px;width:45px;height:11px;line-height:13px;font-size:9.3px;text-align:center;color:#000;background:#ff0000;overflow:hidden;">1,00</div><div class="a" style="left:559px;top:569px;width:47px;height:13px;border:1px solid #000;box-sizing:border-box"></div><div class="c" style="left:606px;top:570px;width:45px;height:11px;line-height:13px;font-size:9.3px;text-align:center;color:#000;background:#ff0000;overflow:hidden;">1,00</div><div class="a" style="left:605px;top:569px;width:47px;height:13px;border:1px solid #000;box-sizing:border-box"></div><div class="c" style="left:652px;top:570px;width:45px;height:11px;line-height:13px;font-size:9.3px;text-align:center;color:#000;background:#ff0000;overflow:hidden;">1,00</div><div class="a" style="left:651px;top:569px;width:47px;height:13px;border:1px solid #000;box-sizing:border-box"></div><div class="c" style="left:698px;top:570px;width:45px;height:11px;line-height:13px;font-size:9.3px;text-align:center;color:#000;background:#ff0000;overflow:hidden;">1,00</div><div class="a" style="left:697px;top:569px;width:47px;height:13px;border:1px solid #000;box-sizing:border-box"></div><div class="c" style="left:744px;top:570px;width:45px;height:11px;line-height:13px;font-size:9.3px;text-align:center;color:#000;background:#ff0000;overflow:hidden;">1,00</div><div class="a" style="left:743px;top:569px;width:47px;height:13px;border:1px solid #000;box-sizing:border-box"></div><div class="c" style="left:790px;top:570px;width:45px;height:11px;line-height:13px;font-size:9.3px;text-align:center;color:#000;background:#f4b084;overflow:hidden;">2,00</div><div class="a" style="left:789px;top:569px;width:47px;height:13px;border:1px solid #000;box-sizing:border-box"></div><div class="c" style="left:836px;top:570px;width:45px;height:11px;line-height:13px;font-size:9.3px;text-align:center;color:#000;background:#f4b084;overflow:hidden;">2,00</div><div class="a" style="left:835px;top:569px;width:47px;height:13px;border:1px solid #000;box-sizing:border-box"></div><div class="c" style="left:882px;top:570px;width:45px;height:11px;line-height:13px;font-size:9.3px;text-align:center;color:#000;background:#f4b084;overflow:hidden;">2,00</div><div class="a" style="left:881px;top:569px;width:47px;height:13px;border:1px solid #000;box-sizing:border-box"></div><div class="c" style="left:928px;top:570px;width:45px;height:11px;line-height:13px;font-size:9.3px;text-align:center;color:#000;background:#f4b084;overflow:hidden;">2,00</div><div class="a" style="left:927px;top:569px;width:47px;height:13px;border:1px solid #000;box-sizing:border-box"></div><div class="c" style="left:974px;top:570px;width:45px;height:11px;line-height:13px;font-size:9.3px;text-align:center;color:#000;background:#f4b084;overflow:hidden;">2,00</div><div class="a" style="left:973px;top:569px;width:47px;height:13px;border:1px solid #000;box-sizing:border-box"></div><div class="c" style="left:1020px;top:570px;width:45px;height:11px;line-height:13px;font-size:9.3px;text-align:center;color:#000;background:#bf8f00;overflow:hidden;">3,00</div><div class="a" style="left:1019px;top:569px;width:47px;height:13px;border:1px solid #000;box-sizing:border-box"></div><div class="c" style="left:1066px;top:570px;width:27px;height:11px;line-height:13px;font-size:9.3px;text-align:center;color:#000;background:#bf8f00;overflow:hidden;">3,00</div><div class="a" style="left:1065px;top:569px;width:29px;height:13px;border:1px solid #000;box-sizing:border-box"></div><div class="c" style="left:453px;top:582px;width:64px;height:11px;line-height:13px;font-size:9.3px;text-align:center;color:#000;overflow:hidden;">+ 120</div><div class="a" style="left:452px;top:581px;width:66px;height:13px;border:1px solid #000;box-sizing:border-box"></div><div class="c" style="left:518px;top:582px;width:41px;height:11px;line-height:13px;font-size:9.3px;text-align:center;color:#000;overflow:hidden;">120</div><div class="a" style="left:517px;top:581px;width:43px;height:13px;border:1px solid #000;box-sizing:border-box"></div><div class="c" style="left:560px;top:582px;width:45px;height:11px;line-height:13px;font-size:9.3px;text-align:center;color:#000;background:#ff0000;overflow:hidden;">1,00</div><div class="a" style="left:559px;top:581px;width:47px;height:13px;border:1px solid #000;box-sizing:border-box"></div><div class="c" style="left:606px;top:582px;width:45px;height:11px;line-height:13px;font-size:9.3px;text-align:center;color:#000;background:#ff0000;overflow:hidden;">1,00</div><div class="a" style="left:605px;top:581px;width:47px;height:13px;border:1px solid #000;box-sizing:border-box"></div><div class="c" style="left:652px;top:582px;width:45px;height:11px;line-height:13px;font-size:9.3px;text-align:center;color:#000;background:#ff0000;overflow:hidden;">1,00</div><div class="a" style="left:651px;top:581px;width:47px;height:13px;border:1px solid #000;box-sizing:border-box"></div><div class="c" style="left:698px;top:582px;width:45px;height:11px;line-height:13px;font-size:9.3px;text-align:center;color:#000;background:#ff0000;overflow:hidden;">1,00</div><div class="a" style="left:697px;top:581px;width:47px;height:13px;border:1px solid #000;box-sizing:border-box"></div><div class="c" style="left:744px;top:582px;width:45px;height:11px;line-height:13px;font-size:9.3px;text-align:center;color:#000;background:#ff0000;overflow:hidden;">1,00</div><div class="a" style="left:743px;top:581px;width:47px;height:13px;border:1px solid #000;box-sizing:border-box"></div><div class="c" style="left:790px;top:582px;width:45px;height:11px;line-height:13px;font-size:9.3px;text-align:center;color:#000;background:#ff0000;overflow:hidden;">1,00</div><div class="a" style="left:789px;top:581px;width:47px;height:13px;border:1px solid #000;box-sizing:border-box"></div><div class="c" style="left:836px;top:582px;width:45px;height:11px;line-height:13px;font-size:9.3px;text-align:center;color:#000;background:#f4b084;overflow:hidden;">2,00</div><div class="a" style="left:835px;top:581px;width:47px;height:13px;border:1px solid #000;box-sizing:border-box"></div><div class="c" style="left:882px;top:582px;width:45px;height:11px;line-height:13px;font-size:9.3px;text-align:center;color:#000;background:#f4b084;overflow:hidden;">2,00</div><div class="a" style="left:881px;top:581px;width:47px;height:13px;border:1px solid #000;box-sizing:border-box"></div><div class="c" style="left:928px;top:582px;width:45px;height:11px;line-height:13px;font-size:9.3px;text-align:center;color:#000;background:#f4b084;overflow:hidden;">2,00</div><div class="a" style="left:927px;top:581px;width:47px;height:13px;border:1px solid #000;box-sizing:border-box"></div><div class="c" style="left:974px;top:582px;width:45px;height:11px;line-height:13px;font-size:9.3px;text-align:center;color:#000;background:#f4b084;overflow:hidden;">2,00</div><div class="a" style="left:973px;top:581px;width:47px;height:13px;border:1px solid #000;box-sizing:border-box"></div><div class="c" style="left:1020px;top:582px;width:45px;height:11px;line-height:13px;font-size:9.3px;text-align:center;color:#000;background:#f4b084;overflow:hidden;">2,00</div><div class="a" style="left:1019px;top:581px;width:47px;height:13px;border:1px solid #000;box-sizing:border-box"></div><div class="c" style="left:1066px;top:582px;width:27px;height:11px;line-height:13px;font-size:9.3px;text-align:center;color:#000;background:#bf8f00;overflow:hidden;">3,00</div><div class="a" style="left:1065px;top:581px;width:29px;height:13px;border:1px solid #000;box-sizing:border-box"></div><div class="a" style="left:428px;top:390px;width:24px;height:203px;background:#fff;"></div><div class="a" style="left:427px;top:389px;width:26px;height:205px;border:1px solid #000;box-sizing:border-box"></div><div class="c" style="left:419.5px;top:485.0px;width:40px;height:12px;line-height:12px;font-size:9px;font-weight:700;text-align:center;transform:rotate(-90deg)">Peso</div><svg class="a" style="left:453px;top:582px" width="4" height="4" viewBox="0 0 4 4"><path d="M0 0 H4 L0 4 Z" fill="#1e7b34"/></svg><svg class="a" style="left:1066px;top:366px" width="4" height="4" viewBox="0 0 4 4"><path d="M0 0 H4 L0 4 Z" fill="#1e7b34"/></svg><div class="c" style="left:1145px;top:354px;width:51px;height:11px;line-height:13px;font-size:9.3px;text-align:center;color:#fff;background:#002060;overflow:hidden;">Color</div><div class="c" style="left:1197px;top:354px;width:78px;height:11px;line-height:13px;font-size:9.3px;text-align:center;color:#fff;background:#002060;overflow:hidden;">Tipología</div><div class="c" style="left:1276px;top:354px;width:51px;height:11px;line-height:13px;font-size:9.3px;text-align:center;color:#fff;background:#002060;overflow:hidden;">Tipología</div><div class="c" style="left:1328px;top:354px;width:51px;height:11px;line-height:13px;font-size:9.3px;text-align:center;color:#fff;background:#002060;overflow:hidden;">IMC (Hasta)</div><div class="c" style="left:1380px;top:354px;width:51px;height:11px;line-height:13px;font-size:9.3px;text-align:center;color:#fff;background:#002060;overflow:hidden;">prima (Desc</div><div class="c" style="left:1145px;top:366px;width:51px;height:11px;line-height:13px;font-size:9.3px;text-align:center;color:#000;background:#ff0000;overflow:hidden;">1</div><div class="c" style="left:1197px;top:366px;width:78px;height:11px;line-height:13px;font-size:9.3px;text-align:left;color:#000;padding-left:1px;overflow:hidden;">Obesidad Morbida</div><div class="c" style="left:1276px;top:366px;width:51px;height:11px;line-height:13px;font-size:9.3px;overflow:hidden;"><div style="position:absolute;left:50%;top:0;white-space:nowrap;transform:translateX(-50%)">Obesidad Morbida</div></div><div class="c" style="left:1328px;top:366px;width:51px;height:11px;line-height:13px;font-size:9.3px;text-align:center;color:#000;overflow:hidden;">10000</div><div class="c" style="left:1380px;top:366px;width:51px;height:11px;line-height:13px;font-size:9.3px;text-align:center;color:#000;overflow:hidden;">50%</div><div class="c" style="left:1145px;top:378px;width:51px;height:11px;line-height:13px;font-size:9.3px;text-align:center;color:#000;background:#f4b084;overflow:hidden;">2</div><div class="c" style="left:1197px;top:378px;width:78px;height:11px;line-height:13px;font-size:9.3px;text-align:left;color:#000;padding-left:1px;overflow:hidden;">Obesidad</div><div class="c" style="left:1276px;top:378px;width:51px;height:11px;line-height:13px;font-size:9.3px;overflow:hidden;"><div style="position:absolute;left:50%;top:0;white-space:nowrap;transform:translateX(-50%)">Obesidad</div></div><div class="c" style="left:1328px;top:378px;width:51px;height:11px;line-height:13px;font-size:9.3px;text-align:center;color:#000;overflow:hidden;">39</div><div class="c" style="left:1380px;top:378px;width:51px;height:11px;line-height:13px;font-size:9.3px;text-align:center;color:#000;overflow:hidden;">10%</div><div class="c" style="left:1145px;top:390px;width:51px;height:11px;line-height:13px;font-size:9.3px;text-align:center;color:#000;background:#bf8f00;overflow:hidden;">3</div><div class="c" style="left:1197px;top:390px;width:78px;height:11px;line-height:13px;font-size:9.3px;text-align:left;color:#000;padding-left:1px;overflow:hidden;">Sobrepeso</div><div class="c" style="left:1276px;top:390px;width:51px;height:11px;line-height:13px;font-size:9.3px;overflow:hidden;"><div style="position:absolute;left:50%;top:0;white-space:nowrap;transform:translateX(-50%)">Sobrepeso</div></div><div class="c" style="left:1328px;top:390px;width:51px;height:11px;line-height:13px;font-size:9.3px;text-align:center;color:#000;overflow:hidden;">30</div><div class="c" style="left:1380px;top:390px;width:51px;height:11px;line-height:13px;font-size:9.3px;text-align:center;color:#000;overflow:hidden;">5%</div><div class="c" style="left:1145px;top:402px;width:51px;height:11px;line-height:13px;font-size:9.3px;text-align:center;color:#000;background:#a9d08e;overflow:hidden;">4</div><div class="c" style="left:1197px;top:402px;width:78px;height:11px;line-height:13px;font-size:9.3px;text-align:left;color:#000;padding-left:1px;overflow:hidden;">Peso Normal</div><div class="c" style="left:1276px;top:402px;width:51px;height:11px;line-height:13px;font-size:9.3px;overflow:hidden;"><div style="position:absolute;left:50%;top:0;white-space:nowrap;transform:translateX(-50%)">Peso Normal</div></div><div class="c" style="left:1328px;top:402px;width:51px;height:11px;line-height:13px;font-size:9.3px;text-align:center;color:#000;overflow:hidden;">24,93</div><div class="c" style="left:1380px;top:402px;width:51px;height:11px;line-height:13px;font-size:9.3px;text-align:center;color:#000;overflow:hidden;">-5%</div><div class="c" style="left:1145px;top:414px;width:51px;height:11px;line-height:13px;font-size:9.3px;text-align:center;color:#000;background:#bdd7ee;overflow:hidden;">5</div><div class="c" style="left:1197px;top:414px;width:78px;height:11px;line-height:13px;font-size:9.3px;text-align:left;color:#000;padding-left:1px;overflow:hidden;">Peso Bajo</div><div class="c" style="left:1276px;top:414px;width:51px;height:11px;line-height:13px;font-size:9.3px;overflow:hidden;"><div style="position:absolute;left:50%;top:0;white-space:nowrap;transform:translateX(-50%)">Peso Bajo</div></div><div class="c" style="left:1328px;top:414px;width:51px;height:11px;line-height:13px;font-size:9.3px;text-align:center;color:#000;overflow:hidden;">18,41</div><div class="c" style="left:1380px;top:414px;width:51px;height:11px;line-height:13px;font-size:9.3px;text-align:center;color:#000;overflow:hidden;">5%</div><div class="a" style="left:1144px;top:353px;width:53px;height:13px;border:1px solid #000;box-sizing:border-box"></div><div class="a" style="left:1196px;top:353px;width:80px;height:13px;border:1px solid #000;box-sizing:border-box"></div><div class="a" style="left:1275px;top:353px;width:53px;height:13px;border:1px solid #000;box-sizing:border-box"></div><div class="a" style="left:1327px;top:353px;width:53px;height:13px;border:1px solid #000;box-sizing:border-box"></div><div class="a" style="left:1379px;top:353px;width:53px;height:13px;border:1px solid #000;box-sizing:border-box"></div><div class="a" style="left:1144px;top:365px;width:53px;height:13px;border:1px solid #000;box-sizing:border-box"></div><div class="a" style="left:1196px;top:365px;width:80px;height:13px;border:1px solid #000;box-sizing:border-box"></div><div class="a" style="left:1275px;top:365px;width:53px;height:13px;border:1px solid #000;box-sizing:border-box"></div><div class="a" style="left:1327px;top:365px;width:53px;height:13px;border:1px solid #000;box-sizing:border-box"></div><div class="a" style="left:1379px;top:365px;width:53px;height:13px;border:1px solid #000;box-sizing:border-box"></div><div class="a" style="left:1144px;top:377px;width:53px;height:13px;border:1px solid #000;box-sizing:border-box"></div><div class="a" style="left:1196px;top:377px;width:80px;height:13px;border:1px solid #000;box-sizing:border-box"></div><div class="a" style="left:1275px;top:377px;width:53px;height:13px;border:1px solid #000;box-sizing:border-box"></div><div class="a" style="left:1327px;top:377px;width:53px;height:13px;border:1px solid #000;box-sizing:border-box"></div><div class="a" style="left:1379px;top:377px;width:53px;height:13px;border:1px solid #000;box-sizing:border-box"></div><div class="a" style="left:1144px;top:389px;width:53px;height:13px;border:1px solid #000;box-sizing:border-box"></div><div class="a" style="left:1196px;top:389px;width:80px;height:13px;border:1px solid #000;box-sizing:border-box"></div><div class="a" style="left:1275px;top:389px;width:53px;height:13px;border:1px solid #000;box-sizing:border-box"></div><div class="a" style="left:1327px;top:389px;width:53px;height:13px;border:1px solid #000;box-sizing:border-box"></div><div class="a" style="left:1379px;top:389px;width:53px;height:13px;border:1px solid #000;box-sizing:border-box"></div><div class="a" style="left:1144px;top:401px;width:53px;height:13px;border:1px solid #000;box-sizing:border-box"></div><div class="a" style="left:1196px;top:401px;width:80px;height:13px;border:1px solid #000;box-sizing:border-box"></div><div class="a" style="left:1275px;top:401px;width:53px;height:13px;border:1px solid #000;box-sizing:border-box"></div><div class="a" style="left:1327px;top:401px;width:53px;height:13px;border:1px solid #000;box-sizing:border-box"></div><div class="a" style="left:1379px;top:401px;width:53px;height:13px;border:1px solid #000;box-sizing:border-box"></div><div class="a" style="left:1144px;top:413px;width:53px;height:13px;border:1px solid #000;box-sizing:border-box"></div><div class="a" style="left:1196px;top:413px;width:80px;height:13px;border:1px solid #000;box-sizing:border-box"></div><div class="a" style="left:1275px;top:413px;width:53px;height:13px;border:1px solid #000;box-sizing:border-box"></div><div class="a" style="left:1327px;top:413px;width:53px;height:13px;border:1px solid #000;box-sizing:border-box"></div><div class="a" style="left:1379px;top:413px;width:53px;height:13px;border:1px solid #000;box-sizing:border-box"></div><div class="c" style="left:1145px;top:462px;width:51px;height:11px;line-height:13px;font-size:9.3px;text-align:right;color:#000;padding-right:1px;overflow:hidden;">0,05</div><div class="a" style="left:1195px;top:453px;width:99px;height:34px;background:#efefef;border-top:2px solid #6d6d6d;border-left:2px solid #6d6d6d;box-sizing:border-box;"></div><div class="t" style="left:1230.21px;top:466.23px;font-size:8px;line-height:8px;color:#333;transform:scaleX(1.052);transform-origin:center;">Botón 1</div><div class="a" style="left:1274px;top:496px;width:54px;height:14px;border:2px solid #107c41;box-sizing:border-box;"></div><div class="a" style="left:1325px;top:507px;width:5px;height:5px;background:#107c41;border:1px solid #fff;"></div><div class="a" style="left:1894px;top:318px;width:25px;height:635px;background:#f0f0f0;"></div><svg class="a" style="left:1900px;top:323px" width="12" height="8" viewBox="0 0 12 8"><path d="M1 7 L6 1 L11 7 Z" fill="#707070"/></svg><div class="a" style="left:1902px;top:339px;width:11px;height:237px;background:#6e6e6e;border-radius:6px;"></div><svg class="a" style="left:1900px;top:941px" width="12" height="8" viewBox="0 0 12 8"><path d="M1 1 L6 7 L11 1 Z" fill="#707070"/></svg><div class="a" style="left:0px;top:953px;width:1919px;height:40px;background:#f0f0f0;"></div><div class="a" style="left:0px;top:953px;width:1894px;height:1px;background:#d9d9d9;"></div><div class="a" style="left:0px;top:993px;width:1919px;height:1px;background:#d6d6d6;"></div><svg class="a" style="left:32px;top:965px" width="8" height="14" viewBox="0 0 8 14" fill="none" stroke="#a0a0a0" stroke-width="1.2"><path d="M7 1 L1 7 L7 13"/></svg><svg class="a" style="left:72px;top:965px" width="8" height="14" viewBox="0 0 8 14" fill="none" stroke="#a0a0a0" stroke-width="1.2"><path d="M1 1 L7 7 L1 13"/></svg><div class="t" style="left:152.80px;top:966.11px;font-size:17px;line-height:17px;color:#333;transform:scaleX(0.986);transform-origin:left;">Datos</div><div class="a" style="left:212px;top:962px;width:1px;height:22px;background:#c8c8c8;"></div><div class="a" style="left:218px;top:953px;width:71px;height:35px;background:#fff;border-radius:0 0 6px 6px;box-shadow:0 1px 2px rgba(0,0,0,0.12);"></div><div class="t" style="left:228.00px;top:962.61px;font-size:17px;line-height:17px;color:#242424;font-weight:700;transform:scaleX(0.951);transform-origin:left;">Tablas</div><div class="a" style="left:228px;top:983px;width:51px;height:2px;background:#107c41;"></div><div class="a" style="left:294px;top:962px;width:1px;height:22px;background:#c8c8c8;"></div><svg class="a" style="left:347px;top:965px" width="14" height="14" viewBox="0 0 14 14" stroke="#444" stroke-width="1.3"><path d="M7 0 V14 M0 7 H14"/></svg><div class="a" style="left:1154px;top:967px;width:3px;height:3px;background:#a6a6a6;"></div><div class="a" style="left:1154px;top:972px;width:3px;height:3px;background:#a6a6a6;"></div><div class="a" style="left:1154px;top:977px;width:3px;height:3px;background:#a6a6a6;"></div><div class="a" style="left:1176px;top:963px;width:743px;height:20px;background:#f6f6f6;border-radius:10px;"></div><svg class="a" style="left:1181px;top:967px" width="9" height="12" viewBox="0 0 9 12"><path d="M8 1 L1 6 L8 11 Z" fill="#6e6e6e"/></svg><div class="a" style="left:1197px;top:968px;width:660px;height:11px;background:#6e6e6e;border-radius:6px;"></div><svg class="a" style="left:1882px;top:967px" width="9" height="12" viewBox="0 0 9 12"><path d="M1 1 L8 6 L1 11 Z" fill="#6e6e6e"/></svg><div class="a" style="left:0px;top:994px;width:1919px;height:26px;background:#f3f3f3;"></div><div class="t" style="left:9.40px;top:1000.99px;font-size:13px;line-height:13px;color:#333;transform:scaleX(0.947);transform-origin:left;">Listo</div><svg class="a" style="left:61px;top:999px" width="19" height="17" viewBox="0 0 19 17" fill="none" stroke="#444" stroke-width="1.1"><rect x="0.5" y="0.5" width="17" height="15"/><path d="M0.5 3.5 H17.5 M3 6.5 H8 M3 9.5 H6 M3 12.5 H6"/><circle cx="13" cy="11" r="4.5" fill="#fff"/><circle cx="13" cy="11" r="2" fill="#444"/></svg><svg class="a" style="left:99px;top:998px" width="20" height="19" viewBox="0 0 20 19" fill="none" stroke="#444" stroke-width="1.1"><path d="M6 3 A7 7 0 1 0 13 15" stroke-dasharray="2.2 1.5"/><path d="M9 1 V8 M6.5 5.5 L9 8 L11.5 5.5"/><path d="M12 11 L19 18 M19 11 L12 18"/></svg><div class="t" style="left:123.00px;top:1000.99px;font-size:13px;line-height:13px;color:#333;">Accesibilidad: es necesario investigar</div><div class="a" style="left:1551px;top:994px;width:50px;height:26px;background:#dedede;"></div><svg class="a" style="left:1567px;top:998px" width="18" height="17" viewBox="0 0 18 17" fill="none" stroke="#333" stroke-width="1.3"><rect x="0.7" y="0.7" width="16.6" height="15.6"/><path d="M6.2 0.7 V16.3 M11.8 0.7 V16.3 M0.7 5.9 H17.3 M0.7 11.1 H17.3"/></svg><svg class="a" style="left:1617px;top:998px" width="18" height="17" viewBox="0 0 18 17" fill="none" stroke="#333" stroke-width="1.2"><rect x="0.6" y="0.6" width="16.8" height="15.8"/><rect x="3.5" y="3.5" width="11" height="10"/><path d="M5.5 6.5 H12.5 M5.5 8.5 H12.5 M5.5 10.5 H12.5"/></svg><svg class="a" style="left:1667px;top:998px" width="18" height="17" viewBox="0 0 18 17" fill="none" stroke="#333" stroke-width="1.2"><path d="M0.6 0.6 H17.4 V16.4 H0.6 Z M6 0.6 V8 H0.6 M10 0.6 V4"/></svg><div class="a" style="left:1708px;top:1006px;width:10px;height:1px;background:#444;"></div><div class="a" style="left:1724px;top:1007px;width:125px;height:1px;background:#c4c4c4;"></div><div class="a" style="left:1786px;top:1004px;width:1px;height:6px;background:#c4c4c4;"></div><div class="a" style="left:1750px;top:1000px;width:7px;height:14px;background:#6e6e6e;"></div><svg class="a" style="left:1854px;top:1001px" width="12" height="12" viewBox="0 0 12 12" stroke="#444" stroke-width="1.2"><path d="M6 0 V12 M0 6 H12"/></svg><div class="t" style="left:1881.00px;top:1000.99px;font-size:13px;line-height:13px;color:#444;transform:scaleX(0.945);transform-origin:left;">50 %</div><div class="a" style="left:0px;top:1020px;width:1919px;height:59px;background:linear-gradient(to right,#1d1e22 0%,#1e1f22 45%,#231e1f 70%,#261e1e 88%,#221d1f 100%);border-top:1px solid #2d2d2f;box-sizing:border-box;"></div><svg class="a" style="left:26px;top:1036px" width="29" height="29" viewBox="0 0 29 29"><defs><linearGradient id="wg" x1="0" y1="0" x2="1" y2="1"><stop offset="0" stop-color="#7fe0ff"/><stop offset="1" stop-color="#1aa0f0"/></linearGradient></defs><rect x="0" y="0" width="13.8" height="13.8" rx="1" fill="url(#wg)"/><rect x="15.2" y="0" width="13.8" height="13.8" rx="1" fill="url(#wg)"/><rect x="0" y="15.2" width="13.8" height="13.8" rx="1" fill="url(#wg)"/><rect x="15.2" y="15.2" width="13.8" height="13.8" rx="1" fill="url(#wg)"/></svg><div class="a" style="left:72px;top:1025px;width:50px;height:50px;background:#2f2c2d;border-radius:5px;"></div><svg class="a" style="left:81px;top:1036px" width="30" height="28" viewBox="0 0 30 28"><rect x="7" y="0" width="23" height="28" rx="2" fill="#21a366"/><rect x="18" y="0" width="12" height="9.3" fill="#33c481"/><rect x="18" y="9.3" width="12" height="9.3" fill="#21a366"/><rect x="7" y="18.6" width="23" height="9.4" fill="#107c41"/><rect x="7" y="9.3" width="11" height="9.3" fill="#185c37" opacity="0.5"/><rect x="0" y="6" width="16" height="16" rx="1.5" fill="#107c41"/><path d="M4.5 9.5 L11.5 18.5 M11.5 9.5 L4.5 18.5" stroke="#fff" stroke-width="2"/></svg><div class="a" style="left:87px;top:1070px;width:20px;height:4px;background:#4cc2ff;border-radius:2px;"></div><svg class="a" style="left:136px;top:1030px" width="37" height="36" viewBox="0 0 37 36"><rect x="0.5" y="6" width="30" height="30" fill="#1a3cc0"/><path d="M10 13 V28 H20" stroke="#fff" stroke-width="3.2" fill="none"/><circle cx="27" cy="10" r="9.5" fill="#4cc2ff"/><text x="27" y="14.3" text-anchor="middle" font-family="Liberation Sans" font-size="12" fill="#111">6</text></svg><svg class="a" style="left:192px;top:1037px" width="30" height="27" viewBox="0 0 30 27"><path d="M0 2 Q0 0 2 0 H10 L13 3 H28 Q30 3 30 5 V25 Q30 27 28 27 H2 Q0 27 0 25 Z" fill="#e8a317"/><path d="M0 7 H30 V25 Q30 27 28 27 H2 Q0 27 0 25 Z" fill="#ffd35c"/><rect x="8" y="19" width="14" height="8" rx="1.5" fill="#2b7de0"/><rect x="10" y="21.5" width="10" height="1.5" fill="#bfe0ff"/></svg><svg class="a" style="left:247px;top:1035px" width="30" height="30" viewBox="0 0 30 30"><circle cx="15" cy="15" r="15" fill="#db4437"/><path d="M15 15 L2 22.5 A15 15 0 0 0 15 30 Z" fill="#0f9d58"/><path d="M15 15 L2 22.5 A15 15 0 0 1 2 7.5 L9 15 Z" fill="#0f9d58"/><path d="M15 15 L28 7.5 A15 15 0 0 1 15 30 L22 18 Z" fill="#ffcd40"/><path d="M15 15 L15 30 A15 15 0 0 1 1.2 20.5 Z" fill="#0f9d58"/><circle cx="15" cy="15" r="7" fill="#fff"/><circle cx="15" cy="15" r="5.5" fill="#4285f4"/></svg><svg class="a" style="left:302px;top:1036px" width="30" height="28" viewBox="0 0 30 28"><rect x="7" y="0" width="23" height="28" rx="2" fill="#2b7cd3"/><rect x="7" y="0" width="23" height="7" fill="#41a5ee"/><rect x="7" y="7" width="23" height="7" fill="#2b7cd3"/><rect x="7" y="14" width="23" height="7" fill="#185abd"/><rect x="7" y="21" width="23" height="7" fill="#103f91"/><rect x="0" y="6" width="16" height="16" rx="1.5" fill="#185abd"/><path d="M3 10 L5 18 L8 11.5 L11 18 L13 10" stroke="#fff" stroke-width="1.6" fill="none"/></svg><div class="a" style="left:148px;top:1070px;width:8px;height:4px;background:#8c8c8c;border-radius:2px;"></div><div class="a" style="left:203px;top:1070px;width:8px;height:4px;background:#8c8c8c;border-radius:2px;"></div><div class="a" style="left:258px;top:1070px;width:8px;height:4px;background:#8c8c8c;border-radius:2px;"></div><div class="a" style="left:313px;top:1070px;width:8px;height:4px;background:#8c8c8c;border-radius:2px;"></div><svg class="a" style="left:1610px;top:1046px" width="16" height="9" viewBox="0 0 16 9" fill="none" stroke="#fff" stroke-width="1.5"><path d="M1 8 L8 1 L15 8"/></svg><svg class="a" style="left:1647px;top:1043px" width="22" height="18" viewBox="0 0 22 18"><path d="M4 14 Q0 14 0 10.5 Q0 7 4 7 Q5 2 10 2 Q15 2 16 7 Q19 8 18 12 L16 14 Z" fill="#d8d8d8"/><circle cx="15" cy="12" r="5.5" fill="#e02030"/><path d="M12.8 9.8 L17.2 14.2 M17.2 9.8 L12.8 14.2" stroke="#fff" stroke-width="1.3"/></svg><svg class="a" style="left:1688px;top:1042px" width="21" height="16" viewBox="0 0 21 16" fill="none" stroke="#fff" stroke-width="1.5"><path d="M1 5.5 Q10.5 -2.5 20 5.5"/><path d="M4 8.7 Q10.5 3 17 8.7"/><path d="M7 11.8 Q10.5 9 14 11.8"/><circle cx="10.5" cy="14.5" r="1" fill="#fff"/></svg><svg class="a" style="left:1718px;top:1042px" width="20" height="16" viewBox="0 0 20 16" fill="none" stroke="#fff" stroke-width="1.3"><path d="M1 5 H4 L9 1 V15 L4 11 H1 Z"/><path d="M12.5 5 L18.5 11 M18.5 5 L12.5 11"/></svg><svg class="a" style="left:1747px;top:1043px" width="22" height="14" viewBox="0 0 22 14" fill="none" stroke="#fff" stroke-width="1.3"><rect x="0.7" y="0.7" width="17.6" height="12.6" rx="2.5"/><rect x="3" y="3" width="5" height="8" fill="#fff" stroke="none"/><path d="M19.5 5 V9" stroke-width="2"/></svg><div class="t" style="left:1838.25px;top:1033.15px;font-size:14px;line-height:14px;color:#fff;transform:scaleX(0.991);transform-origin:right;">9:29</div><div class="t" style="left:1795.43px;top:1052.65px;font-size:14px;line-height:14px;color:#fff;transform:scaleX(1.099);transform-origin:right;">08/07/2024</div><svg class="a" style="left:1876px;top:1041px" width="19" height="19" viewBox="0 0 19 19" fill="#fff"><path d="M9 2 Q3 2 3 9 V13 L1 15.5 H17 L15 13 V9 Q15 2 9 2 Z"/><rect x="6.5" y="16.5" width="5" height="2" rx="1"/><text x="5" y="12" font-family="Liberation Sans" font-weight="bold" font-size="7" fill="#1e1b1c">z</text><text x="12" y="7" font-family="Liberation Sans" font-weight="bold" font-size="7" fill="#fff">z</text></svg><div class="a" style="left:1454px;top:181px;width:435px;height:735px;background:#26408b;border-radius:8px;box-shadow:0 14px 44px 6px rgba(0,0,0,0.34), 0 0 10px rgba(0,0,0,0.16);"></div><div class="a" style="left:1454px;top:181px;width:435px;height:37px;background:#f3f2e9;border-radius:8px 8px 0 0;border-top:1px solid #dcdad0;box-sizing:border-box;"></div><div class="t" style="left:1463.00px;top:192.30px;font-size:15px;line-height:15px;color:#1a1a1a;transform:scaleX(0.947);transform-origin:left;">UserForm1</div><svg class="a" style="left:1861px;top:192px" width="14" height="14" viewBox="0 0 14 14" stroke="#222" stroke-width="1.3"><path d="M1 1 L13 13 M13 1 L1 13"/></svg><div class="a" style="left:1464px;top:218px;width:410px;height:400px;background:#c5e1fb;"></div><div class="a" style="left:1464px;top:225px;width:1px;height:391px;background:#9c9c9c;"></div><div class="a" style="left:1465px;top:227px;width:1px;height:388px;background:#fff;"></div><div class="a" style="left:1871px;top:225px;width:1px;height:391px;background:#9c9c9c;"></div><div class="a" style="left:1872px;top:225px;width:2px;height:393px;background:#fff;"></div><div class="a" style="left:1464px;top:615px;width:408px;height:1px;background:#9c9c9c;"></div><div class="a" style="left:1464px;top:616px;width:410px;height:2px;background:#fff;"></div><div class="a" style="left:1464px;top:225px;width:12px;height:2px;background:#9c9c9c;"></div><div class="a" style="left:1530px;top:225px;width:342px;height:2px;background:#9c9c9c;"></div><div class="t" style="left:1481.00px;top:219.84px;font-size:12px;line-height:12px;color:#000;transform:scaleX(1.064);transform-origin:left;">Frame1</div><div class="a" style="left:1467px;top:237px;width:404px;height:20px;background:#26408b;"></div><div class="t" style="left:1538.00px;top:240.03px;font-size:16.5px;line-height:16.5px;color:#fff;font-style:italic;">Calculador de productos de vida-riesgo</div><div class="t" style="left:1487.50px;top:269.22px;font-size:21px;line-height:21px;color:#26408b;font-weight:700;transform:scaleX(0.949);transform-origin:left;-webkit-text-stroke:0.35px #26408b;">Edad</div><div class="t" style="left:1487.50px;top:309.22px;font-size:21px;line-height:21px;color:#26408b;font-weight:700;transform:scaleX(0.993);transform-origin:left;-webkit-text-stroke:0.35px #26408b;">Capital Fall.</div><div class="t" style="left:1487.50px;top:349.22px;font-size:21px;line-height:21px;color:#26408b;font-weight:700;transform:scaleX(1.025);transform-origin:left;-webkit-text-stroke:0.35px #26408b;">Capital IPA</div><div class="t" style="left:1487.50px;top:388.72px;font-size:21px;line-height:21px;color:#26408b;font-weight:700;transform:scaleX(0.982);transform-origin:left;-webkit-text-stroke:0.35px #26408b;">Producto</div><div class="t" style="left:1487.50px;top:428.52px;font-size:21px;line-height:21px;color:#26408b;font-weight:700;transform:scaleX(0.992);transform-origin:left;-webkit-text-stroke:0.35px #26408b;">Comunidad autónoma</div><div class="a" style="left:1726px;top:257px;width:130px;height:38px;background:#fff;border-top:2px solid #7a7a7a;border-left:2px solid #7a7a7a;border-bottom:2px solid #e6e6e6;border-right:2px solid #e6e6e6;box-sizing:border-box"></div><div class="a" style="left:1741px;top:261px;width:1px;height:17px;background:#000;"></div><div class="a" style="left:1726px;top:297px;width:130px;height:38px;background:#fff;border-top:2px solid #7a7a7a;border-left:2px solid #7a7a7a;border-bottom:2px solid #e6e6e6;border-right:2px solid #e6e6e6;box-sizing:border-box"></div><div class="a" style="left:1726px;top:337px;width:130px;height:38px;background:#fff;border-top:2px solid #7a7a7a;border-left:2px solid #7a7a7a;border-bottom:2px solid #e6e6e6;border-right:2px solid #e6e6e6;box-sizing:border-box"></div><div class="a" style="left:1726px;top:377px;width:130px;height:38px;background:#fff;border-top:2px solid #7a7a7a;border-left:2px solid #7a7a7a;border-bottom:2px solid #e6e6e6;border-right:2px solid #e6e6e6;box-sizing:border-box"></div><div class="a" style="left:1832px;top:379px;width:21px;height:33px;background:#efefef;border-top:1px solid #fff;border-left:1px solid #fff;border-bottom:2px solid #6d6d6d;border-right:2px solid #6d6d6d;box-sizing:border-box"></div><svg class="a" style="left:1837px;top:394.5px" width="10" height="6" viewBox="0 0 10 6"><path d="M0.3 0 H9.7 L5 5.5 Z" fill="#000"/></svg><div class="a" style="left:1726px;top:418px;width:130px;height:38px;background:#fff;border-top:2px solid #7a7a7a;border-left:2px solid #7a7a7a;border-bottom:2px solid #e6e6e6;border-right:2px solid #e6e6e6;box-sizing:border-box"></div><div class="a" style="left:1832px;top:420px;width:21px;height:33px;background:#efefef;border-top:1px solid #fff;border-left:1px solid #fff;border-bottom:2px solid #6d6d6d;border-right:2px solid #6d6d6d;box-sizing:border-box"></div><svg class="a" style="left:1837px;top:435.5px" width="10" height="6" viewBox="0 0 10 6"><path d="M0.3 0 H9.7 L5 5.5 Z" fill="#000"/></svg><div class="t" style="left:1487.50px;top:478.92px;font-size:21px;line-height:21px;color:#26408b;font-weight:700;transform:scaleX(0.926);transform-origin:left;-webkit-text-stroke:0.35px #26408b;">Peso</div><div class="a" style="left:1557px;top:467px;width:90px;height:38px;background:#fff;border-top:2px solid #7a7a7a;border-left:2px solid #7a7a7a;border-bottom:2px solid #e6e6e6;border-right:2px solid #e6e6e6;box-sizing:border-box"></div><div class="t" style="left:1676.20px;top:478.92px;font-size:21px;line-height:21px;color:#26408b;font-weight:700;transform:scaleX(1.005);transform-origin:left;-webkit-text-stroke:0.35px #26408b;">Altura</div><div class="a" style="left:1756px;top:467px;width:90px;height:38px;background:#fff;border-top:2px solid #7a7a7a;border-left:2px solid #7a7a7a;border-bottom:2px solid #e6e6e6;border-right:2px solid #e6e6e6;box-sizing:border-box"></div><div class="a" style="left:1497px;top:517px;width:160px;height:60px;background:#bcd1ee;border-top:3px solid #fff;border-left:2px solid #fff;border-bottom:2px solid #6a6a6a;border-right:2px solid #6a6a6a;box-sizing:border-box"></div><div class="t" style="left:1543.46px;top:538.91px;font-size:17px;line-height:17px;color:#2a8a4a;font-weight:700;font-style:italic;transform:scaleX(1.029);transform-origin:center;">Calcular</div><div class="a" style="left:1676px;top:517px;width:160px;height:60px;background:#bcd1ee;border-top:3px solid #fff;border-left:2px solid #fff;border-bottom:2px solid #6a6a6a;border-right:2px solid #6a6a6a;box-sizing:border-box"></div><div class="t" style="left:1720.09px;top:538.91px;font-size:17px;line-height:17px;color:#d23a12;font-weight:700;font-style:italic;transform:scaleX(1.016);transform-origin:center;">Cancelar</div><div class="a" style="left:1464px;top:628px;width:410px;height:210px;background:#c5e1fb;"></div><div class="a" style="left:1464px;top:635px;width:1px;height:201px;background:#9c9c9c;"></div><div class="a" style="left:1465px;top:637px;width:1px;height:198px;background:#fff;"></div><div class="a" style="left:1871px;top:635px;width:1px;height:201px;background:#9c9c9c;"></div><div class="a" style="left:1872px;top:635px;width:2px;height:203px;background:#fff;"></div><div class="a" style="left:1464px;top:835px;width:408px;height:1px;background:#9c9c9c;"></div><div class="a" style="left:1464px;top:836px;width:410px;height:2px;background:#fff;"></div><div class="a" style="left:1464px;top:635px;width:12px;height:2px;background:#9c9c9c;"></div><div class="a" style="left:1530px;top:635px;width:342px;height:2px;background:#9c9c9c;"></div><div class="t" style="left:1481.00px;top:629.84px;font-size:12px;line-height:12px;color:#000;transform:scaleX(1.064);transform-origin:left;">Frame2</div><div class="t" style="left:1487.50px;top:659.82px;font-size:21px;line-height:21px;color:#26408b;font-weight:700;-webkit-text-stroke:0.35px #26408b;">Prima Fall</div><div class="t" style="left:1487.50px;top:699.02px;font-size:21px;line-height:21px;color:#26408b;font-weight:700;transform:scaleX(1.034);transform-origin:left;-webkit-text-stroke:0.35px #26408b;">Prima IPA</div><div class="t" style="left:1487.50px;top:738.99px;font-size:13px;line-height:13px;color:#26408b;font-weight:700;transform:scaleX(1.032);transform-origin:left;">Descuento o sobre primas</div><div class="t" style="left:1487.50px;top:788.62px;font-size:21px;line-height:21px;color:#26408b;font-weight:700;transform:scaleX(1.019);transform-origin:left;-webkit-text-stroke:0.35px #26408b;">Impuestos</div><div class="a" style="left:1667px;top:647px;width:129px;height:38px;background:#fff;border-top:2px solid #7a7a7a;border-left:2px solid #7a7a7a;border-bottom:2px solid #e6e6e6;border-right:2px solid #e6e6e6;box-sizing:border-box"></div><div class="a" style="left:1667px;top:688px;width:129px;height:37px;background:#fff;border-top:2px solid #7a7a7a;border-left:2px solid #7a7a7a;border-bottom:2px solid #e6e6e6;border-right:2px solid #e6e6e6;box-sizing:border-box"></div><div class="a" style="left:1667px;top:737px;width:129px;height:38px;background:#fff;border-top:2px solid #7a7a7a;border-left:2px solid #7a7a7a;border-bottom:2px solid #e6e6e6;border-right:2px solid #e6e6e6;box-sizing:border-box"></div><div class="a" style="left:1667px;top:778px;width:129px;height:37px;background:#fff;border-top:2px solid #7a7a7a;border-left:2px solid #7a7a7a;border-bottom:2px solid #e6e6e6;border-right:2px solid #e6e6e6;box-sizing:border-box"></div><div class="t" style="left:1484.70px;top:860.22px;font-size:21px;line-height:21px;color:#c5e0fb;font-weight:700;transform:scaleX(1.007);transform-origin:left;-webkit-text-stroke:0.35px #c5e0fb;">Prima Total</div><div class="a" style="left:1664px;top:848px;width:130px;height:38px;background:#fff;border-top:2px solid #7a7a7a;border-left:2px solid #7a7a7a;border-bottom:2px solid #e6e6e6;border-right:2px solid #e6e6e6;box-sizing:border-box"></div></body></html>
